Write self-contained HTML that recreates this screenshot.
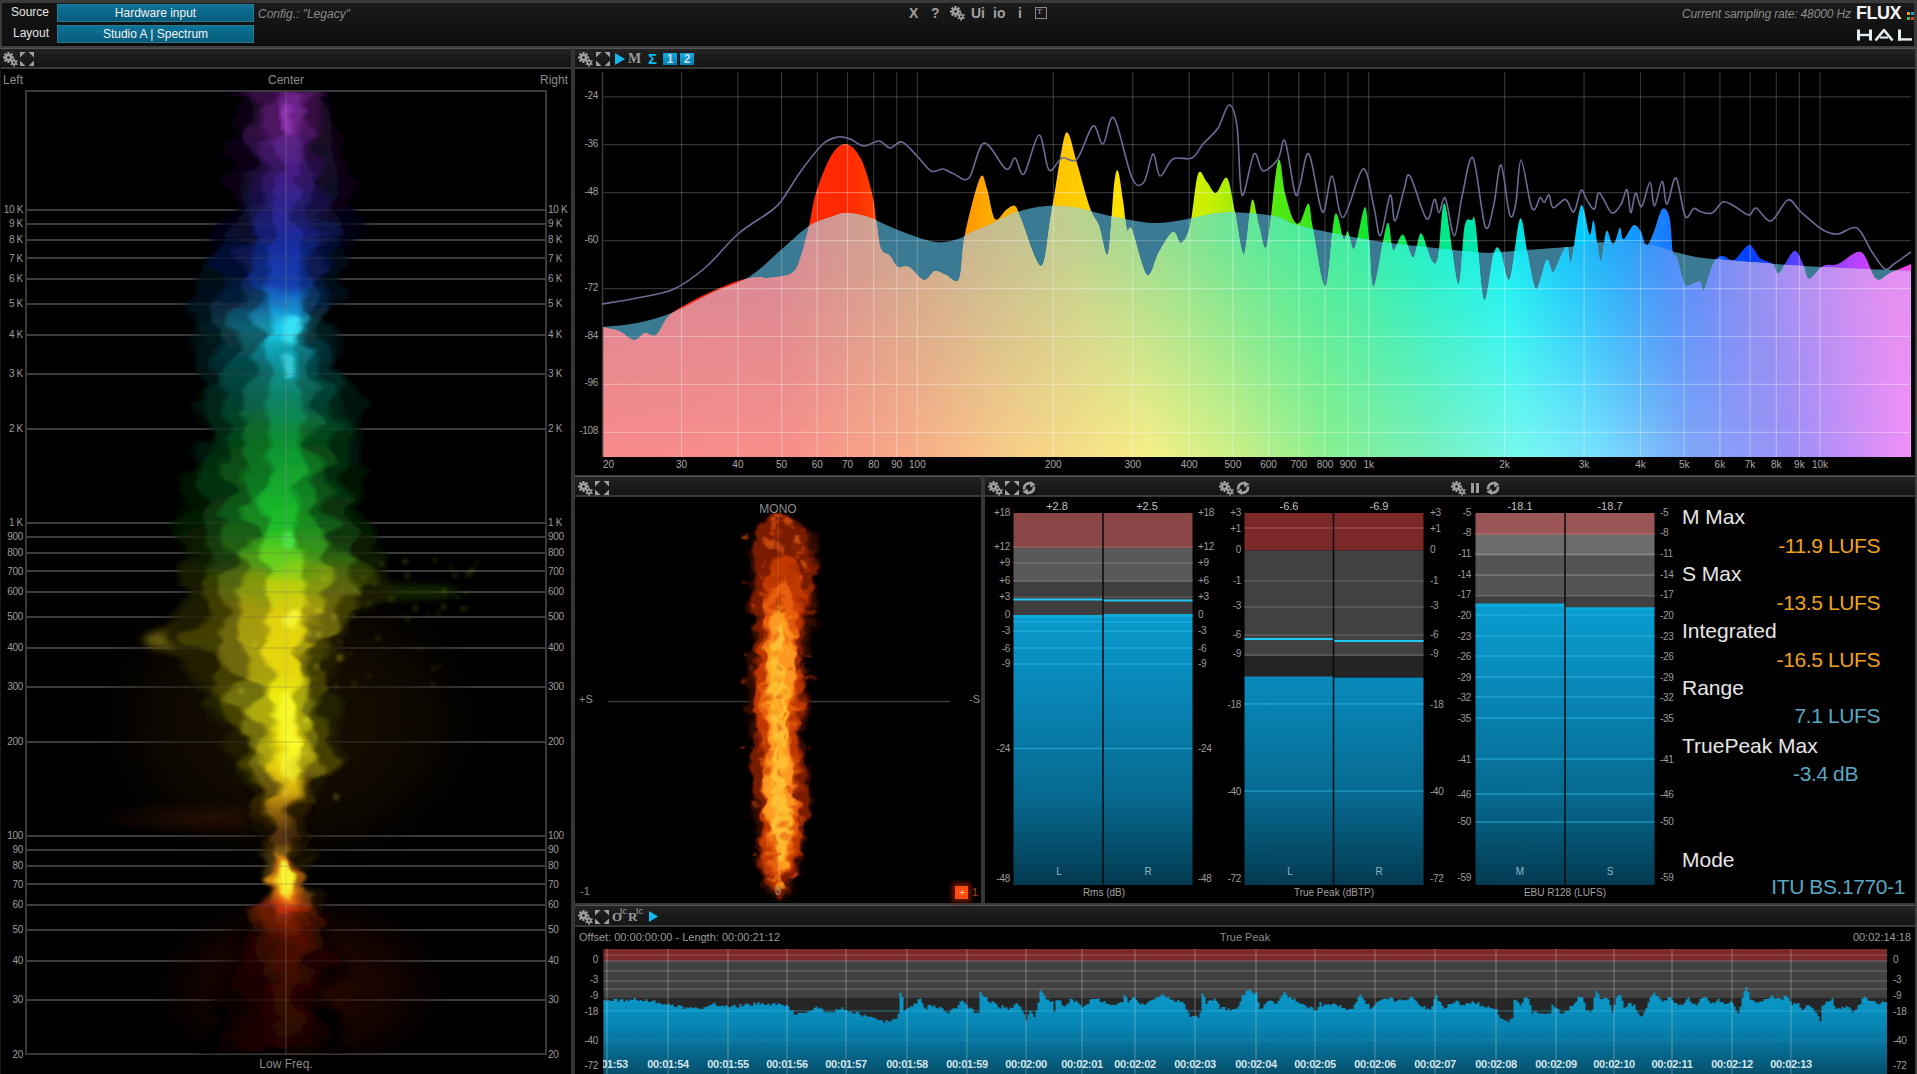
<!DOCTYPE html><html><head><meta charset="utf-8"><style>
html,body{margin:0;padding:0;background:#000;}
body{width:1917px;height:1074px;overflow:hidden;position:relative;font-family:"Liberation Sans", sans-serif;}
.a{position:absolute;}
.t{position:absolute;white-space:nowrap;line-height:1;z-index:3;}
.hdr{position:absolute;background:linear-gradient(#232323,#1b1b1b 45%,#151515);}
</style></head><body>
<div class="a" style="left:0;top:0;width:1917px;height:48px;background:#3a3a3a"></div>
<div class="a" style="left:2px;top:3px;width:1912px;height:43px;background:linear-gradient(#1a1a1a,#0d0d0d)"></div>
<div class="a" style="left:2px;top:3px;width:54px;height:42px;background:#111"></div>
<div class="t" style="left:0;width:49px;text-align:right;top:6px;font-size:12px;color:#e6e6e6">Source</div>
<div class="t" style="left:0;width:49px;text-align:right;top:27px;font-size:12px;color:#e6e6e6">Layout</div>
<div class="a" style="left:57px;top:4px;width:197px;height:18px;background:linear-gradient(#0b7499,#065a79);box-shadow:inset 0 0 0 1px #2a7a94;"></div>
<div class="t" style="left:57px;width:197px;text-align:center;top:7px;font-size:12px;color:#f2f2f2">Hardware input</div>
<div class="a" style="left:57px;top:25px;width:197px;height:18px;background:linear-gradient(#0b7499,#065a79);box-shadow:inset 0 0 0 1px #2a7a94;"></div>
<div class="t" style="left:57px;width:197px;text-align:center;top:28px;font-size:12px;color:#f2f2f2">Studio A | Spectrum</div>
<div class="t" style="left:258px;top:8px;font-size:12px;font-style:italic;color:#8a8a8a">Config.: "Legacy"</div>
<div class="t" style="left:1682px;top:8px;font-size:12px;font-style:italic;color:#8a8a8a;letter-spacing:-0.15px">Current sampling rate: 48000 Hz</div>
<div class="t" style="left:909px;top:6px;font-size:14px;font-weight:bold;color:#a0a0a0">X</div>
<div class="t" style="left:931px;top:6px;font-size:14px;font-weight:bold;color:#a0a0a0">?</div>
<svg class="a" style="left:950px;top:6px" width="15" height="15" viewBox="0 0 15 15"><g fill="#a0a0a0"><circle cx="5.5" cy="5.5" r="3.6"/><rect x="4.4" y="0" width="2.2" height="2.6" transform="rotate(0 5.5 5.5)"/><rect x="4.4" y="0" width="2.2" height="2.6" transform="rotate(45 5.5 5.5)"/><rect x="4.4" y="0" width="2.2" height="2.6" transform="rotate(90 5.5 5.5)"/><rect x="4.4" y="0" width="2.2" height="2.6" transform="rotate(135 5.5 5.5)"/><rect x="4.4" y="0" width="2.2" height="2.6" transform="rotate(180 5.5 5.5)"/><rect x="4.4" y="0" width="2.2" height="2.6" transform="rotate(225 5.5 5.5)"/><rect x="4.4" y="0" width="2.2" height="2.6" transform="rotate(270 5.5 5.5)"/><rect x="4.4" y="0" width="2.2" height="2.6" transform="rotate(315 5.5 5.5)"/><circle cx="5.5" cy="5.5" r="1.3" fill="#151515"/><circle cx="11.1" cy="10.6" r="2.6"/><rect x="10.3" y="6.6" width="1.6" height="1.8" transform="rotate(0 11.1 10.6)"/><rect x="10.3" y="6.6" width="1.6" height="1.8" transform="rotate(60 11.1 10.6)"/><rect x="10.3" y="6.6" width="1.6" height="1.8" transform="rotate(120 11.1 10.6)"/><rect x="10.3" y="6.6" width="1.6" height="1.8" transform="rotate(180 11.1 10.6)"/><rect x="10.3" y="6.6" width="1.6" height="1.8" transform="rotate(240 11.1 10.6)"/><rect x="10.3" y="6.6" width="1.6" height="1.8" transform="rotate(300 11.1 10.6)"/><circle cx="11.1" cy="10.6" r="1" fill="#151515"/></g></svg>
<div class="t" style="left:971px;top:6px;font-size:14px;font-weight:bold;color:#a0a0a0">Ui</div>
<div class="t" style="left:993px;top:6px;font-size:14px;font-weight:bold;color:#a0a0a0">io</div>
<div class="t" style="left:1018px;top:6px;font-size:14px;font-weight:bold;color:#a0a0a0">i</div>
<div class="a" style="left:1035px;top:7px;width:10px;height:10px;border:1.5px solid #8a8a8a"></div>
<div class="t" style="left:1037px;top:8px;font-size:8px;font-weight:bold;color:#8a8a8a">T</div>
<div class="t" style="left:1856px;top:4px;font-size:18px;font-weight:bold;color:#f4f4f4;letter-spacing:-0.5px">FLUX</div>
<div class="a" style="left:1907px;top:12px;width:3px;height:3px;background:#f0a020"></div>
<div class="a" style="left:1911px;top:12px;width:3px;height:3px;background:#20a0e0"></div>
<div class="a" style="left:1907px;top:17px;width:3px;height:3px;background:#40c040"></div>
<div class="a" style="left:1911px;top:17px;width:3px;height:3px;background:#e04020"></div>
<svg class="a" style="left:1856px;top:29px;z-index:3" width="57" height="13" viewBox="0 0 57 13"><g fill="#e4eef2"><rect x="1" y="0.5" width="3" height="11"/><rect x="13" y="0.5" width="3" height="11"/><rect x="1" y="4.8" width="15" height="2.4"/><rect x="42" y="0.5" width="3" height="11"/><rect x="42" y="9.2" width="14" height="2.4"/></g><path d="M19.5 11.5 L28 1 L36.5 11.5" fill="none" stroke="#e4eef2" stroke-width="2.6"/><rect x="24" y="7.5" width="8" height="2" fill="#e4eef2"/></svg>
<div class="a" style="left:0;top:46px;width:1917px;height:3px;background:#404040"></div>
<div class="hdr" style="left:0px;top:49px;width:571px;height:18px"></div>
<div class="a" style="left:0px;top:48px;width:571px;height:1px;background:#555"></div>
<div class="a" style="left:0px;top:67px;width:571px;height:2px;background:#393939"></div>
<div class="hdr" style="left:575px;top:49px;width:1340px;height:18px"></div>
<div class="a" style="left:575px;top:48px;width:1340px;height:1px;background:#555"></div>
<div class="a" style="left:575px;top:67px;width:1340px;height:2px;background:#393939"></div>
<div class="a" style="left:571px;top:49px;width:4px;height:1025px;background:#353535"></div>
<div class="a" style="left:1915px;top:46px;width:2px;height:1028px;background:#404040"></div>
<div class="a" style="left:0px;top:49px;width:1px;height:1025px;background:#181818"></div>
<div class="a" style="left:575px;top:475px;width:1340px;height:2px;background:#3a3a3a"></div>
<div class="hdr" style="left:575px;top:477px;width:406px;height:18px"></div>
<div class="a" style="left:575px;top:476px;width:406px;height:1px;background:#555"></div>
<div class="a" style="left:575px;top:495px;width:406px;height:2px;background:#393939"></div>
<div class="hdr" style="left:985px;top:477px;width:930px;height:18px"></div>
<div class="a" style="left:985px;top:476px;width:930px;height:1px;background:#555"></div>
<div class="a" style="left:985px;top:495px;width:930px;height:2px;background:#393939"></div>
<div class="a" style="left:981px;top:477px;width:4px;height:428px;background:#353535"></div>
<div class="a" style="left:575px;top:903px;width:1340px;height:2px;background:#3a3a3a"></div>
<div class="hdr" style="left:575px;top:906px;width:1340px;height:19px"></div>
<div class="a" style="left:575px;top:905px;width:1340px;height:1px;background:#555"></div>
<div class="a" style="left:575px;top:925px;width:1340px;height:2px;background:#393939"></div>
<svg class="a" style="left:3px;top:52px" width="15" height="15" viewBox="0 0 15 15"><g fill="#a0a0a0"><circle cx="5.5" cy="5.5" r="3.6"/><rect x="4.4" y="0" width="2.2" height="2.6" transform="rotate(0 5.5 5.5)"/><rect x="4.4" y="0" width="2.2" height="2.6" transform="rotate(45 5.5 5.5)"/><rect x="4.4" y="0" width="2.2" height="2.6" transform="rotate(90 5.5 5.5)"/><rect x="4.4" y="0" width="2.2" height="2.6" transform="rotate(135 5.5 5.5)"/><rect x="4.4" y="0" width="2.2" height="2.6" transform="rotate(180 5.5 5.5)"/><rect x="4.4" y="0" width="2.2" height="2.6" transform="rotate(225 5.5 5.5)"/><rect x="4.4" y="0" width="2.2" height="2.6" transform="rotate(270 5.5 5.5)"/><rect x="4.4" y="0" width="2.2" height="2.6" transform="rotate(315 5.5 5.5)"/><circle cx="5.5" cy="5.5" r="1.3" fill="#151515"/><circle cx="11.1" cy="10.6" r="2.6"/><rect x="10.3" y="6.6" width="1.6" height="1.8" transform="rotate(0 11.1 10.6)"/><rect x="10.3" y="6.6" width="1.6" height="1.8" transform="rotate(60 11.1 10.6)"/><rect x="10.3" y="6.6" width="1.6" height="1.8" transform="rotate(120 11.1 10.6)"/><rect x="10.3" y="6.6" width="1.6" height="1.8" transform="rotate(180 11.1 10.6)"/><rect x="10.3" y="6.6" width="1.6" height="1.8" transform="rotate(240 11.1 10.6)"/><rect x="10.3" y="6.6" width="1.6" height="1.8" transform="rotate(300 11.1 10.6)"/><circle cx="11.1" cy="10.6" r="1" fill="#151515"/></g></svg>
<svg class="a" style="left:20px;top:52px" width="14" height="14" viewBox="0 0 14 14"><g fill="#a0a0a0"><path d="M0 0h5.5L0 5.5z"/><path d="M14 0v5.5L8.5 0z"/><path d="M0 14v-5.5L5.5 14z"/><path d="M14 14h-5.5L14 8.5z"/></g></svg>
<svg class="a" style="left:578px;top:52px" width="15" height="15" viewBox="0 0 15 15"><g fill="#a0a0a0"><circle cx="5.5" cy="5.5" r="3.6"/><rect x="4.4" y="0" width="2.2" height="2.6" transform="rotate(0 5.5 5.5)"/><rect x="4.4" y="0" width="2.2" height="2.6" transform="rotate(45 5.5 5.5)"/><rect x="4.4" y="0" width="2.2" height="2.6" transform="rotate(90 5.5 5.5)"/><rect x="4.4" y="0" width="2.2" height="2.6" transform="rotate(135 5.5 5.5)"/><rect x="4.4" y="0" width="2.2" height="2.6" transform="rotate(180 5.5 5.5)"/><rect x="4.4" y="0" width="2.2" height="2.6" transform="rotate(225 5.5 5.5)"/><rect x="4.4" y="0" width="2.2" height="2.6" transform="rotate(270 5.5 5.5)"/><rect x="4.4" y="0" width="2.2" height="2.6" transform="rotate(315 5.5 5.5)"/><circle cx="5.5" cy="5.5" r="1.3" fill="#151515"/><circle cx="11.1" cy="10.6" r="2.6"/><rect x="10.3" y="6.6" width="1.6" height="1.8" transform="rotate(0 11.1 10.6)"/><rect x="10.3" y="6.6" width="1.6" height="1.8" transform="rotate(60 11.1 10.6)"/><rect x="10.3" y="6.6" width="1.6" height="1.8" transform="rotate(120 11.1 10.6)"/><rect x="10.3" y="6.6" width="1.6" height="1.8" transform="rotate(180 11.1 10.6)"/><rect x="10.3" y="6.6" width="1.6" height="1.8" transform="rotate(240 11.1 10.6)"/><rect x="10.3" y="6.6" width="1.6" height="1.8" transform="rotate(300 11.1 10.6)"/><circle cx="11.1" cy="10.6" r="1" fill="#151515"/></g></svg>
<svg class="a" style="left:596px;top:52px" width="14" height="14" viewBox="0 0 14 14"><g fill="#a0a0a0"><path d="M0 0h5.5L0 5.5z"/><path d="M14 0v5.5L8.5 0z"/><path d="M0 14v-5.5L5.5 14z"/><path d="M14 14h-5.5L14 8.5z"/></g></svg>
<svg class="a" style="left:615px;top:53px" width="10" height="12"><path d="M0 0L10 6L0 12z" fill="#10b8f0"/></svg>
<div class="t" style="left:628px;top:52px;font-size:14px;font-weight:bold;font-family:'Liberation Serif',serif;color:#9a9a9a">M</div>
<div class="t" style="left:648px;top:51px;font-size:15px;font-weight:bold;color:#10b8f0">&#931;</div>
<div class="a" style="left:663px;top:53px;width:14px;height:12px;background:linear-gradient(#10a8e0,#0680b0)"></div>
<div class="t" style="left:663px;width:14px;text-align:center;top:53px;font-size:12px;font-weight:bold;color:#c8d8e0">1</div>
<div class="a" style="left:680px;top:53px;width:14px;height:12px;background:linear-gradient(#10a8e0,#0680b0)"></div>
<div class="t" style="left:680px;width:14px;text-align:center;top:53px;font-size:12px;font-weight:bold;color:#c8d8e0">2</div>
<svg class="a" style="left:578px;top:481px" width="15" height="15" viewBox="0 0 15 15"><g fill="#a0a0a0"><circle cx="5.5" cy="5.5" r="3.6"/><rect x="4.4" y="0" width="2.2" height="2.6" transform="rotate(0 5.5 5.5)"/><rect x="4.4" y="0" width="2.2" height="2.6" transform="rotate(45 5.5 5.5)"/><rect x="4.4" y="0" width="2.2" height="2.6" transform="rotate(90 5.5 5.5)"/><rect x="4.4" y="0" width="2.2" height="2.6" transform="rotate(135 5.5 5.5)"/><rect x="4.4" y="0" width="2.2" height="2.6" transform="rotate(180 5.5 5.5)"/><rect x="4.4" y="0" width="2.2" height="2.6" transform="rotate(225 5.5 5.5)"/><rect x="4.4" y="0" width="2.2" height="2.6" transform="rotate(270 5.5 5.5)"/><rect x="4.4" y="0" width="2.2" height="2.6" transform="rotate(315 5.5 5.5)"/><circle cx="5.5" cy="5.5" r="1.3" fill="#151515"/><circle cx="11.1" cy="10.6" r="2.6"/><rect x="10.3" y="6.6" width="1.6" height="1.8" transform="rotate(0 11.1 10.6)"/><rect x="10.3" y="6.6" width="1.6" height="1.8" transform="rotate(60 11.1 10.6)"/><rect x="10.3" y="6.6" width="1.6" height="1.8" transform="rotate(120 11.1 10.6)"/><rect x="10.3" y="6.6" width="1.6" height="1.8" transform="rotate(180 11.1 10.6)"/><rect x="10.3" y="6.6" width="1.6" height="1.8" transform="rotate(240 11.1 10.6)"/><rect x="10.3" y="6.6" width="1.6" height="1.8" transform="rotate(300 11.1 10.6)"/><circle cx="11.1" cy="10.6" r="1" fill="#151515"/></g></svg>
<svg class="a" style="left:595px;top:481px" width="14" height="14" viewBox="0 0 14 14"><g fill="#a0a0a0"><path d="M0 0h5.5L0 5.5z"/><path d="M14 0v5.5L8.5 0z"/><path d="M0 14v-5.5L5.5 14z"/><path d="M14 14h-5.5L14 8.5z"/></g></svg>
<svg class="a" style="left:988px;top:481px" width="15" height="15" viewBox="0 0 15 15"><g fill="#a0a0a0"><circle cx="5.5" cy="5.5" r="3.6"/><rect x="4.4" y="0" width="2.2" height="2.6" transform="rotate(0 5.5 5.5)"/><rect x="4.4" y="0" width="2.2" height="2.6" transform="rotate(45 5.5 5.5)"/><rect x="4.4" y="0" width="2.2" height="2.6" transform="rotate(90 5.5 5.5)"/><rect x="4.4" y="0" width="2.2" height="2.6" transform="rotate(135 5.5 5.5)"/><rect x="4.4" y="0" width="2.2" height="2.6" transform="rotate(180 5.5 5.5)"/><rect x="4.4" y="0" width="2.2" height="2.6" transform="rotate(225 5.5 5.5)"/><rect x="4.4" y="0" width="2.2" height="2.6" transform="rotate(270 5.5 5.5)"/><rect x="4.4" y="0" width="2.2" height="2.6" transform="rotate(315 5.5 5.5)"/><circle cx="5.5" cy="5.5" r="1.3" fill="#151515"/><circle cx="11.1" cy="10.6" r="2.6"/><rect x="10.3" y="6.6" width="1.6" height="1.8" transform="rotate(0 11.1 10.6)"/><rect x="10.3" y="6.6" width="1.6" height="1.8" transform="rotate(60 11.1 10.6)"/><rect x="10.3" y="6.6" width="1.6" height="1.8" transform="rotate(120 11.1 10.6)"/><rect x="10.3" y="6.6" width="1.6" height="1.8" transform="rotate(180 11.1 10.6)"/><rect x="10.3" y="6.6" width="1.6" height="1.8" transform="rotate(240 11.1 10.6)"/><rect x="10.3" y="6.6" width="1.6" height="1.8" transform="rotate(300 11.1 10.6)"/><circle cx="11.1" cy="10.6" r="1" fill="#151515"/></g></svg>
<svg class="a" style="left:1005px;top:481px" width="14" height="14" viewBox="0 0 14 14"><g fill="#a0a0a0"><path d="M0 0h5.5L0 5.5z"/><path d="M14 0v5.5L8.5 0z"/><path d="M0 14v-5.5L5.5 14z"/><path d="M14 14h-5.5L14 8.5z"/></g></svg>
<svg class="a" style="left:1022px;top:481px" width="14" height="14" viewBox="0 0 14 14"><g fill="none" stroke="#a0a0a0" stroke-width="2.6"><path d="M2.2 8.5 A5 5 0 0 1 9.5 3"/><path d="M11.8 5.5 A5 5 0 0 1 4.5 11"/></g><g fill="#a0a0a0"><path d="M8 0 L13.5 3.2 L8.5 6.5z"/><path d="M6 14 L0.5 10.8 L5.5 7.5z"/></g></svg>
<svg class="a" style="left:1219px;top:481px" width="15" height="15" viewBox="0 0 15 15"><g fill="#a0a0a0"><circle cx="5.5" cy="5.5" r="3.6"/><rect x="4.4" y="0" width="2.2" height="2.6" transform="rotate(0 5.5 5.5)"/><rect x="4.4" y="0" width="2.2" height="2.6" transform="rotate(45 5.5 5.5)"/><rect x="4.4" y="0" width="2.2" height="2.6" transform="rotate(90 5.5 5.5)"/><rect x="4.4" y="0" width="2.2" height="2.6" transform="rotate(135 5.5 5.5)"/><rect x="4.4" y="0" width="2.2" height="2.6" transform="rotate(180 5.5 5.5)"/><rect x="4.4" y="0" width="2.2" height="2.6" transform="rotate(225 5.5 5.5)"/><rect x="4.4" y="0" width="2.2" height="2.6" transform="rotate(270 5.5 5.5)"/><rect x="4.4" y="0" width="2.2" height="2.6" transform="rotate(315 5.5 5.5)"/><circle cx="5.5" cy="5.5" r="1.3" fill="#151515"/><circle cx="11.1" cy="10.6" r="2.6"/><rect x="10.3" y="6.6" width="1.6" height="1.8" transform="rotate(0 11.1 10.6)"/><rect x="10.3" y="6.6" width="1.6" height="1.8" transform="rotate(60 11.1 10.6)"/><rect x="10.3" y="6.6" width="1.6" height="1.8" transform="rotate(120 11.1 10.6)"/><rect x="10.3" y="6.6" width="1.6" height="1.8" transform="rotate(180 11.1 10.6)"/><rect x="10.3" y="6.6" width="1.6" height="1.8" transform="rotate(240 11.1 10.6)"/><rect x="10.3" y="6.6" width="1.6" height="1.8" transform="rotate(300 11.1 10.6)"/><circle cx="11.1" cy="10.6" r="1" fill="#151515"/></g></svg>
<svg class="a" style="left:1236px;top:481px" width="14" height="14" viewBox="0 0 14 14"><g fill="none" stroke="#a0a0a0" stroke-width="2.6"><path d="M2.2 8.5 A5 5 0 0 1 9.5 3"/><path d="M11.8 5.5 A5 5 0 0 1 4.5 11"/></g><g fill="#a0a0a0"><path d="M8 0 L13.5 3.2 L8.5 6.5z"/><path d="M6 14 L0.5 10.8 L5.5 7.5z"/></g></svg>
<svg class="a" style="left:1451px;top:481px" width="15" height="15" viewBox="0 0 15 15"><g fill="#a0a0a0"><circle cx="5.5" cy="5.5" r="3.6"/><rect x="4.4" y="0" width="2.2" height="2.6" transform="rotate(0 5.5 5.5)"/><rect x="4.4" y="0" width="2.2" height="2.6" transform="rotate(45 5.5 5.5)"/><rect x="4.4" y="0" width="2.2" height="2.6" transform="rotate(90 5.5 5.5)"/><rect x="4.4" y="0" width="2.2" height="2.6" transform="rotate(135 5.5 5.5)"/><rect x="4.4" y="0" width="2.2" height="2.6" transform="rotate(180 5.5 5.5)"/><rect x="4.4" y="0" width="2.2" height="2.6" transform="rotate(225 5.5 5.5)"/><rect x="4.4" y="0" width="2.2" height="2.6" transform="rotate(270 5.5 5.5)"/><rect x="4.4" y="0" width="2.2" height="2.6" transform="rotate(315 5.5 5.5)"/><circle cx="5.5" cy="5.5" r="1.3" fill="#151515"/><circle cx="11.1" cy="10.6" r="2.6"/><rect x="10.3" y="6.6" width="1.6" height="1.8" transform="rotate(0 11.1 10.6)"/><rect x="10.3" y="6.6" width="1.6" height="1.8" transform="rotate(60 11.1 10.6)"/><rect x="10.3" y="6.6" width="1.6" height="1.8" transform="rotate(120 11.1 10.6)"/><rect x="10.3" y="6.6" width="1.6" height="1.8" transform="rotate(180 11.1 10.6)"/><rect x="10.3" y="6.6" width="1.6" height="1.8" transform="rotate(240 11.1 10.6)"/><rect x="10.3" y="6.6" width="1.6" height="1.8" transform="rotate(300 11.1 10.6)"/><circle cx="11.1" cy="10.6" r="1" fill="#151515"/></g></svg>
<div class="a" style="left:1471px;top:483px;width:3px;height:10px;background:#9a9a9a"></div><div class="a" style="left:1476px;top:483px;width:3px;height:10px;background:#9a9a9a"></div>
<svg class="a" style="left:1486px;top:481px" width="14" height="14" viewBox="0 0 14 14"><g fill="none" stroke="#a0a0a0" stroke-width="2.6"><path d="M2.2 8.5 A5 5 0 0 1 9.5 3"/><path d="M11.8 5.5 A5 5 0 0 1 4.5 11"/></g><g fill="#a0a0a0"><path d="M8 0 L13.5 3.2 L8.5 6.5z"/><path d="M6 14 L0.5 10.8 L5.5 7.5z"/></g></svg>
<svg class="a" style="left:578px;top:910px" width="15" height="15" viewBox="0 0 15 15"><g fill="#a0a0a0"><circle cx="5.5" cy="5.5" r="3.6"/><rect x="4.4" y="0" width="2.2" height="2.6" transform="rotate(0 5.5 5.5)"/><rect x="4.4" y="0" width="2.2" height="2.6" transform="rotate(45 5.5 5.5)"/><rect x="4.4" y="0" width="2.2" height="2.6" transform="rotate(90 5.5 5.5)"/><rect x="4.4" y="0" width="2.2" height="2.6" transform="rotate(135 5.5 5.5)"/><rect x="4.4" y="0" width="2.2" height="2.6" transform="rotate(180 5.5 5.5)"/><rect x="4.4" y="0" width="2.2" height="2.6" transform="rotate(225 5.5 5.5)"/><rect x="4.4" y="0" width="2.2" height="2.6" transform="rotate(270 5.5 5.5)"/><rect x="4.4" y="0" width="2.2" height="2.6" transform="rotate(315 5.5 5.5)"/><circle cx="5.5" cy="5.5" r="1.3" fill="#151515"/><circle cx="11.1" cy="10.6" r="2.6"/><rect x="10.3" y="6.6" width="1.6" height="1.8" transform="rotate(0 11.1 10.6)"/><rect x="10.3" y="6.6" width="1.6" height="1.8" transform="rotate(60 11.1 10.6)"/><rect x="10.3" y="6.6" width="1.6" height="1.8" transform="rotate(120 11.1 10.6)"/><rect x="10.3" y="6.6" width="1.6" height="1.8" transform="rotate(180 11.1 10.6)"/><rect x="10.3" y="6.6" width="1.6" height="1.8" transform="rotate(240 11.1 10.6)"/><rect x="10.3" y="6.6" width="1.6" height="1.8" transform="rotate(300 11.1 10.6)"/><circle cx="11.1" cy="10.6" r="1" fill="#151515"/></g></svg>
<svg class="a" style="left:595px;top:910px" width="14" height="14" viewBox="0 0 14 14"><g fill="#a0a0a0"><path d="M0 0h5.5L0 5.5z"/><path d="M14 0v5.5L8.5 0z"/><path d="M0 14v-5.5L5.5 14z"/><path d="M14 14h-5.5L14 8.5z"/></g></svg>
<div class="t" style="left:612px;top:910px;font-size:13px;font-weight:bold;font-family:'Liberation Serif',serif;color:#9a9a9a">O</div><div class="t" style="left:620px;top:907px;font-size:9px;color:#9a9a9a">tc</div>
<div class="t" style="left:628px;top:910px;font-size:13px;font-weight:bold;font-family:'Liberation Serif',serif;color:#9a9a9a">R</div><div class="t" style="left:636px;top:907px;font-size:9px;color:#9a9a9a">tc</div>
<svg class="a" style="left:649px;top:911px" width="9" height="11"><path d="M0 0L9 5.5L0 11z" fill="#10b8f0"/></svg>
<div class="t" style="left:3px;top:74px;font-size:12px;color:#8c8c8c">Left</div>
<div class="t" style="left:236px;width:100px;text-align:center;top:74px;font-size:12px;color:#8c8c8c">Center</div>
<div class="t" style="left:468px;width:100px;text-align:right;top:74px;font-size:12px;color:#8c8c8c">Right</div>
<div class="t" style="left:236px;width:100px;text-align:center;top:1058px;font-size:12px;color:#8c8c8c">Low Freq.</div>
<svg class="a" style="left:0;top:0" width="572" height="1074" viewBox="0 0 572 1074"><defs><filter id="bl1" x="-50%" y="-50%" width="200%" height="200%"><feGaussianBlur stdDeviation="9"/></filter><filter id="bl2" x="-50%" y="-50%" width="200%" height="200%"><feGaussianBlur stdDeviation="4"/></filter><filter id="bl3" x="-50%" y="-50%" width="200%" height="200%"><feGaussianBlur stdDeviation="2"/></filter><clipPath id="lclip"><rect x="27" y="92" width="519" height="962"/></clipPath></defs><g stroke="#383838" stroke-width="2" fill="none"><path d="M26 91H546V1054H26Z"/><path d="M26 210H546"/><path d="M26 224H546"/><path d="M26 240H546"/><path d="M26 258H546"/><path d="M26 279H546"/><path d="M26 304H546"/><path d="M26 335H546"/><path d="M26 374H546"/><path d="M26 429H546"/><path d="M26 523H546"/><path d="M26 537H546"/><path d="M26 553H546"/><path d="M26 571H546"/><path d="M26 592H546"/><path d="M26 617H546"/><path d="M26 648H546"/><path d="M26 687H546"/><path d="M26 742H546"/><path d="M26 836H546"/><path d="M26 850H546"/><path d="M26 866H546"/><path d="M26 884H546"/><path d="M26 905H546"/><path d="M26 930H546"/><path d="M26 961H546"/><path d="M26 1000H546"/></g><defs><linearGradient id="fg0" gradientUnits="userSpaceOnUse" x1="0" y1="91" x2="0" y2="1054"><stop offset="0.0010" stop-color="#100514"/><stop offset="0.0312" stop-color="#0f0513"/><stop offset="0.0945" stop-color="#090413"/><stop offset="0.1589" stop-color="#030617"/><stop offset="0.2015" stop-color="#020919"/><stop offset="0.2461" stop-color="#041d21"/><stop offset="0.2752" stop-color="#021617"/><stop offset="0.3209" stop-color="#02130e"/><stop offset="0.3624" stop-color="#021407"/><stop offset="0.4486" stop-color="#041b06"/><stop offset="0.4870" stop-color="#0f1d04"/><stop offset="0.5067" stop-color="#181d02"/><stop offset="0.5389" stop-color="#1f1d02"/><stop offset="0.5701" stop-color="#201e02"/><stop offset="0.6012" stop-color="#201e02"/><stop offset="0.6314" stop-color="#212102"/><stop offset="0.6937" stop-color="#211f02"/><stop offset="0.7259" stop-color="#1e1802"/><stop offset="0.7466" stop-color="#160f02"/><stop offset="0.7778" stop-color="#0b0601"/><stop offset="0.8017" stop-color="#211904"/><stop offset="0.8266" stop-color="#212104"/><stop offset="0.8453" stop-color="#170702"/><stop offset="0.8868" stop-color="#0a0200"/><stop offset="0.9439" stop-color="#070100"/><stop offset="1.0000" stop-color="#050100"/></linearGradient><linearGradient id="fg1" gradientUnits="userSpaceOnUse" x1="0" y1="91" x2="0" y2="1054"><stop offset="0.0010" stop-color="#200a28"/><stop offset="0.0312" stop-color="#1f0a27"/><stop offset="0.0945" stop-color="#120927"/><stop offset="0.1589" stop-color="#060d2f"/><stop offset="0.2015" stop-color="#051334"/><stop offset="0.2461" stop-color="#093c45"/><stop offset="0.2752" stop-color="#042d31"/><stop offset="0.3209" stop-color="#04271d"/><stop offset="0.3624" stop-color="#042a0f"/><stop offset="0.4486" stop-color="#08370c"/><stop offset="0.4870" stop-color="#1e3c09"/><stop offset="0.5067" stop-color="#323c04"/><stop offset="0.5389" stop-color="#413c04"/><stop offset="0.5701" stop-color="#433f04"/><stop offset="0.6012" stop-color="#433f04"/><stop offset="0.6314" stop-color="#454504"/><stop offset="0.6937" stop-color="#454104"/><stop offset="0.7259" stop-color="#3e3104"/><stop offset="0.7466" stop-color="#2d1f03"/><stop offset="0.7778" stop-color="#170d03"/><stop offset="0.8017" stop-color="#453409"/><stop offset="0.8266" stop-color="#454509"/><stop offset="0.8453" stop-color="#310f03"/><stop offset="0.8868" stop-color="#160300"/><stop offset="0.9439" stop-color="#100200"/><stop offset="1.0000" stop-color="#0a0200"/></linearGradient><linearGradient id="fg2" gradientUnits="userSpaceOnUse" x1="0" y1="91" x2="0" y2="1054"><stop offset="0.0010" stop-color="#361044"/><stop offset="0.0312" stop-color="#341041"/><stop offset="0.0945" stop-color="#1e0f42"/><stop offset="0.1589" stop-color="#0b164e"/><stop offset="0.2015" stop-color="#092056"/><stop offset="0.2461" stop-color="#0e6573"/><stop offset="0.2752" stop-color="#064b51"/><stop offset="0.3209" stop-color="#064031"/><stop offset="0.3624" stop-color="#064618"/><stop offset="0.4486" stop-color="#0e5c15"/><stop offset="0.4870" stop-color="#32650e"/><stop offset="0.5067" stop-color="#536507"/><stop offset="0.5389" stop-color="#6c6507"/><stop offset="0.5701" stop-color="#706807"/><stop offset="0.6012" stop-color="#706807"/><stop offset="0.6314" stop-color="#737307"/><stop offset="0.6937" stop-color="#736c07"/><stop offset="0.7259" stop-color="#675207"/><stop offset="0.7466" stop-color="#4b3406"/><stop offset="0.7778" stop-color="#271604"/><stop offset="0.8017" stop-color="#73560e"/><stop offset="0.8266" stop-color="#73730e"/><stop offset="0.8453" stop-color="#511805"/><stop offset="0.8868" stop-color="#240500"/><stop offset="0.9439" stop-color="#1a0400"/><stop offset="1.0000" stop-color="#110300"/></linearGradient><linearGradient id="fg3" gradientUnits="userSpaceOnUse" x1="0" y1="91" x2="0" y2="1054"><stop offset="0.0010" stop-color="#521866"/><stop offset="0.0312" stop-color="#4f1862"/><stop offset="0.0945" stop-color="#2e1763"/><stop offset="0.1589" stop-color="#102176"/><stop offset="0.2015" stop-color="#0d3083"/><stop offset="0.2461" stop-color="#1698ad"/><stop offset="0.2752" stop-color="#0a717a"/><stop offset="0.3209" stop-color="#09614a"/><stop offset="0.3624" stop-color="#096a25"/><stop offset="0.4486" stop-color="#158c1f"/><stop offset="0.4870" stop-color="#4c9816"/><stop offset="0.5067" stop-color="#7d980b"/><stop offset="0.5389" stop-color="#a3980b"/><stop offset="0.5701" stop-color="#a99e0b"/><stop offset="0.6012" stop-color="#a99e0b"/><stop offset="0.6314" stop-color="#adad0b"/><stop offset="0.6937" stop-color="#ada30b"/><stop offset="0.7259" stop-color="#9b7c0a"/><stop offset="0.7466" stop-color="#714e09"/><stop offset="0.7778" stop-color="#3b2107"/><stop offset="0.8017" stop-color="#ad8316"/><stop offset="0.8266" stop-color="#adad16"/><stop offset="0.8453" stop-color="#7a2508"/><stop offset="0.8868" stop-color="#360800"/><stop offset="0.9439" stop-color="#270600"/><stop offset="1.0000" stop-color="#1a0400"/></linearGradient><linearGradient id="fg4" gradientUnits="userSpaceOnUse" x1="0" y1="91" x2="0" y2="1054"><stop offset="0.0010" stop-color="#6e218a"/><stop offset="0.0312" stop-color="#6a2184"/><stop offset="0.0945" stop-color="#3e1f86"/><stop offset="0.1589" stop-color="#162ca0"/><stop offset="0.2015" stop-color="#1241b1"/><stop offset="0.2461" stop-color="#1dceeb"/><stop offset="0.2752" stop-color="#0d98a6"/><stop offset="0.3209" stop-color="#0d8364"/><stop offset="0.3624" stop-color="#0d9032"/><stop offset="0.4486" stop-color="#1cbd2a"/><stop offset="0.4870" stop-color="#67ce1d"/><stop offset="0.5067" stop-color="#a9ce0f"/><stop offset="0.5389" stop-color="#ddce0f"/><stop offset="0.5701" stop-color="#e4d50f"/><stop offset="0.6012" stop-color="#e4d50f"/><stop offset="0.6314" stop-color="#ebeb0f"/><stop offset="0.6937" stop-color="#ebdd0f"/><stop offset="0.7259" stop-color="#d2a80e"/><stop offset="0.7466" stop-color="#996a0c"/><stop offset="0.7778" stop-color="#4f2c09"/><stop offset="0.8017" stop-color="#ebb11d"/><stop offset="0.8266" stop-color="#ebeb1d"/><stop offset="0.8453" stop-color="#a6320b"/><stop offset="0.8868" stop-color="#4a0b00"/><stop offset="0.9439" stop-color="#350800"/><stop offset="1.0000" stop-color="#230600"/></linearGradient></defs><g clip-path="url(#lclip)"><defs><radialGradient id="hz1"><stop offset="0" stop-color="#1a1000" stop-opacity="1"/><stop offset="0.6" stop-color="#140c00" stop-opacity="0.7"/><stop offset="1" stop-color="#100800" stop-opacity="0"/></radialGradient><radialGradient id="hz2"><stop offset="0" stop-color="#2e0800" stop-opacity="1"/><stop offset="0.6" stop-color="#220600" stop-opacity="0.6"/><stop offset="1" stop-color="#1a0400" stop-opacity="0"/></radialGradient><radialGradient id="hz3"><stop offset="0" stop-color="#301004" stop-opacity="1"/><stop offset="1" stop-color="#301004" stop-opacity="0"/></radialGradient></defs><ellipse cx="290" cy="720" rx="200" ry="160" fill="url(#hz1)"/><ellipse cx="300" cy="985" rx="150" ry="95" fill="url(#hz2)"/><ellipse cx="210" cy="818" rx="120" ry="18" fill="url(#hz3)" opacity="0.7"/><ellipse cx="215" cy="640" rx="72" ry="13" fill="#6a5e08" filter="url(#bl2)"/><ellipse cx="235" cy="638" rx="50" ry="7" fill="#a89810" filter="url(#bl3)"/><ellipse cx="400" cy="592" rx="60" ry="7" fill="#182c06" filter="url(#bl2)"/><defs><filter id="disp" x="-10%" y="-5%" width="120%" height="110%"><feTurbulence type="fractalNoise" baseFrequency="0.025 0.05" numOctaves="2" seed="4" result="t"/><feDisplacementMap in="SourceGraphic" in2="t" scale="22" xChannelSelector="R" yChannelSelector="G"/></filter></defs><g filter="url(#disp)"><path d="M209.9 91.0 L252.6 95.0 L246.9 99.0 L240.8 103.0 L235.5 107.0 L232.3 111.0 L232.0 115.0 L234.2 119.0 L237.8 123.0 L240.6 127.0 L240.4 131.0 L236.8 135.0 L230.8 139.0 L224.7 143.0 L221.0 147.0 L221.4 151.0 L225.7 155.0 L232.0 159.0 L237.7 163.0 L240.2 167.0 L238.3 171.0 L232.9 175.0 L226.1 179.0 L220.8 183.0 L218.7 187.0 L221.0 191.0 L226.6 195.0 L233.0 199.0 L237.7 203.0 L238.7 207.0 L235.8 211.0 L229.7 215.0 L222.3 219.0 L215.6 223.0 L211.0 227.0 L209.0 231.0 L209.3 235.0 L210.9 239.0 L212.6 243.0 L214.0 247.0 L214.0 251.0 L212.1 255.0 L208.7 259.0 L204.3 263.0 L199.9 267.0 L196.3 271.0 L194.3 275.0 L193.8 279.0 L194.4 283.0 L195.4 287.0 L195.7 291.0 L194.6 295.0 L192.2 299.0 L189.4 303.0 L187.4 307.0 L187.3 311.0 L189.5 315.0 L193.4 319.0 L197.8 323.0 L201.2 327.0 L201.8 331.0 L200.1 335.0 L197.1 339.0 L193.8 343.0 L191.3 347.0 L190.3 351.0 L190.5 355.0 L192.1 359.0 L194.1 363.0 L196.5 367.0 L199.3 371.0 L202.7 375.0 L206.5 379.0 L209.9 383.0 L211.4 387.0 L210.1 391.0 L205.4 395.0 L198.5 399.0 L192.2 403.0 L188.6 407.0 L189.1 411.0 L194.3 415.0 L202.6 419.0 L211.4 423.0 L217.5 427.0 L218.7 431.0 L214.8 435.0 L207.6 439.0 L198.7 443.0 L191.9 447.0 L189.1 451.0 L190.2 455.0 L193.4 459.0 L196.2 463.0 L196.7 467.0 L194.3 471.0 L189.7 475.0 L184.8 479.0 L181.5 483.0 L180.9 487.0 L182.8 491.0 L186.1 495.0 L189.0 499.0 L189.9 503.0 L188.3 507.0 L184.6 511.0 L179.8 515.0 L175.3 519.0 L172.5 523.0 L172.4 527.0 L174.6 531.0 L178.6 535.0 L183.5 539.0 L188.3 543.0 L192.0 547.0 L193.8 551.0 L193.3 555.0 L190.6 559.0 L186.2 563.0 L181.5 567.0 L177.7 571.0 L175.9 575.0 L176.3 579.0 L178.6 583.0 L181.5 587.0 L184.0 591.0 L185.2 595.0 L184.6 599.0 L182.8 603.0 L180.2 607.0 L177.6 611.0 L175.3 615.0 L173.2 619.0 L170.9 623.0 L168.6 627.0 L166.5 631.0 L165.3 635.0 L165.5 639.0 L169.4 643.0 L174.8 647.0 L179.8 651.0 L183.1 655.0 L184.5 659.0 L184.3 663.0 L184.1 667.0 L185.2 671.0 L188.0 675.0 L193.3 679.0 L199.9 683.0 L205.6 687.0 L208.6 691.0 L208.3 695.0 L205.7 699.0 L201.8 703.0 L200.2 707.0 L202.6 711.0 L208.9 715.0 L217.5 719.0 L225.6 723.0 L230.8 727.0 L231.6 731.0 L228.7 735.0 L224.1 739.0 L220.2 743.0 L219.2 747.0 L221.7 751.0 L226.7 755.0 L232.6 759.0 L238.2 763.0 L241.4 767.0 L242.4 771.0 L242.2 775.0 L242.0 779.0 L242.9 783.0 L245.4 787.0 L248.5 791.0 L250.8 795.0 L252.3 799.0 L252.6 803.0 L252.0 807.0 L250.9 811.0 L250.1 815.0 L249.8 819.0 L250.2 823.0 L251.2 827.0 L252.8 831.0 L254.8 835.0 L257.3 839.0 L261.1 843.0 L265.1 847.0 L268.5 851.0 L271.0 855.0 L272.4 859.0 L272.8 863.0 L271.2 867.0 L269.8 871.0 L269.2 875.0 L269.7 879.0 L271.0 883.0 L273.1 887.0 L271.3 891.0 L269.9 895.0 L268.8 899.0 L267.6 903.0 L266.3 907.0 L264.0 911.0 L259.8 915.0 L253.4 919.0 L245.3 923.0 L236.7 927.0 L229.4 931.0 L225.2 935.0 L224.5 939.0 L226.7 943.0 L231.1 947.0 L235.3 951.0 L236.1 955.0 L233.1 959.0 L227.3 963.0 L220.6 967.0 L215.4 971.0 L213.2 975.0 L213.9 979.0 L216.1 983.0 L217.9 987.0 L217.7 991.0 L215.2 995.0 L211.2 999.0 L207.7 1003.0 L206.3 1007.0 L207.8 1011.0 L211.5 1015.0 L215.4 1019.0 L217.6 1023.0 L216.6 1027.0 L212.4 1031.0 L206.2 1035.0 L200.1 1039.0 L195.9 1043.0 L194.7 1047.0 L196.1 1051.0 L356.2 1051.0 L351.2 1047.0 L345.4 1043.0 L340.7 1039.0 L338.7 1035.0 L339.7 1031.0 L342.7 1027.0 L345.9 1023.0 L347.1 1019.0 L345.2 1015.0 L340.0 1011.0 L332.7 1007.0 L325.1 1003.0 L319.5 999.0 L318.1 995.0 L320.0 991.0 L324.6 987.0 L330.9 983.0 L337.5 979.0 L343.1 975.0 L346.7 971.0 L347.9 967.0 L346.6 963.0 L343.5 959.0 L339.7 955.0 L336.6 951.0 L335.1 947.0 L334.1 943.0 L333.5 939.0 L334.2 935.0 L335.0 931.0 L335.2 927.0 L334.3 923.0 L332.7 919.0 L331.0 915.0 L329.7 911.0 L328.7 907.0 L326.6 903.0 L322.3 899.0 L315.6 895.0 L306.6 891.0 L296.5 887.0 L291.9 883.0 L290.1 879.0 L292.3 875.0 L298.1 871.0 L305.7 867.0 L312.8 863.0 L317.0 859.0 L317.3 855.0 L314.0 851.0 L309.0 847.0 L304.5 843.0 L301.9 839.0 L300.9 835.0 L301.8 831.0 L303.2 827.0 L303.8 823.0 L303.1 819.0 L301.6 815.0 L300.3 811.0 L303.1 807.0 L308.5 803.0 L314.9 799.0 L320.9 795.0 L325.3 791.0 L326.6 787.0 L325.9 783.0 L324.8 779.0 L325.0 775.0 L327.4 771.0 L332.2 767.0 L338.2 763.0 L343.9 759.0 L345.7 755.0 L344.9 751.0 L342.0 747.0 L338.0 743.0 L334.7 739.0 L333.2 735.0 L334.0 731.0 L336.7 727.0 L340.4 723.0 L343.8 719.0 L345.9 715.0 L345.9 711.0 L343.8 707.0 L340.0 703.0 L335.0 699.0 L330.6 695.0 L327.1 691.0 L325.4 687.0 L325.9 683.0 L328.6 679.0 L332.5 675.0 L336.6 671.0 L339.4 667.0 L340.5 663.0 L340.0 659.0 L338.5 655.0 L337.1 651.0 L336.6 647.0 L337.1 643.0 L338.7 639.0 L342.0 635.0 L343.9 631.0 L344.4 627.0 L344.8 623.0 L346.7 619.0 L351.9 615.0 L360.8 611.0 L371.9 607.0 L383.3 603.0 L392.4 599.0 L397.1 595.0 L396.6 591.0 L392.1 587.0 L386.5 583.0 L382.6 579.0 L376.9 575.0 L375.8 571.0 L377.9 567.0 L381.1 563.0 L383.5 559.0 L384.9 555.0 L383.8 551.0 L381.0 547.0 L378.0 543.0 L375.8 539.0 L374.6 535.0 L373.5 531.0 L371.8 527.0 L368.7 523.0 L365.5 519.0 L362.0 515.0 L359.5 511.0 L358.9 507.0 L360.2 503.0 L362.7 499.0 L365.2 495.0 L366.6 491.0 L366.4 487.0 L364.7 483.0 L362.3 479.0 L360.2 475.0 L359.0 471.0 L359.0 467.0 L359.9 463.0 L361.2 459.0 L362.3 455.0 L362.8 451.0 L362.8 447.0 L362.2 443.0 L361.2 439.0 L360.1 435.0 L359.1 431.0 L358.6 427.0 L359.1 423.0 L360.7 419.0 L363.2 415.0 L366.0 411.0 L368.3 407.0 L369.2 403.0 L367.8 399.0 L363.6 395.0 L358.5 391.0 L353.8 387.0 L350.3 383.0 L348.2 379.0 L347.1 375.0 L345.8 371.0 L343.6 367.0 L340.4 363.0 L336.7 359.0 L334.1 355.0 L334.3 351.0 L336.8 347.0 L340.4 343.0 L343.4 339.0 L343.6 335.0 L339.8 331.0 L332.4 327.0 L324.1 323.0 L316.8 319.0 L313.4 315.0 L315.3 311.0 L322.1 307.0 L331.4 303.0 L340.3 299.0 L346.1 295.0 L347.6 291.0 L345.4 287.0 L341.5 283.0 L338.2 279.0 L337.1 275.0 L338.3 271.0 L341.3 267.0 L344.7 263.0 L347.2 259.0 L348.6 255.0 L349.2 251.0 L350.1 247.0 L352.0 243.0 L354.7 239.0 L358.5 235.0 L362.2 231.0 L364.7 227.0 L365.3 223.0 L363.9 219.0 L361.0 215.0 L357.5 211.0 L354.3 207.0 L352.0 203.0 L351.0 199.0 L351.1 195.0 L352.1 191.0 L353.6 187.0 L355.2 183.0 L355.9 179.0 L355.6 175.0 L354.1 171.0 L351.5 167.0 L348.4 163.0 L345.6 159.0 L343.8 155.0 L343.3 151.0 L343.9 147.0 L344.6 143.0 L344.5 139.0 L343.0 135.0 L340.2 131.0 L336.8 127.0 L334.2 123.0 L332.3 119.0 L331.6 115.0 L332.4 111.0 L333.5 107.0 L333.7 103.0 L332.0 99.0 L328.9 95.0 L347.7 91.0Z" fill="url(#fg0)" filter="url(#bl2)"/><path d="M215.7 91.0 L254.5 95.0 L255.0 99.0 L255.0 103.0 L254.4 107.0 L253.3 111.0 L251.5 115.0 L249.3 119.0 L247.3 123.0 L245.6 127.0 L244.5 131.0 L244.2 135.0 L245.2 139.0 L247.3 143.0 L250.4 147.0 L253.9 151.0 L256.8 155.0 L258.5 159.0 L258.2 163.0 L256.0 167.0 L252.1 171.0 L247.4 175.0 L243.0 179.0 L239.7 183.0 L237.9 187.0 L238.0 191.0 L239.6 195.0 L241.7 199.0 L243.6 203.0 L244.3 207.0 L243.6 211.0 L241.6 215.0 L238.7 219.0 L235.8 223.0 L233.3 227.0 L231.4 231.0 L230.0 235.0 L228.4 239.0 L226.2 243.0 L223.4 247.0 L219.7 251.0 L215.4 255.0 L211.5 259.0 L209.0 263.0 L208.7 267.0 L210.8 271.0 L214.9 275.0 L219.7 279.0 L223.9 283.0 L226.4 287.0 L226.3 291.0 L223.6 295.0 L219.1 299.0 L214.0 303.0 L210.1 307.0 L208.5 311.0 L209.6 315.0 L213.2 319.0 L218.2 323.0 L223.0 327.0 L225.5 331.0 L225.6 335.0 L223.2 339.0 L219.1 343.0 L214.8 347.0 L211.5 351.0 L210.3 355.0 L211.9 359.0 L215.6 363.0 L220.2 367.0 L224.4 371.0 L226.8 375.0 L226.7 379.0 L224.1 383.0 L219.4 387.0 L214.0 391.0 L208.9 395.0 L205.1 399.0 L203.9 403.0 L204.7 407.0 L206.7 411.0 L209.1 415.0 L211.3 419.0 L212.8 423.0 L213.6 427.0 L213.8 431.0 L213.8 435.0 L213.9 439.0 L213.2 443.0 L212.3 447.0 L211.2 451.0 L209.6 455.0 L207.3 459.0 L204.6 463.0 L201.7 467.0 L199.3 471.0 L197.7 475.0 L197.2 479.0 L197.9 483.0 L199.6 487.0 L201.6 491.0 L203.4 495.0 L204.7 499.0 L205.2 503.0 L205.1 507.0 L204.6 511.0 L204.1 515.0 L203.7 519.0 L203.7 523.0 L204.5 527.0 L205.4 531.0 L206.2 535.0 L206.9 539.0 L207.4 543.0 L207.9 547.0 L208.5 551.0 L209.3 555.0 L210.1 559.0 L210.5 563.0 L210.3 567.0 L209.2 571.0 L207.2 575.0 L204.7 579.0 L202.2 583.0 L200.6 587.0 L200.5 591.0 L202.1 595.0 L205.1 599.0 L208.6 603.0 L211.6 607.0 L212.7 611.0 L211.3 615.0 L206.9 619.0 L200.1 623.0 L192.3 627.0 L185.0 631.0 L180.0 635.0 L178.4 639.0 L182.2 643.0 L189.6 647.0 L198.5 651.0 L207.0 655.0 L213.8 659.0 L217.8 663.0 L219.1 667.0 L218.0 671.0 L215.4 675.0 L213.2 679.0 L212.5 683.0 L213.7 687.0 L216.4 691.0 L219.9 695.0 L223.4 699.0 L225.1 703.0 L225.8 707.0 L225.7 711.0 L225.7 715.0 L226.7 719.0 L229.1 723.0 L233.1 727.0 L238.2 731.0 L243.4 735.0 L247.6 739.0 L249.8 743.0 L249.7 747.0 L247.5 751.0 L244.3 755.0 L241.2 759.0 L240.2 763.0 L241.2 767.0 L244.3 771.0 L249.0 775.0 L254.0 779.0 L258.2 783.0 L260.7 787.0 L260.9 791.0 L258.4 795.0 L255.0 799.0 L251.8 803.0 L249.8 807.0 L249.7 811.0 L251.7 815.0 L255.0 819.0 L258.7 823.0 L261.9 827.0 L263.7 831.0 L263.9 835.0 L262.5 839.0 L260.8 843.0 L259.1 847.0 L257.7 851.0 L257.3 855.0 L258.1 859.0 L260.0 863.0 L261.7 867.0 L264.1 871.0 L267.0 875.0 L270.1 879.0 L273.2 883.0 L276.0 887.0 L275.0 891.0 L273.3 895.0 L270.6 899.0 L267.1 903.0 L263.0 907.0 L258.7 911.0 L254.7 915.0 L251.4 919.0 L249.3 923.0 L248.4 927.0 L248.4 931.0 L248.7 935.0 L248.6 939.0 L247.4 943.0 L245.8 947.0 L244.0 951.0 L241.6 955.0 L239.2 959.0 L237.7 963.0 L237.4 967.0 L238.4 971.0 L240.1 975.0 L241.8 979.0 L242.6 983.0 L241.9 987.0 L239.5 991.0 L235.8 995.0 L231.6 999.0 L227.7 1003.0 L224.9 1007.0 L223.6 1011.0 L223.6 1015.0 L224.2 1019.0 L224.7 1023.0 L224.4 1027.0 L222.9 1031.0 L220.6 1035.0 L218.0 1039.0 L216.1 1043.0 L215.6 1047.0 L216.8 1051.0 L328.0 1051.0 L326.3 1047.0 L327.6 1043.0 L330.8 1039.0 L333.8 1035.0 L334.9 1031.0 L332.9 1027.0 L328.1 1023.0 L321.9 1019.0 L316.3 1015.0 L313.3 1011.0 L313.5 1007.0 L316.6 1003.0 L321.2 999.0 L326.2 995.0 L328.7 991.0 L328.3 987.0 L325.8 983.0 L322.7 979.0 L321.0 975.0 L321.9 971.0 L325.5 967.0 L330.8 963.0 L335.8 959.0 L338.7 955.0 L338.5 951.0 L335.5 947.0 L329.6 943.0 L322.8 939.0 L318.4 935.0 L317.2 931.0 L318.8 927.0 L321.8 923.0 L324.1 919.0 L324.4 915.0 L321.8 911.0 L317.1 907.0 L311.2 903.0 L305.8 899.0 L302.5 895.0 L301.4 891.0 L301.7 887.0 L305.5 883.0 L307.2 879.0 L306.1 875.0 L302.4 871.0 L297.4 867.0 L293.2 863.0 L291.4 859.0 L293.0 855.0 L297.5 851.0 L303.5 847.0 L309.2 843.0 L312.6 839.0 L312.5 835.0 L310.1 831.0 L306.8 827.0 L304.0 823.0 L303.0 819.0 L303.9 815.0 L306.0 811.0 L310.0 807.0 L313.1 803.0 L313.7 799.0 L312.3 795.0 L310.0 791.0 L307.9 787.0 L308.1 783.0 L311.3 779.0 L317.3 775.0 L324.6 771.0 L331.4 767.0 L336.0 763.0 L337.8 759.0 L335.5 755.0 L331.9 751.0 L328.6 747.0 L326.8 743.0 L326.6 739.0 L327.8 735.0 L329.0 731.0 L329.0 727.0 L327.2 723.0 L323.8 719.0 L319.7 715.0 L316.5 711.0 L315.4 707.0 L317.0 703.0 L320.7 699.0 L326.0 695.0 L330.4 691.0 L332.8 687.0 L332.5 683.0 L329.8 679.0 L326.2 675.0 L323.0 671.0 L321.2 667.0 L321.5 663.0 L323.3 659.0 L325.6 655.0 L327.3 651.0 L327.5 647.0 L326.2 643.0 L324.8 639.0 L325.9 635.0 L328.5 631.0 L333.1 627.0 L339.3 623.0 L346.3 619.0 L352.5 615.0 L357.0 611.0 L358.6 607.0 L358.4 603.0 L357.5 599.0 L357.2 595.0 L358.6 591.0 L362.0 587.0 L366.7 583.0 L371.8 579.0 L371.3 575.0 L369.1 571.0 L365.2 567.0 L360.2 563.0 L355.5 559.0 L353.1 555.0 L352.4 551.0 L353.2 547.0 L354.8 543.0 L356.1 539.0 L356.4 535.0 L355.2 531.0 L352.8 527.0 L350.0 523.0 L348.6 519.0 L348.5 515.0 L349.6 511.0 L351.6 507.0 L353.4 503.0 L354.0 499.0 L352.9 495.0 L350.1 491.0 L346.4 487.0 L342.9 483.0 L340.6 479.0 L340.2 475.0 L341.8 471.0 L344.6 467.0 L347.7 463.0 L350.2 459.0 L351.5 455.0 L351.8 451.0 L351.4 447.0 L351.0 443.0 L351.0 439.0 L351.5 435.0 L352.2 431.0 L352.4 427.0 L351.5 423.0 L349.3 419.0 L346.2 415.0 L342.7 411.0 L339.9 407.0 L338.7 403.0 L339.2 399.0 L340.4 395.0 L342.8 391.0 L345.2 387.0 L346.8 383.0 L346.9 379.0 L345.5 375.0 L342.9 371.0 L339.6 367.0 L336.2 363.0 L333.0 359.0 L330.1 355.0 L327.9 351.0 L325.4 347.0 L322.5 343.0 L319.6 339.0 L317.1 335.0 L315.7 331.0 L315.9 327.0 L318.4 323.0 L322.0 319.0 L325.9 315.0 L329.5 311.0 L331.8 307.0 L332.5 303.0 L331.8 299.0 L330.0 295.0 L327.7 291.0 L325.7 287.0 L324.4 283.0 L324.1 279.0 L324.3 275.0 L325.0 271.0 L326.0 267.0 L327.2 263.0 L328.8 259.0 L331.0 255.0 L333.8 251.0 L337.0 247.0 L340.1 243.0 L342.3 239.0 L343.7 235.0 L343.9 231.0 L343.1 227.0 L341.4 223.0 L339.4 219.0 L337.5 215.0 L336.2 211.0 L335.6 207.0 L335.8 203.0 L336.4 199.0 L337.2 195.0 L338.0 191.0 L338.7 187.0 L339.2 183.0 L339.3 179.0 L339.2 175.0 L338.9 171.0 L338.3 167.0 L337.4 163.0 L336.3 159.0 L335.0 155.0 L333.7 151.0 L332.6 147.0 L331.9 143.0 L331.7 139.0 L331.9 135.0 L332.4 131.0 L332.8 127.0 L333.1 123.0 L332.3 119.0 L330.2 115.0 L327.9 111.0 L325.3 107.0 L322.7 103.0 L320.0 99.0 L317.4 95.0 L333.1 91.0Z" fill="url(#fg1)" filter="url(#bl3)"/><path d="M231.4 91.0 L255.5 95.0 L254.7 99.0 L257.2 103.0 L260.9 107.0 L263.3 111.0 L262.5 115.0 L258.4 119.0 L252.5 123.0 L247.0 127.0 L243.4 131.0 L242.5 135.0 L244.0 139.0 L246.8 143.0 L249.9 147.0 L252.6 151.0 L254.9 155.0 L256.5 159.0 L257.4 163.0 L257.2 167.0 L255.6 171.0 L252.7 175.0 L249.5 179.0 L247.0 183.0 L245.9 187.0 L246.6 191.0 L248.2 195.0 L249.5 199.0 L249.3 203.0 L247.8 207.0 L246.1 211.0 L245.9 215.0 L248.3 219.0 L253.2 223.0 L258.7 227.0 L261.9 231.0 L260.6 235.0 L254.5 239.0 L245.2 243.0 L236.5 247.0 L231.3 251.0 L231.3 255.0 L235.9 259.0 L242.5 263.0 L248.0 267.0 L250.0 271.0 L248.5 275.0 L245.0 279.0 L241.9 283.0 L241.0 287.0 L242.6 291.0 L245.0 295.0 L246.1 299.0 L244.5 303.0 L240.1 307.0 L234.5 311.0 L229.9 315.0 L228.2 319.0 L229.7 323.0 L233.4 327.0 L236.9 331.0 L239.1 335.0 L239.4 339.0 L238.1 343.0 L236.3 347.0 L234.7 351.0 L233.5 355.0 L232.4 359.0 L230.8 363.0 L228.6 367.0 L226.2 371.0 L224.6 375.0 L224.4 379.0 L225.6 383.0 L227.2 387.0 L228.0 391.0 L227.3 395.0 L225.2 399.0 L223.6 403.0 L223.2 407.0 L224.7 411.0 L227.6 415.0 L230.7 419.0 L232.2 423.0 L231.5 427.0 L229.0 431.0 L226.2 435.0 L224.9 439.0 L225.5 443.0 L227.7 447.0 L230.0 451.0 L230.5 455.0 L228.1 459.0 L223.5 463.0 L218.8 467.0 L216.6 471.0 L218.4 475.0 L223.5 479.0 L229.9 483.0 L234.7 487.0 L235.6 491.0 L232.6 495.0 L227.2 499.0 L222.2 503.0 L219.8 507.0 L220.4 511.0 L223.0 515.0 L225.4 519.0 L225.9 523.0 L224.4 527.0 L221.7 531.0 L219.9 535.0 L220.9 539.0 L225.0 543.0 L231.1 547.0 L236.8 551.0 L240.1 555.0 L239.8 559.0 L236.3 563.0 L231.1 567.0 L225.9 571.0 L222.0 575.0 L219.9 579.0 L219.1 583.0 L219.5 587.0 L220.6 591.0 L222.6 595.0 L225.3 599.0 L228.3 603.0 L230.5 607.0 L230.9 611.0 L229.3 615.0 L225.8 619.0 L221.7 623.0 L218.6 627.0 L217.4 631.0 L217.6 635.0 L218.0 639.0 L218.6 643.0 L217.7 647.0 L215.5 651.0 L213.9 655.0 L215.3 659.0 L220.6 663.0 L229.1 667.0 L238.1 671.0 L243.8 675.0 L244.7 679.0 L240.7 683.0 L233.8 687.0 L227.7 691.0 L225.4 695.0 L228.1 699.0 L234.0 703.0 L240.7 707.0 L245.4 711.0 L246.4 715.0 L244.2 719.0 L240.9 723.0 L239.2 727.0 L240.5 731.0 L244.8 735.0 L250.3 739.0 L254.8 743.0 L256.9 747.0 L256.2 751.0 L254.1 755.0 L252.0 759.0 L251.8 763.0 L253.3 767.0 L255.8 771.0 L258.5 775.0 L260.5 779.0 L261.9 783.0 L263.0 787.0 L264.1 791.0 L264.7 795.0 L265.2 799.0 L265.2 803.0 L264.9 807.0 L264.8 811.0 L265.8 815.0 L268.3 819.0 L271.8 823.0 L275.0 827.0 L276.3 831.0 L274.6 835.0 L270.1 839.0 L265.2 843.0 L261.8 847.0 L261.8 851.0 L265.6 855.0 L272.1 859.0 L278.8 863.0 L282.5 867.0 L283.0 871.0 L281.0 875.0 L278.6 879.0 L277.7 883.0 L279.3 887.0 L279.9 891.0 L280.0 895.0 L277.5 899.0 L271.6 903.0 L263.5 907.0 L255.5 911.0 L250.4 915.0 L249.6 919.0 L252.7 923.0 L257.5 927.0 L261.4 931.0 L262.4 935.0 L260.0 939.0 L255.3 943.0 L250.9 947.0 L248.3 951.0 L247.0 955.0 L246.3 959.0 L244.9 963.0 L242.3 967.0 L238.7 971.0 L235.4 975.0 L233.9 979.0 L234.9 983.0 L238.1 987.0 L242.2 991.0 L245.6 995.0 L247.3 999.0 L246.9 1003.0 L245.2 1007.0 L243.1 1011.0 L241.0 1015.0 L239.0 1019.0 L237.0 1023.0 L234.8 1027.0 L232.8 1031.0 L231.8 1035.0 L232.6 1039.0 L235.2 1043.0 L238.8 1047.0 L242.0 1051.0 L319.2 1051.0 L312.5 1047.0 L309.7 1043.0 L312.3 1039.0 L318.6 1035.0 L324.8 1031.0 L327.2 1027.0 L323.7 1023.0 L315.6 1019.0 L306.6 1015.0 L300.9 1011.0 L301.2 1007.0 L307.0 1003.0 L315.6 999.0 L323.2 995.0 L326.0 991.0 L323.8 987.0 L318.9 983.0 L315.1 979.0 L315.4 975.0 L320.3 971.0 L328.1 967.0 L335.1 963.0 L338.6 959.0 L337.4 955.0 L332.8 951.0 L327.7 947.0 L323.8 943.0 L322.5 939.0 L324.0 935.0 L326.4 931.0 L327.6 927.0 L326.5 923.0 L323.3 919.0 L319.6 915.0 L316.5 911.0 L314.6 907.0 L312.9 903.0 L310.3 899.0 L306.6 895.0 L301.6 891.0 L296.3 887.0 L294.5 883.0 L294.0 879.0 L294.4 875.0 L294.6 871.0 L293.7 867.0 L291.7 863.0 L289.3 859.0 L288.0 855.0 L289.1 851.0 L292.6 847.0 L297.1 843.0 L300.6 839.0 L300.7 835.0 L297.9 831.0 L293.4 827.0 L289.2 823.0 L287.4 819.0 L288.7 815.0 L292.1 811.0 L297.2 807.0 L301.0 803.0 L302.0 799.0 L301.2 795.0 L300.4 791.0 L301.3 787.0 L305.0 783.0 L310.8 779.0 L316.8 775.0 L320.9 771.0 L321.8 767.0 L320.0 763.0 L317.2 759.0 L314.2 755.0 L313.3 751.0 L314.5 747.0 L316.3 743.0 L317.3 739.0 L316.2 735.0 L313.5 731.0 L310.2 727.0 L307.9 723.0 L307.8 719.0 L309.6 715.0 L312.4 711.0 L314.5 707.0 L314.9 703.0 L313.1 699.0 L310.4 695.0 L307.6 691.0 L305.7 687.0 L305.4 683.0 L306.5 679.0 L308.5 675.0 L310.4 671.0 L311.6 667.0 L311.9 663.0 L311.7 659.0 L311.3 655.0 L311.5 651.0 L312.9 647.0 L315.8 643.0 L320.3 639.0 L326.8 635.0 L332.6 631.0 L336.4 627.0 L337.7 623.0 L336.8 619.0 L335.2 615.0 L334.8 611.0 L336.8 607.0 L341.9 603.0 L349.0 599.0 L355.7 595.0 L359.7 591.0 L359.8 587.0 L356.7 583.0 L353.0 579.0 L348.2 575.0 L347.6 571.0 L350.8 567.0 L355.2 563.0 L357.7 559.0 L356.2 555.0 L349.2 551.0 L339.3 547.0 L330.2 543.0 L325.6 539.0 L326.8 535.0 L332.2 531.0 L338.1 527.0 L340.9 523.0 L339.1 519.0 L333.1 515.0 L326.1 511.0 L321.8 507.0 L322.4 503.0 L327.5 499.0 L334.1 495.0 L338.5 491.0 L338.3 487.0 L333.6 483.0 L326.9 479.0 L321.8 475.0 L320.8 471.0 L324.4 467.0 L330.3 463.0 L335.6 459.0 L337.9 455.0 L336.6 451.0 L333.4 447.0 L331.1 443.0 L331.6 439.0 L335.1 435.0 L339.8 431.0 L343.2 427.0 L343.3 423.0 L340.0 419.0 L334.8 415.0 L330.5 411.0 L328.8 407.0 L330.2 403.0 L332.8 399.0 L334.1 395.0 L333.0 391.0 L329.4 387.0 L324.7 383.0 L320.9 379.0 L319.4 375.0 L320.2 371.0 L321.7 367.0 L322.1 363.0 L319.9 359.0 L315.5 355.0 L310.7 351.0 L307.0 347.0 L305.4 343.0 L305.9 339.0 L307.1 335.0 L307.4 331.0 L306.3 327.0 L304.7 323.0 L303.7 319.0 L304.7 315.0 L308.3 311.0 L313.2 307.0 L317.5 303.0 L319.2 299.0 L317.8 295.0 L314.7 291.0 L312.0 287.0 L312.2 283.0 L315.8 279.0 L321.5 275.0 L326.6 271.0 L328.7 267.0 L327.1 263.0 L323.0 259.0 L319.3 255.0 L318.9 251.0 L323.0 247.0 L330.2 243.0 L337.4 239.0 L341.5 235.0 L340.6 231.0 L335.1 227.0 L327.7 223.0 L321.8 219.0 L319.8 215.0 L322.1 211.0 L326.7 207.0 L330.7 203.0 L331.4 199.0 L328.3 195.0 L322.5 191.0 L316.8 187.0 L313.8 183.0 L314.4 179.0 L318.2 175.0 L323.2 171.0 L326.8 167.0 L327.6 163.0 L325.1 159.0 L320.8 155.0 L316.3 151.0 L313.4 147.0 L312.9 143.0 L314.5 139.0 L317.2 135.0 L319.9 131.0 L321.6 127.0 L321.9 123.0 L320.6 119.0 L318.4 115.0 L316.8 111.0 L316.4 107.0 L317.5 103.0 L319.5 99.0 L321.5 95.0 L336.0 91.0Z" fill="url(#fg2)" filter="url(#bl3)"/><path d="M259.1 91.0 L279.3 95.0 L278.2 99.0 L274.3 103.0 L268.6 107.0 L262.7 111.0 L258.8 115.0 L257.9 119.0 L260.4 123.0 L264.6 127.0 L268.3 131.0 L269.9 135.0 L268.5 139.0 L265.0 143.0 L261.2 147.0 L258.8 151.0 L258.8 155.0 L261.0 159.0 L263.8 163.0 L265.7 167.0 L265.6 171.0 L263.7 175.0 L261.2 179.0 L259.5 183.0 L259.6 187.0 L261.5 191.0 L264.2 195.0 L266.0 199.0 L265.7 203.0 L263.1 207.0 L259.2 211.0 L255.5 215.0 L253.5 219.0 L253.8 223.0 L255.8 227.0 L258.0 231.0 L259.2 235.0 L258.7 239.0 L256.7 243.0 L254.6 247.0 L253.0 251.0 L252.6 255.0 L253.0 259.0 L253.4 263.0 L253.2 267.0 L252.0 271.0 L250.6 275.0 L250.0 279.0 L251.0 283.0 L253.8 287.0 L257.4 291.0 L260.2 295.0 L260.8 299.0 L258.7 303.0 L254.8 307.0 L250.9 311.0 L249.0 315.0 L250.3 319.0 L254.5 323.0 L260.0 327.0 L264.1 331.0 L265.2 335.0 L263.0 339.0 L258.4 343.0 L253.3 347.0 L249.6 351.0 L248.5 355.0 L250.0 359.0 L252.6 363.0 L254.7 367.0 L255.2 371.0 L253.8 375.0 L251.2 379.0 L248.5 383.0 L246.4 387.0 L245.3 391.0 L244.8 395.0 L244.3 399.0 L243.9 403.0 L243.2 407.0 L242.7 411.0 L242.8 415.0 L243.5 419.0 L244.5 423.0 L245.0 427.0 L244.7 431.0 L243.5 435.0 L242.2 439.0 L241.4 443.0 L242.2 447.0 L244.5 451.0 L247.4 455.0 L249.5 459.0 L249.5 463.0 L247.4 467.0 L244.0 471.0 L241.3 475.0 L240.9 479.0 L243.7 483.0 L248.9 487.0 L254.3 491.0 L257.5 495.0 L257.1 499.0 L253.1 503.0 L247.4 507.0 L242.4 511.0 L240.7 515.0 L242.9 519.0 L248.1 523.0 L254.1 527.0 L257.9 531.0 L257.9 535.0 L254.2 539.0 L248.5 543.0 L243.1 547.0 L240.3 551.0 L240.8 555.0 L243.6 559.0 L247.1 563.0 L249.2 567.0 L249.1 571.0 L246.8 575.0 L243.5 579.0 L240.5 583.0 L238.8 587.0 L238.6 591.0 L239.3 595.0 L240.1 599.0 L240.3 603.0 L239.8 607.0 L239.1 611.0 L238.7 615.0 L238.6 619.0 L238.8 623.0 L238.8 627.0 L238.3 631.0 L237.6 635.0 L237.2 639.0 L238.6 643.0 L241.4 647.0 L244.8 651.0 L247.8 655.0 L249.3 659.0 L249.0 663.0 L247.3 667.0 L245.5 671.0 L245.0 675.0 L247.1 679.0 L251.7 683.0 L257.4 687.0 L262.0 691.0 L263.6 695.0 L261.8 699.0 L257.0 703.0 L252.1 707.0 L249.3 711.0 L250.1 715.0 L254.5 719.0 L260.7 723.0 L266.2 727.0 L269.1 731.0 L268.6 735.0 L265.4 739.0 L261.6 743.0 L259.0 747.0 L258.8 751.0 L261.0 755.0 L264.5 759.0 L268.1 763.0 L270.6 767.0 L271.6 771.0 L272.0 775.0 L272.4 779.0 L273.5 783.0 L275.0 787.0 L276.1 791.0 L275.8 795.0 L274.5 799.0 L272.6 803.0 L271.2 807.0 L271.3 811.0 L273.3 815.0 L276.2 819.0 L278.9 823.0 L279.8 827.0 L278.3 831.0 L275.1 835.0 L271.4 839.0 L269.2 843.0 L269.4 847.0 L271.5 851.0 L274.5 855.0 L276.7 859.0 L277.1 863.0 L275.0 867.0 L272.0 871.0 L269.8 875.0 L269.7 879.0 L271.7 883.0 L275.0 887.0 L276.0 891.0 L275.1 895.0 L271.6 899.0 L266.6 903.0 L261.9 907.0 L259.4 911.0 L259.9 915.0 L263.1 919.0 L267.5 923.0 L271.0 927.0 L272.0 931.0 L270.2 935.0 L266.3 939.0 L262.0 943.0 L259.2 947.0 L258.9 951.0 L260.5 955.0 L263.4 959.0 L266.5 963.0 L269.1 967.0 L270.8 971.0 L271.7 975.0 L271.7 979.0 L270.7 983.0 L268.6 987.0 L265.3 991.0 L261.5 995.0 L258.2 999.0 L256.6 1003.0 L257.5 1007.0 L260.7 1011.0 L264.7 1015.0 L267.6 1019.0 L267.5 1023.0 L263.6 1027.0 L256.8 1031.0 L249.3 1035.0 L243.7 1039.0 L241.9 1043.0 L244.0 1047.0 L248.7 1051.0 L319.6 1051.0 L315.6 1047.0 L310.0 1043.0 L305.3 1039.0 L303.2 1035.0 L304.2 1031.0 L307.3 1027.0 L310.6 1023.0 L312.1 1019.0 L311.0 1015.0 L307.5 1011.0 L303.2 1007.0 L300.3 1003.0 L300.1 999.0 L303.3 995.0 L308.1 991.0 L312.7 987.0 L315.2 983.0 L314.7 979.0 L311.4 975.0 L306.8 971.0 L302.7 967.0 L300.7 963.0 L301.4 959.0 L304.6 955.0 L309.0 951.0 L313.4 947.0 L315.8 943.0 L315.7 939.0 L313.9 935.0 L310.9 931.0 L307.5 927.0 L304.4 923.0 L301.8 919.0 L299.9 915.0 L298.7 911.0 L298.0 907.0 L297.2 903.0 L296.2 899.0 L295.0 895.0 L293.7 891.0 L292.3 887.0 L292.8 883.0 L293.4 879.0 L294.0 875.0 L294.4 871.0 L294.1 867.0 L293.0 863.0 L291.1 859.0 L288.8 855.0 L287.1 851.0 L286.6 847.0 L287.9 843.0 L290.6 839.0 L293.6 835.0 L296.1 831.0 L297.1 827.0 L296.2 823.0 L293.8 819.0 L291.0 815.0 L289.2 811.0 L290.2 807.0 L293.3 803.0 L297.2 799.0 L300.6 795.0 L302.4 791.0 L302.0 787.0 L300.4 783.0 L299.3 779.0 L299.9 775.0 L303.1 771.0 L308.1 767.0 L313.4 763.0 L317.1 759.0 L317.1 755.0 L314.2 751.0 L309.6 747.0 L305.1 743.0 L302.6 739.0 L302.9 735.0 L305.5 731.0 L308.7 727.0 L310.9 723.0 L311.0 719.0 L308.9 715.0 L305.9 711.0 L303.7 707.0 L303.5 703.0 L305.2 699.0 L308.0 695.0 L309.9 691.0 L309.2 687.0 L305.7 683.0 L300.4 679.0 L295.5 675.0 L293.1 671.0 L294.4 667.0 L299.4 663.0 L306.1 659.0 L312.0 655.0 L315.0 651.0 L314.1 647.0 L310.0 643.0 L304.9 639.0 L301.9 635.0 L301.8 631.0 L304.9 627.0 L310.4 623.0 L316.4 619.0 L321.3 615.0 L324.0 611.0 L324.4 607.0 L323.6 603.0 L323.1 599.0 L324.0 595.0 L326.4 591.0 L329.9 587.0 L333.3 583.0 L335.7 579.0 L334.2 575.0 L330.9 571.0 L326.8 567.0 L322.6 563.0 L319.7 559.0 L319.0 555.0 L319.8 551.0 L321.7 547.0 L323.9 543.0 L325.3 539.0 L325.3 535.0 L323.6 531.0 L320.4 527.0 L316.7 523.0 L313.7 519.0 L311.8 515.0 L311.6 511.0 L312.8 507.0 L314.6 503.0 L315.8 499.0 L315.9 495.0 L314.5 491.0 L312.5 487.0 L310.8 483.0 L310.8 479.0 L312.8 475.0 L316.3 471.0 L320.1 467.0 L322.3 463.0 L321.8 459.0 L318.3 455.0 L313.1 451.0 L308.3 447.0 L306.0 443.0 L307.5 439.0 L312.5 435.0 L319.3 431.0 L325.4 427.0 L328.5 423.0 L327.6 419.0 L323.4 415.0 L317.9 411.0 L313.3 407.0 L311.3 403.0 L312.1 399.0 L314.3 395.0 L316.5 391.0 L317.3 387.0 L315.8 383.0 L312.7 379.0 L309.5 375.0 L307.7 371.0 L307.9 367.0 L309.7 363.0 L311.7 359.0 L312.4 355.0 L311.0 351.0 L307.4 347.0 L302.7 343.0 L298.8 339.0 L297.2 335.0 L298.2 331.0 L301.4 327.0 L305.3 323.0 L308.1 319.0 L308.9 315.0 L307.7 311.0 L305.8 307.0 L304.5 303.0 L304.6 299.0 L306.3 295.0 L308.8 291.0 L310.9 287.0 L311.6 283.0 L310.7 279.0 L308.7 275.0 L306.9 271.0 L306.3 267.0 L307.5 263.0 L310.4 259.0 L314.0 255.0 L317.1 251.0 L318.9 247.0 L318.8 243.0 L317.1 239.0 L314.8 235.0 L312.5 231.0 L310.9 227.0 L310.0 223.0 L309.5 219.0 L309.3 215.0 L309.2 211.0 L309.2 207.0 L309.5 203.0 L310.2 199.0 L311.1 195.0 L312.0 191.0 L312.6 187.0 L312.6 183.0 L311.8 179.0 L310.2 175.0 L308.3 171.0 L306.2 167.0 L304.4 163.0 L303.2 159.0 L303.0 155.0 L304.0 151.0 L306.2 147.0 L309.3 143.0 L312.6 139.0 L315.2 135.0 L316.2 131.0 L315.2 127.0 L312.3 123.0 L308.2 119.0 L304.2 115.0 L302.1 111.0 L302.3 107.0 L304.7 103.0 L307.8 99.0 L310.1 95.0 L319.4 91.0Z" fill="url(#fg3)" filter="url(#bl3)"/><path d="M275.9 91.0 L282.9 95.0 L280.3 99.0 L278.5 103.0 L278.4 107.0 L280.0 111.0 L282.5 115.0 L284.9 119.0 L286.0 123.0 L285.2 127.0 L282.5 131.0 L278.6 135.0 L275.0 139.0 L272.8 143.0 L272.6 147.0 L274.5 151.0 L277.5 155.0 L280.5 159.0 L282.3 163.0 L282.3 167.0 L280.6 171.0 L277.9 175.0 L275.1 179.0 L273.2 183.0 L272.5 187.0 L272.9 191.0 L273.7 195.0 L274.4 199.0 L274.3 203.0 L273.4 207.0 L272.1 211.0 L270.9 215.0 L270.5 219.0 L270.9 223.0 L272.2 227.0 L273.5 231.0 L274.3 235.0 L274.1 239.0 L272.8 243.0 L270.9 247.0 L268.9 251.0 L267.6 255.0 L267.5 259.0 L268.5 263.0 L270.1 267.0 L271.8 271.0 L272.5 275.0 L272.1 279.0 L270.4 283.0 L268.2 287.0 L266.0 291.0 L264.7 295.0 L264.8 299.0 L266.2 303.0 L268.4 307.0 L270.7 311.0 L272.3 315.0 L272.7 319.0 L271.8 323.0 L269.9 327.0 L267.5 331.0 L265.3 335.0 L264.0 339.0 L263.6 343.0 L264.1 347.0 L265.1 351.0 L266.3 355.0 L267.2 359.0 L267.8 363.0 L268.0 367.0 L268.1 371.0 L268.0 375.0 L268.1 379.0 L268.1 383.0 L268.1 387.0 L268.0 391.0 L267.5 395.0 L266.9 399.0 L266.4 403.0 L266.1 407.0 L266.3 411.0 L266.9 415.0 L267.9 419.0 L269.1 423.0 L270.0 427.0 L270.5 431.0 L270.4 435.0 L269.7 439.0 L268.6 443.0 L267.4 447.0 L266.7 451.0 L266.5 455.0 L267.0 459.0 L267.9 463.0 L268.7 467.0 L269.1 471.0 L268.7 475.0 L267.4 479.0 L265.5 483.0 L263.3 487.0 L261.5 491.0 L260.3 495.0 L260.2 499.0 L261.2 503.0 L262.8 507.0 L264.7 511.0 L266.2 515.0 L266.9 519.0 L266.7 523.0 L265.7 527.0 L264.1 531.0 L262.6 535.0 L261.5 539.0 L261.1 543.0 L261.4 547.0 L262.3 551.0 L263.4 555.0 L264.4 559.0 L265.0 563.0 L265.3 567.0 L265.4 571.0 L265.4 575.0 L265.7 579.0 L266.2 583.0 L266.8 587.0 L267.3 591.0 L267.3 595.0 L266.9 599.0 L266.1 603.0 L265.2 607.0 L264.6 611.0 L264.7 615.0 L265.5 619.0 L266.6 623.0 L267.8 627.0 L268.3 631.0 L268.0 635.0 L266.8 639.0 L265.5 643.0 L264.6 647.0 L264.4 651.0 L265.6 655.0 L267.9 659.0 L271.1 663.0 L274.1 667.0 L276.1 671.0 L276.3 675.0 L274.9 679.0 L272.4 683.0 L269.8 687.0 L268.0 691.0 L267.7 695.0 L269.2 699.0 L271.6 703.0 L274.4 707.0 L276.6 711.0 L277.7 715.0 L277.4 719.0 L276.2 723.0 L274.8 727.0 L273.9 731.0 L273.9 735.0 L274.7 739.0 L275.8 743.0 L276.5 747.0 L276.4 751.0 L275.4 755.0 L273.7 759.0 L272.4 763.0 L271.9 767.0 L272.7 771.0 L274.4 775.0 L276.6 779.0 L278.3 783.0 L278.7 787.0 L277.7 791.0 L275.3 795.0 L272.7 799.0 L270.9 803.0 L270.6 807.0 L272.0 811.0 L274.5 815.0 L277.2 819.0 L278.7 823.0 L278.5 827.0 L276.5 831.0 L273.3 835.0 L270.2 839.0 L268.6 843.0 L268.9 847.0 L271.4 851.0 L275.1 855.0 L279.1 859.0 L282.1 863.0 L283.1 867.0 L282.5 871.0 L280.8 875.0 L279.1 879.0 L278.0 883.0 L278.2 887.0 L278.6 891.0 L279.5 895.0 L280.2 899.0 L280.2 903.0 L279.3 907.0 L278.1 911.0 L277.0 915.0 L276.6 919.0 L277.3 923.0 L278.8 927.0 L280.4 931.0 L281.4 935.0 L281.1 939.0 L279.5 943.0 L277.3 947.0 L275.2 951.0 L273.9 955.0 L273.9 959.0 L275.1 963.0 L277.2 967.0 L279.2 971.0 L280.2 975.0 L279.9 979.0 L278.3 983.0 L275.9 987.0 L273.7 991.0 L272.4 995.0 L272.4 999.0 L273.8 1003.0 L275.9 1007.0 L278.0 1011.0 L279.4 1015.0 L279.6 1019.0 L278.6 1023.0 L276.8 1027.0 L274.7 1031.0 L272.8 1035.0 L271.7 1039.0 L271.3 1043.0 L271.4 1047.0 L271.9 1051.0 L295.6 1051.0 L292.0 1047.0 L289.3 1043.0 L288.4 1039.0 L289.7 1035.0 L292.8 1031.0 L296.6 1027.0 L299.9 1023.0 L301.6 1019.0 L301.2 1015.0 L299.1 1011.0 L296.0 1007.0 L293.2 1003.0 L291.6 999.0 L291.9 995.0 L293.6 991.0 L295.9 987.0 L298.0 983.0 L299.1 979.0 L299.1 975.0 L298.4 971.0 L297.5 967.0 L297.4 963.0 L298.4 959.0 L300.2 955.0 L302.4 951.0 L304.1 947.0 L304.1 943.0 L302.1 939.0 L299.0 935.0 L295.4 931.0 L292.5 927.0 L291.1 923.0 L291.5 919.0 L293.3 915.0 L295.5 911.0 L297.1 907.0 L297.0 903.0 L294.9 899.0 L291.4 895.0 L287.4 891.0 L284.0 887.0 L283.1 883.0 L284.0 879.0 L286.3 875.0 L289.2 871.0 L291.5 867.0 L292.5 863.0 L292.0 859.0 L290.3 855.0 L288.3 851.0 L286.7 847.0 L286.2 843.0 L286.9 839.0 L288.0 835.0 L289.3 831.0 L290.1 827.0 L289.9 823.0 L289.0 819.0 L287.9 815.0 L287.2 811.0 L288.0 807.0 L290.0 803.0 L292.8 799.0 L295.4 795.0 L297.1 791.0 L297.1 787.0 L295.5 783.0 L292.7 779.0 L289.9 775.0 L287.9 771.0 L287.6 767.0 L289.1 763.0 L292.1 759.0 L295.2 755.0 L297.9 751.0 L299.3 747.0 L299.0 743.0 L297.5 739.0 L295.2 735.0 L293.2 731.0 L291.9 727.0 L291.8 723.0 L292.6 719.0 L293.8 715.0 L294.8 711.0 L295.2 707.0 L295.0 703.0 L294.5 699.0 L294.3 695.0 L294.8 691.0 L296.1 687.0 L298.1 683.0 L300.2 679.0 L301.9 675.0 L302.6 671.0 L302.1 667.0 L300.8 663.0 L299.3 659.0 L298.3 655.0 L298.5 651.0 L299.9 647.0 L302.1 643.0 L304.8 639.0 L307.2 635.0 L308.3 631.0 L308.0 627.0 L306.5 623.0 L304.6 619.0 L303.2 615.0 L302.8 611.0 L303.7 607.0 L305.5 603.0 L307.8 599.0 L309.7 595.0 L310.7 591.0 L310.4 587.0 L309.2 583.0 L307.5 579.0 L304.8 575.0 L302.7 571.0 L301.3 567.0 L300.4 563.0 L299.6 559.0 L298.9 555.0 L297.7 551.0 L296.4 547.0 L295.3 543.0 L294.8 539.0 L295.4 535.0 L296.8 531.0 L298.6 527.0 L300.2 523.0 L301.0 519.0 L300.6 515.0 L299.0 511.0 L296.7 507.0 L294.6 503.0 L293.3 499.0 L293.4 495.0 L294.8 491.0 L297.2 487.0 L299.9 483.0 L302.2 479.0 L303.8 475.0 L304.3 471.0 L304.2 467.0 L303.8 463.0 L303.4 459.0 L303.3 455.0 L303.5 451.0 L303.7 447.0 L303.7 443.0 L303.5 439.0 L303.2 435.0 L302.8 431.0 L302.7 427.0 L303.0 423.0 L303.5 419.0 L304.2 415.0 L304.5 411.0 L304.4 407.0 L303.6 403.0 L302.2 399.0 L300.5 395.0 L299.1 391.0 L298.2 387.0 L298.0 383.0 L298.2 379.0 L298.5 375.0 L298.7 371.0 L298.5 367.0 L297.8 363.0 L296.9 359.0 L296.0 355.0 L295.2 351.0 L294.6 347.0 L294.1 343.0 L293.6 339.0 L293.2 335.0 L293.0 331.0 L293.2 327.0 L294.3 323.0 L296.0 319.0 L298.0 315.0 L300.0 311.0 L301.4 307.0 L301.7 303.0 L300.9 299.0 L299.0 295.0 L296.8 291.0 L295.0 287.0 L294.2 283.0 L294.7 279.0 L296.3 275.0 L298.3 271.0 L300.1 267.0 L301.2 263.0 L301.4 259.0 L300.9 255.0 L300.2 251.0 L299.8 247.0 L299.8 243.0 L300.1 239.0 L300.3 235.0 L299.9 231.0 L298.7 227.0 L296.7 223.0 L294.4 219.0 L292.8 215.0 L292.4 211.0 L293.6 207.0 L296.1 203.0 L299.0 199.0 L301.4 195.0 L302.3 191.0 L301.4 187.0 L299.1 183.0 L296.2 179.0 L294.1 175.0 L293.6 171.0 L295.0 167.0 L297.7 163.0 L300.8 159.0 L303.1 155.0 L303.9 151.0 L303.1 147.0 L301.1 143.0 L299.0 139.0 L297.8 135.0 L297.9 131.0 L299.4 127.0 L301.5 123.0 L303.0 119.0 L303.2 115.0 L302.0 111.0 L299.8 107.0 L297.3 103.0 L295.7 99.0 L295.4 95.0 L300.8 91.0Z" fill="url(#fg4)" filter="url(#bl3)"/><ellipse cx="287" cy="118" rx="6" ry="16" fill="#9a38c0" opacity="0.7" filter="url(#bl3)"/><ellipse cx="290" cy="330" rx="10" ry="14" fill="#40f0ff" opacity="0.7" filter="url(#bl3)"/><ellipse cx="287" cy="365" rx="6" ry="10" fill="#40e0f0" opacity="0.7" filter="url(#bl3)"/><ellipse cx="290" cy="540" rx="8" ry="10" fill="#50f050" opacity="0.7" filter="url(#bl3)"/><ellipse cx="292" cy="620" rx="10" ry="12" fill="#ffff40" opacity="0.7" filter="url(#bl3)"/><ellipse cx="287" cy="720" rx="9" ry="30" fill="#ffff30" opacity="0.7" filter="url(#bl3)"/><ellipse cx="290" cy="760" rx="9" ry="20" fill="#ffff30" opacity="0.7" filter="url(#bl3)"/><ellipse cx="290" cy="903" rx="18" ry="10" fill="#ff3810" opacity="0.4" filter="url(#bl3)"/><ellipse cx="287" cy="878" rx="18" ry="26" fill="#ff7010" opacity="0.45" filter="url(#bl3)"/><ellipse cx="287" cy="878" rx="9" ry="20" fill="#ffff30" opacity="0.9" filter="url(#bl3)"/></g><circle cx="443.9" cy="591.1" r="2.3" fill="#80a820" opacity="0.45" filter="url(#bl3)"/><circle cx="443.6" cy="607.1" r="2.4" fill="#80a820" opacity="0.45" filter="url(#bl3)"/><circle cx="405.2" cy="561.5" r="2.4" fill="#80a820" opacity="0.45" filter="url(#bl3)"/><circle cx="466.1" cy="592.4" r="1.6" fill="#80a820" opacity="0.45" filter="url(#bl3)"/><circle cx="374.5" cy="583.5" r="2.0" fill="#80a820" opacity="0.45" filter="url(#bl3)"/><circle cx="341.8" cy="588.7" r="1.7" fill="#80a820" opacity="0.45" filter="url(#bl3)"/><circle cx="468.3" cy="574.0" r="2.3" fill="#80a820" opacity="0.45" filter="url(#bl3)"/><circle cx="451.6" cy="568.0" r="1.6" fill="#80a820" opacity="0.45" filter="url(#bl3)"/><circle cx="357.7" cy="590.9" r="1.5" fill="#80a820" opacity="0.45" filter="url(#bl3)"/><circle cx="369.3" cy="603.6" r="1.7" fill="#80a820" opacity="0.45" filter="url(#bl3)"/><circle cx="462.1" cy="609.1" r="1.8" fill="#80a820" opacity="0.45" filter="url(#bl3)"/><circle cx="415.5" cy="608.1" r="2.2" fill="#80a820" opacity="0.45" filter="url(#bl3)"/><circle cx="471.7" cy="570.2" r="2.2" fill="#80a820" opacity="0.45" filter="url(#bl3)"/><circle cx="465.1" cy="608.3" r="1.8" fill="#80a820" opacity="0.45" filter="url(#bl3)"/><circle cx="363.2" cy="578.1" r="1.6" fill="#80a820" opacity="0.45" filter="url(#bl3)"/><circle cx="382.2" cy="563.3" r="2.1" fill="#80a820" opacity="0.45" filter="url(#bl3)"/><circle cx="434.9" cy="560.2" r="1.8" fill="#80a820" opacity="0.45" filter="url(#bl3)"/><circle cx="454.6" cy="575.5" r="2.0" fill="#80a820" opacity="0.45" filter="url(#bl3)"/><circle cx="407.4" cy="575.8" r="2.2" fill="#80a820" opacity="0.45" filter="url(#bl3)"/><circle cx="476.5" cy="562.9" r="1.5" fill="#80a820" opacity="0.45" filter="url(#bl3)"/><circle cx="458.3" cy="597.5" r="1.5" fill="#80a820" opacity="0.45" filter="url(#bl3)"/><circle cx="391.3" cy="599.4" r="2.1" fill="#80a820" opacity="0.45" filter="url(#bl3)"/><circle cx="316.1" cy="610.7" r="1.7" fill="#8a8a18" opacity="0.35" filter="url(#bl3)"/><circle cx="335.5" cy="686.4" r="2.3" fill="#8a8a18" opacity="0.35" filter="url(#bl3)"/><circle cx="432.5" cy="684.4" r="1.8" fill="#8a8a18" opacity="0.35" filter="url(#bl3)"/><circle cx="378.2" cy="638.4" r="2.3" fill="#8a8a18" opacity="0.35" filter="url(#bl3)"/><circle cx="407.3" cy="618.6" r="2.3" fill="#8a8a18" opacity="0.35" filter="url(#bl3)"/><circle cx="314.8" cy="678.8" r="2.4" fill="#8a8a18" opacity="0.35" filter="url(#bl3)"/><circle cx="354.3" cy="617.3" r="2.1" fill="#8a8a18" opacity="0.35" filter="url(#bl3)"/><circle cx="354.2" cy="683.4" r="2.4" fill="#8a8a18" opacity="0.35" filter="url(#bl3)"/><circle cx="350.6" cy="653.6" r="1.8" fill="#8a8a18" opacity="0.35" filter="url(#bl3)"/><circle cx="320.2" cy="624.2" r="1.6" fill="#8a8a18" opacity="0.35" filter="url(#bl3)"/><circle cx="439.6" cy="665.1" r="1.7" fill="#8a8a18" opacity="0.35" filter="url(#bl3)"/><circle cx="438.3" cy="613.9" r="2.0" fill="#8a8a18" opacity="0.35" filter="url(#bl3)"/><circle cx="340.9" cy="642.5" r="2.1" fill="#8a8a18" opacity="0.35" filter="url(#bl3)"/><circle cx="369.2" cy="676.1" r="1.9" fill="#8a8a18" opacity="0.35" filter="url(#bl3)"/><circle cx="429.1" cy="614.5" r="1.5" fill="#8a8a18" opacity="0.35" filter="url(#bl3)"/><circle cx="419.0" cy="649.5" r="1.6" fill="#8a8a18" opacity="0.35" filter="url(#bl3)"/><circle cx="433.5" cy="668.5" r="2.1" fill="#8a8a18" opacity="0.35" filter="url(#bl3)"/><circle cx="323.9" cy="673.0" r="1.9" fill="#8a8a18" opacity="0.35" filter="url(#bl3)"/><circle cx="324.5" cy="578.8" r="1.9" fill="#f8f040" opacity="0.45" filter="url(#bl3)"/><circle cx="339.9" cy="657.8" r="2.8" fill="#f8f040" opacity="0.45" filter="url(#bl3)"/><circle cx="285.4" cy="793.8" r="2.2" fill="#f8f040" opacity="0.45" filter="url(#bl3)"/><circle cx="287.9" cy="729.7" r="1.9" fill="#f8f040" opacity="0.45" filter="url(#bl3)"/><circle cx="254.7" cy="645.0" r="2.1" fill="#f8f040" opacity="0.45" filter="url(#bl3)"/><circle cx="336.0" cy="797.0" r="2.4" fill="#f8f040" opacity="0.45" filter="url(#bl3)"/><circle cx="273.8" cy="669.8" r="1.6" fill="#f8f040" opacity="0.45" filter="url(#bl3)"/><circle cx="318.2" cy="610.8" r="2.8" fill="#f8f040" opacity="0.45" filter="url(#bl3)"/><circle cx="318.6" cy="633.9" r="2.7" fill="#f8f040" opacity="0.45" filter="url(#bl3)"/><circle cx="306.4" cy="720.6" r="2.6" fill="#f8f040" opacity="0.45" filter="url(#bl3)"/><circle cx="310.4" cy="634.5" r="1.9" fill="#f8f040" opacity="0.45" filter="url(#bl3)"/><circle cx="317.0" cy="666.3" r="2.5" fill="#f8f040" opacity="0.45" filter="url(#bl3)"/><circle cx="334.6" cy="616.4" r="2.5" fill="#f8f040" opacity="0.45" filter="url(#bl3)"/><circle cx="241.2" cy="691.0" r="2.3" fill="#f8f040" opacity="0.45" filter="url(#bl3)"/><circle cx="307.2" cy="605.2" r="2.2" fill="#f8f040" opacity="0.45" filter="url(#bl3)"/><circle cx="304.7" cy="752.3" r="2.7" fill="#f8f040" opacity="0.45" filter="url(#bl3)"/></g><g stroke="#5a5a5a" stroke-opacity="0.2" stroke-width="1.5" fill="none"><path d="M27 210H546"/><path d="M27 224H546"/><path d="M27 240H546"/><path d="M27 258H546"/><path d="M27 279H546"/><path d="M27 304H546"/><path d="M27 335H546"/><path d="M27 374H546"/><path d="M27 429H546"/><path d="M27 523H546"/><path d="M27 537H546"/><path d="M27 553H546"/><path d="M27 571H546"/><path d="M27 592H546"/><path d="M27 617H546"/><path d="M27 648H546"/><path d="M27 687H546"/><path d="M27 742H546"/><path d="M27 836H546"/><path d="M27 850H546"/><path d="M27 866H546"/><path d="M27 884H546"/><path d="M27 905H546"/><path d="M27 930H546"/><path d="M27 961H546"/><path d="M27 1000H546"/></g><path d="M286 92V1054" stroke="#9a9a9a" stroke-opacity="0.35" stroke-width="1"/></svg>
<div class="t" style="left:0;width:23px;text-align:right;top:205.0px;font-size:10px;color:#9c9c9c;letter-spacing:-0.3px">10 K</div>
<div class="t" style="left:548px;top:205.0px;font-size:10px;color:#9c9c9c;letter-spacing:-0.3px">10 K</div>
<div class="t" style="left:0;width:23px;text-align:right;top:219.3px;font-size:10px;color:#9c9c9c;letter-spacing:-0.3px">9 K</div>
<div class="t" style="left:548px;top:219.3px;font-size:10px;color:#9c9c9c;letter-spacing:-0.3px">9 K</div>
<div class="t" style="left:0;width:23px;text-align:right;top:235.3px;font-size:10px;color:#9c9c9c;letter-spacing:-0.3px">8 K</div>
<div class="t" style="left:548px;top:235.3px;font-size:10px;color:#9c9c9c;letter-spacing:-0.3px">8 K</div>
<div class="t" style="left:0;width:23px;text-align:right;top:253.5px;font-size:10px;color:#9c9c9c;letter-spacing:-0.3px">7 K</div>
<div class="t" style="left:548px;top:253.5px;font-size:10px;color:#9c9c9c;letter-spacing:-0.3px">7 K</div>
<div class="t" style="left:0;width:23px;text-align:right;top:274.4px;font-size:10px;color:#9c9c9c;letter-spacing:-0.3px">6 K</div>
<div class="t" style="left:548px;top:274.4px;font-size:10px;color:#9c9c9c;letter-spacing:-0.3px">6 K</div>
<div class="t" style="left:0;width:23px;text-align:right;top:299.2px;font-size:10px;color:#9c9c9c;letter-spacing:-0.3px">5 K</div>
<div class="t" style="left:548px;top:299.2px;font-size:10px;color:#9c9c9c;letter-spacing:-0.3px">5 K</div>
<div class="t" style="left:0;width:23px;text-align:right;top:329.6px;font-size:10px;color:#9c9c9c;letter-spacing:-0.3px">4 K</div>
<div class="t" style="left:548px;top:329.6px;font-size:10px;color:#9c9c9c;letter-spacing:-0.3px">4 K</div>
<div class="t" style="left:0;width:23px;text-align:right;top:368.7px;font-size:10px;color:#9c9c9c;letter-spacing:-0.3px">3 K</div>
<div class="t" style="left:548px;top:368.7px;font-size:10px;color:#9c9c9c;letter-spacing:-0.3px">3 K</div>
<div class="t" style="left:0;width:23px;text-align:right;top:423.8px;font-size:10px;color:#9c9c9c;letter-spacing:-0.3px">2 K</div>
<div class="t" style="left:548px;top:423.8px;font-size:10px;color:#9c9c9c;letter-spacing:-0.3px">2 K</div>
<div class="t" style="left:0;width:23px;text-align:right;top:518.0px;font-size:10px;color:#9c9c9c;letter-spacing:-0.3px">1 K</div>
<div class="t" style="left:548px;top:518.0px;font-size:10px;color:#9c9c9c;letter-spacing:-0.3px">1 K</div>
<div class="t" style="left:0;width:23px;text-align:right;top:532.3px;font-size:10px;color:#9c9c9c;letter-spacing:-0.3px">900</div>
<div class="t" style="left:548px;top:532.3px;font-size:10px;color:#9c9c9c;letter-spacing:-0.3px">900</div>
<div class="t" style="left:0;width:23px;text-align:right;top:548.3px;font-size:10px;color:#9c9c9c;letter-spacing:-0.3px">800</div>
<div class="t" style="left:548px;top:548.3px;font-size:10px;color:#9c9c9c;letter-spacing:-0.3px">800</div>
<div class="t" style="left:0;width:23px;text-align:right;top:566.5px;font-size:10px;color:#9c9c9c;letter-spacing:-0.3px">700</div>
<div class="t" style="left:548px;top:566.5px;font-size:10px;color:#9c9c9c;letter-spacing:-0.3px">700</div>
<div class="t" style="left:0;width:23px;text-align:right;top:587.4px;font-size:10px;color:#9c9c9c;letter-spacing:-0.3px">600</div>
<div class="t" style="left:548px;top:587.4px;font-size:10px;color:#9c9c9c;letter-spacing:-0.3px">600</div>
<div class="t" style="left:0;width:23px;text-align:right;top:612.2px;font-size:10px;color:#9c9c9c;letter-spacing:-0.3px">500</div>
<div class="t" style="left:548px;top:612.2px;font-size:10px;color:#9c9c9c;letter-spacing:-0.3px">500</div>
<div class="t" style="left:0;width:23px;text-align:right;top:642.6px;font-size:10px;color:#9c9c9c;letter-spacing:-0.3px">400</div>
<div class="t" style="left:548px;top:642.6px;font-size:10px;color:#9c9c9c;letter-spacing:-0.3px">400</div>
<div class="t" style="left:0;width:23px;text-align:right;top:681.7px;font-size:10px;color:#9c9c9c;letter-spacing:-0.3px">300</div>
<div class="t" style="left:548px;top:681.7px;font-size:10px;color:#9c9c9c;letter-spacing:-0.3px">300</div>
<div class="t" style="left:0;width:23px;text-align:right;top:736.8px;font-size:10px;color:#9c9c9c;letter-spacing:-0.3px">200</div>
<div class="t" style="left:548px;top:736.8px;font-size:10px;color:#9c9c9c;letter-spacing:-0.3px">200</div>
<div class="t" style="left:0;width:23px;text-align:right;top:831.0px;font-size:10px;color:#9c9c9c;letter-spacing:-0.3px">100</div>
<div class="t" style="left:548px;top:831.0px;font-size:10px;color:#9c9c9c;letter-spacing:-0.3px">100</div>
<div class="t" style="left:0;width:23px;text-align:right;top:845.3px;font-size:10px;color:#9c9c9c;letter-spacing:-0.3px">90</div>
<div class="t" style="left:548px;top:845.3px;font-size:10px;color:#9c9c9c;letter-spacing:-0.3px">90</div>
<div class="t" style="left:0;width:23px;text-align:right;top:861.3px;font-size:10px;color:#9c9c9c;letter-spacing:-0.3px">80</div>
<div class="t" style="left:548px;top:861.3px;font-size:10px;color:#9c9c9c;letter-spacing:-0.3px">80</div>
<div class="t" style="left:0;width:23px;text-align:right;top:879.5px;font-size:10px;color:#9c9c9c;letter-spacing:-0.3px">70</div>
<div class="t" style="left:548px;top:879.5px;font-size:10px;color:#9c9c9c;letter-spacing:-0.3px">70</div>
<div class="t" style="left:0;width:23px;text-align:right;top:900.4px;font-size:10px;color:#9c9c9c;letter-spacing:-0.3px">60</div>
<div class="t" style="left:548px;top:900.4px;font-size:10px;color:#9c9c9c;letter-spacing:-0.3px">60</div>
<div class="t" style="left:0;width:23px;text-align:right;top:925.2px;font-size:10px;color:#9c9c9c;letter-spacing:-0.3px">50</div>
<div class="t" style="left:548px;top:925.2px;font-size:10px;color:#9c9c9c;letter-spacing:-0.3px">50</div>
<div class="t" style="left:0;width:23px;text-align:right;top:955.6px;font-size:10px;color:#9c9c9c;letter-spacing:-0.3px">40</div>
<div class="t" style="left:548px;top:955.6px;font-size:10px;color:#9c9c9c;letter-spacing:-0.3px">40</div>
<div class="t" style="left:0;width:23px;text-align:right;top:994.7px;font-size:10px;color:#9c9c9c;letter-spacing:-0.3px">30</div>
<div class="t" style="left:548px;top:994.7px;font-size:10px;color:#9c9c9c;letter-spacing:-0.3px">30</div>
<div class="t" style="left:0;width:23px;text-align:right;top:1049.8px;font-size:10px;color:#9c9c9c;letter-spacing:-0.3px">20</div>
<div class="t" style="left:548px;top:1049.8px;font-size:10px;color:#9c9c9c;letter-spacing:-0.3px">20</div>
<svg class="a" style="left:0;top:0" width="1917" height="480" viewBox="0 0 1917 480"><defs><linearGradient id="sat" gradientUnits="userSpaceOnUse" x1="602" y1="0" x2="1911" y2="0"><stop offset="0.0000" stop-color="#ff3018"/><stop offset="0.1864" stop-color="#ff2800"/><stop offset="0.2506" stop-color="#ff7000"/><stop offset="0.2926" stop-color="#ffa800"/><stop offset="0.3560" stop-color="#ffc800"/><stop offset="0.3934" stop-color="#ffe000"/><stop offset="0.4645" stop-color="#c8f000"/><stop offset="0.5164" stop-color="#50e810"/><stop offset="0.5852" stop-color="#10e830"/><stop offset="0.6478" stop-color="#00e890"/><stop offset="0.7013" stop-color="#00e0e0"/><stop offset="0.7502" stop-color="#00c8ff"/><stop offset="0.8083" stop-color="#1a80ff"/><stop offset="0.8762" stop-color="#0040ff"/><stop offset="0.9152" stop-color="#6040ff"/><stop offset="0.9610" stop-color="#c040ff"/><stop offset="1.0000" stop-color="#ff40f0"/></linearGradient><linearGradient id="past" gradientUnits="userSpaceOnUse" x1="602" y1="457" x2="1892.4" y2="302.1"><stop offset="0.0000" stop-color="#f88a8a"/><stop offset="0.1436" stop-color="#f8908a"/><stop offset="0.2353" stop-color="#f8ac88"/><stop offset="0.3193" stop-color="#f8d088"/><stop offset="0.4186" stop-color="#f6f088"/><stop offset="0.4874" stop-color="#c8f088"/><stop offset="0.5561" stop-color="#88f090"/><stop offset="0.6249" stop-color="#78f0b8"/><stop offset="0.7013" stop-color="#78f8f0"/><stop offset="0.7624" stop-color="#78e0ff"/><stop offset="0.8312" stop-color="#80a8f8"/><stop offset="0.9076" stop-color="#9c90f8"/><stop offset="1.0000" stop-color="#f090f8"/></linearGradient><linearGradient id="topg" gradientUnits="userSpaceOnUse" x1="602" y1="457" x2="1892.4" y2="302.1"><stop offset="0.0000" stop-color="#d88898"/><stop offset="0.1513" stop-color="#d48896"/><stop offset="0.2277" stop-color="#d0a090"/><stop offset="0.3040" stop-color="#c8b890"/><stop offset="0.3804" stop-color="#c0d090"/><stop offset="0.4568" stop-color="#90e090"/><stop offset="0.5180" stop-color="#60e898"/><stop offset="0.5867" stop-color="#40eca0"/><stop offset="0.6478" stop-color="#20f0c8"/><stop offset="0.7089" stop-color="#10f0f0"/><stop offset="0.7502" stop-color="#10c8f8"/><stop offset="0.7930" stop-color="#20a8f8"/><stop offset="0.8273" stop-color="#4090f8"/><stop offset="0.8541" stop-color="#6088f8"/><stop offset="0.8969" stop-color="#9090f0"/><stop offset="0.9305" stop-color="#b090f0"/><stop offset="1.0000" stop-color="#e090f0"/></linearGradient><linearGradient id="mk" gradientUnits="userSpaceOnUse" x1="0" y1="235" x2="0" y2="457"><stop offset="0" stop-color="#fff"/><stop offset="1" stop-color="#000"/></linearGradient><mask id="topmask" maskUnits="userSpaceOnUse" x="600" y="60" width="1320" height="400"><rect x="600" y="60" width="1320" height="400" fill="url(#mk)"/></mask><linearGradient id="shade" gradientUnits="userSpaceOnUse" x1="0" y1="130" x2="0" y2="457"><stop offset="0" stop-color="#3a7088" stop-opacity="0.42"/><stop offset="0.5" stop-color="#3a7088" stop-opacity="0.2"/><stop offset="1" stop-color="#3a7088" stop-opacity="0"/></linearGradient><clipPath id="avgc"><path d="M602 327 C607.8 326.3 625.0 325.5 637 323 C649.0 320.5 661.5 317.0 674 312 C686.5 307.0 699.5 298.8 712 293 C724.5 287.2 737.3 284.3 749 277 C760.7 269.7 772.0 257.5 782 249 C792.0 240.5 800.8 231.3 809 226 C817.2 220.7 824.8 219.2 831 217 C837.2 214.8 839.8 213.0 846 213 C852.2 213.0 859.3 214.2 868 217 C876.7 219.8 886.8 225.8 898 230 C909.2 234.2 925.0 240.5 935 242 C945.0 243.5 951.8 240.7 958 239 C964.2 237.3 967.2 234.2 972 232 C976.8 229.8 979.5 229.3 987 226 C994.5 222.7 1007.0 215.3 1017 212 C1027.0 208.7 1037.0 206.7 1047 206 C1057.0 205.3 1067.2 206.5 1077 208 C1086.8 209.5 1096.2 212.8 1106 215 C1115.8 217.2 1127.2 219.7 1136 221 C1144.8 222.3 1150.3 223.3 1159 223 C1167.7 222.7 1178.2 220.7 1188 219 C1197.8 217.3 1208.0 214.0 1218 213 C1228.0 212.0 1238.0 212.3 1248 213 C1258.0 213.7 1269.3 214.8 1278 217 C1286.7 219.2 1284.2 222.1 1300 226 C1315.8 229.9 1350.4 236.9 1372.6 240.5 C1394.8 244.1 1414.8 245.8 1433 247.8 C1451.2 249.8 1470.4 251.9 1481.6 252.6 C1492.8 253.3 1484.8 253.0 1500 252 C1515.2 251.0 1556.4 248.2 1572.6 246.6 C1588.8 245.0 1584.8 242.7 1596.9 242.3 C1609.0 241.9 1632.3 242.7 1645 244.2 C1657.7 245.7 1663.8 249.2 1673 251.4 C1682.2 253.6 1687.3 255.7 1700 257.5 C1712.7 259.3 1728.5 260.4 1749 262 C1769.5 263.6 1796.0 265.5 1823 267 C1850.0 268.5 1896.3 270.3 1911 271 L1911 457 L602 457Z"/></clipPath><clipPath id="curc"><path d="M602 327 C604.8 327.7 613.7 328.8 619 331 C624.3 333.2 629.7 339.7 634 340 C638.3 340.3 641.3 333.8 645 333 C648.7 332.2 652.3 337.5 656 335 C659.7 332.5 663.3 322.3 667 318 C670.7 313.7 671.8 312.8 678 309 C684.2 305.2 695.8 299.0 704 295 C712.2 291.0 720.2 287.7 727 285 C733.8 282.3 739.5 280.3 745 279 C750.5 277.7 756.2 277.2 760 277 C763.8 276.8 762.7 278.7 768 278 C773.3 277.3 786.5 276.7 792 273 C797.5 269.3 798.2 263.8 801 256 C803.8 248.2 806.5 236.5 809 226 C811.5 215.5 812.3 204.7 816 193 C819.7 181.3 826.0 164.2 831 156 C836.0 147.8 841.0 143.5 846 144 C851.0 144.5 856.7 150.8 861 159 C865.3 167.2 869.3 181.8 872 193 C874.7 204.2 875.5 216.7 877 226 C878.5 235.3 878.8 244.0 881 249 C883.2 254.0 887.2 253.0 890 256 C892.8 259.0 894.8 265.2 898 267 C901.2 268.8 904.7 264.8 909 267 C913.3 269.2 919.7 279.3 924 280 C928.3 280.7 931.3 271.8 935 271 C938.7 270.2 942.0 273.7 946 275 C950.0 276.3 955.8 285.8 959 279 C962.2 272.2 961.5 250.8 965 234 C968.5 217.2 976.3 185.5 980 178 C983.7 170.5 984.5 182.2 987 189 C989.5 195.8 991.8 215.5 995 219 C998.2 222.5 1002.7 212.2 1006 210 C1009.3 207.8 1012.5 204.5 1015 206 C1017.5 207.5 1016.7 209.0 1021 219 C1025.3 229.0 1036.0 266.7 1041 266 C1046.0 265.3 1047.5 234.7 1051 215 C1054.5 195.3 1059.2 161.7 1062 148 C1064.8 134.3 1065.5 130.5 1068 133 C1070.5 135.5 1073.3 150.5 1077 163 C1080.7 175.5 1086.3 197.5 1090 208 C1093.7 218.5 1096.0 218.3 1099 226 C1102.0 233.7 1105.5 260.8 1108 254 C1110.5 247.2 1112.3 198.8 1114 185 C1115.7 171.2 1116.5 168.5 1118 171 C1119.5 173.5 1121.5 190.2 1123 200 C1124.5 209.8 1125.5 225.0 1127 230 C1128.5 235.0 1128.7 222.5 1132 230 C1135.3 237.5 1142.5 271.3 1147 275 C1151.5 278.7 1154.7 259.2 1159 252 C1163.3 244.8 1169.3 233.5 1173 232 C1176.7 230.5 1178.2 244.0 1181 243 C1183.8 242.0 1187.2 237.5 1190 226 C1192.8 214.5 1195.2 181.3 1198 174 C1200.8 166.7 1204.0 178.8 1207 182 C1210.0 185.2 1212.7 193.7 1216 193 C1219.3 192.3 1223.8 174.8 1227 178 C1230.2 181.2 1232.2 199.3 1235 212 C1237.8 224.7 1241.2 256.0 1244 254 C1246.8 252.0 1249.5 204.7 1252 200 C1254.5 195.3 1256.5 218.5 1259 226 C1261.5 233.5 1263.8 255.8 1267 245 C1270.2 234.2 1275.0 169.7 1278 161 C1281.0 152.3 1282.5 183.3 1285 193 C1287.5 202.7 1290.5 214.1 1293 219 C1295.5 223.9 1297.4 225.0 1300 222.4 C1302.6 219.8 1306.4 202.8 1308.5 203.6 C1310.6 204.4 1309.9 213.2 1312.7 227 C1315.5 240.8 1321.7 288.6 1325.4 286.5 C1329.1 284.4 1332.0 222.4 1335 214.5 C1338.0 206.6 1341.5 236.5 1343.6 239.3 C1345.7 242.1 1346.0 230.0 1347.8 231.5 C1349.6 233.0 1351.7 252.5 1354.5 248.4 C1357.3 244.3 1362.4 208.7 1364.8 207.2 C1367.2 205.7 1367.5 226.1 1369 239.3 C1370.5 252.5 1370.8 289.1 1373.8 286.5 C1376.8 283.9 1384.0 229.7 1387.2 223.6 C1390.4 217.5 1390.6 248.4 1393.2 250.2 C1395.8 252.0 1399.6 233.3 1402.9 234.5 C1406.2 235.7 1410.2 257.7 1413.2 257.5 C1416.2 257.3 1418.0 232.9 1421 233.3 C1424.0 233.7 1428.6 255.9 1431.4 259.9 C1434.2 263.9 1435.8 266.9 1438 257.5 C1440.2 248.1 1441.4 199.2 1444.7 203.6 C1448.0 208.0 1454.7 280.3 1458 284 C1461.3 287.7 1462.3 236.7 1464.6 226 C1466.9 215.3 1470.1 220.4 1471.9 220 C1473.7 219.6 1473.5 210.3 1475.5 223.6 C1477.5 236.9 1481.0 294.9 1484 299.9 C1487.0 304.9 1491.0 262.1 1493.7 253.8 C1496.4 245.5 1497.3 245.9 1500 250.2 C1502.7 254.4 1506.4 284.6 1509.7 279.3 C1513.0 274.1 1517.0 222.8 1520 218.7 C1523.0 214.6 1525.1 243.3 1527.8 255 C1530.5 266.7 1533.2 288.2 1536.3 289 C1539.4 289.8 1543.8 262.8 1546.6 260 C1549.4 257.2 1550.6 273.4 1553.3 272 C1556.0 270.6 1560.6 255.4 1563 251.4 C1565.4 247.4 1566.4 246.2 1567.8 247.8 C1569.2 249.4 1569.2 268.1 1571.4 261 C1573.6 253.9 1578.0 209.8 1581 205.4 C1584.0 201.0 1587.5 231.9 1589.6 234.5 C1591.7 237.1 1592.0 216.8 1593.8 221.2 C1595.6 225.6 1598.4 259.4 1600.5 261 C1602.6 262.6 1604.4 233.4 1606.5 230.8 C1608.6 228.2 1611.0 245.9 1613.2 245.4 C1615.4 244.9 1618.2 228.8 1619.9 227.8 C1621.6 226.8 1621.3 239.7 1623.5 239.3 C1625.7 238.9 1630.4 226.8 1633.2 225.4 C1636.0 224.0 1638.2 227.5 1640.4 230.8 C1642.6 234.1 1644.3 245.2 1646.5 245.4 C1648.7 245.6 1651.2 238.1 1653.8 232 C1656.4 225.9 1659.6 211.4 1662.2 209 C1664.8 206.6 1667.7 210.2 1669.5 217.5 C1671.3 224.8 1671.8 245.9 1673 252.6 C1674.2 259.3 1675.0 252.4 1676.8 257.5 C1678.6 262.6 1682.0 278.4 1684 283 C1686.0 287.6 1686.2 285.5 1688.9 285.3 C1691.6 285.1 1697.5 280.9 1700 281.7 C1702.5 282.5 1701.7 293.3 1704 290 C1706.3 286.7 1710.8 267.7 1714 262 C1717.2 256.3 1719.7 256.3 1723 256 C1726.3 255.7 1729.7 261.8 1734 260 C1738.3 258.2 1744.7 245.3 1749 245 C1753.3 244.7 1756.0 254.8 1760 258 C1764.0 261.2 1769.8 261.5 1773 264 C1776.2 266.5 1775.5 275.2 1779 273 C1782.5 270.8 1790.0 252.5 1794 251 C1798.0 249.5 1800.5 259.3 1803 264 C1805.5 268.7 1805.7 278.7 1809 279 C1812.3 279.3 1818.2 268.5 1823 266 C1827.8 263.5 1831.7 266.3 1838 264 C1844.3 261.7 1854.7 249.5 1861 252 C1867.3 254.5 1871.2 275.5 1876 279 C1880.8 282.5 1884.2 275.5 1890 273 C1895.8 270.5 1907.5 265.5 1911 264 L1911 457 L602 457Z"/></clipPath></defs><path d="M602 327 C604.8 327.7 613.7 328.8 619 331 C624.3 333.2 629.7 339.7 634 340 C638.3 340.3 641.3 333.8 645 333 C648.7 332.2 652.3 337.5 656 335 C659.7 332.5 663.3 322.3 667 318 C670.7 313.7 671.8 312.8 678 309 C684.2 305.2 695.8 299.0 704 295 C712.2 291.0 720.2 287.7 727 285 C733.8 282.3 739.5 280.3 745 279 C750.5 277.7 756.2 277.2 760 277 C763.8 276.8 762.7 278.7 768 278 C773.3 277.3 786.5 276.7 792 273 C797.5 269.3 798.2 263.8 801 256 C803.8 248.2 806.5 236.5 809 226 C811.5 215.5 812.3 204.7 816 193 C819.7 181.3 826.0 164.2 831 156 C836.0 147.8 841.0 143.5 846 144 C851.0 144.5 856.7 150.8 861 159 C865.3 167.2 869.3 181.8 872 193 C874.7 204.2 875.5 216.7 877 226 C878.5 235.3 878.8 244.0 881 249 C883.2 254.0 887.2 253.0 890 256 C892.8 259.0 894.8 265.2 898 267 C901.2 268.8 904.7 264.8 909 267 C913.3 269.2 919.7 279.3 924 280 C928.3 280.7 931.3 271.8 935 271 C938.7 270.2 942.0 273.7 946 275 C950.0 276.3 955.8 285.8 959 279 C962.2 272.2 961.5 250.8 965 234 C968.5 217.2 976.3 185.5 980 178 C983.7 170.5 984.5 182.2 987 189 C989.5 195.8 991.8 215.5 995 219 C998.2 222.5 1002.7 212.2 1006 210 C1009.3 207.8 1012.5 204.5 1015 206 C1017.5 207.5 1016.7 209.0 1021 219 C1025.3 229.0 1036.0 266.7 1041 266 C1046.0 265.3 1047.5 234.7 1051 215 C1054.5 195.3 1059.2 161.7 1062 148 C1064.8 134.3 1065.5 130.5 1068 133 C1070.5 135.5 1073.3 150.5 1077 163 C1080.7 175.5 1086.3 197.5 1090 208 C1093.7 218.5 1096.0 218.3 1099 226 C1102.0 233.7 1105.5 260.8 1108 254 C1110.5 247.2 1112.3 198.8 1114 185 C1115.7 171.2 1116.5 168.5 1118 171 C1119.5 173.5 1121.5 190.2 1123 200 C1124.5 209.8 1125.5 225.0 1127 230 C1128.5 235.0 1128.7 222.5 1132 230 C1135.3 237.5 1142.5 271.3 1147 275 C1151.5 278.7 1154.7 259.2 1159 252 C1163.3 244.8 1169.3 233.5 1173 232 C1176.7 230.5 1178.2 244.0 1181 243 C1183.8 242.0 1187.2 237.5 1190 226 C1192.8 214.5 1195.2 181.3 1198 174 C1200.8 166.7 1204.0 178.8 1207 182 C1210.0 185.2 1212.7 193.7 1216 193 C1219.3 192.3 1223.8 174.8 1227 178 C1230.2 181.2 1232.2 199.3 1235 212 C1237.8 224.7 1241.2 256.0 1244 254 C1246.8 252.0 1249.5 204.7 1252 200 C1254.5 195.3 1256.5 218.5 1259 226 C1261.5 233.5 1263.8 255.8 1267 245 C1270.2 234.2 1275.0 169.7 1278 161 C1281.0 152.3 1282.5 183.3 1285 193 C1287.5 202.7 1290.5 214.1 1293 219 C1295.5 223.9 1297.4 225.0 1300 222.4 C1302.6 219.8 1306.4 202.8 1308.5 203.6 C1310.6 204.4 1309.9 213.2 1312.7 227 C1315.5 240.8 1321.7 288.6 1325.4 286.5 C1329.1 284.4 1332.0 222.4 1335 214.5 C1338.0 206.6 1341.5 236.5 1343.6 239.3 C1345.7 242.1 1346.0 230.0 1347.8 231.5 C1349.6 233.0 1351.7 252.5 1354.5 248.4 C1357.3 244.3 1362.4 208.7 1364.8 207.2 C1367.2 205.7 1367.5 226.1 1369 239.3 C1370.5 252.5 1370.8 289.1 1373.8 286.5 C1376.8 283.9 1384.0 229.7 1387.2 223.6 C1390.4 217.5 1390.6 248.4 1393.2 250.2 C1395.8 252.0 1399.6 233.3 1402.9 234.5 C1406.2 235.7 1410.2 257.7 1413.2 257.5 C1416.2 257.3 1418.0 232.9 1421 233.3 C1424.0 233.7 1428.6 255.9 1431.4 259.9 C1434.2 263.9 1435.8 266.9 1438 257.5 C1440.2 248.1 1441.4 199.2 1444.7 203.6 C1448.0 208.0 1454.7 280.3 1458 284 C1461.3 287.7 1462.3 236.7 1464.6 226 C1466.9 215.3 1470.1 220.4 1471.9 220 C1473.7 219.6 1473.5 210.3 1475.5 223.6 C1477.5 236.9 1481.0 294.9 1484 299.9 C1487.0 304.9 1491.0 262.1 1493.7 253.8 C1496.4 245.5 1497.3 245.9 1500 250.2 C1502.7 254.4 1506.4 284.6 1509.7 279.3 C1513.0 274.1 1517.0 222.8 1520 218.7 C1523.0 214.6 1525.1 243.3 1527.8 255 C1530.5 266.7 1533.2 288.2 1536.3 289 C1539.4 289.8 1543.8 262.8 1546.6 260 C1549.4 257.2 1550.6 273.4 1553.3 272 C1556.0 270.6 1560.6 255.4 1563 251.4 C1565.4 247.4 1566.4 246.2 1567.8 247.8 C1569.2 249.4 1569.2 268.1 1571.4 261 C1573.6 253.9 1578.0 209.8 1581 205.4 C1584.0 201.0 1587.5 231.9 1589.6 234.5 C1591.7 237.1 1592.0 216.8 1593.8 221.2 C1595.6 225.6 1598.4 259.4 1600.5 261 C1602.6 262.6 1604.4 233.4 1606.5 230.8 C1608.6 228.2 1611.0 245.9 1613.2 245.4 C1615.4 244.9 1618.2 228.8 1619.9 227.8 C1621.6 226.8 1621.3 239.7 1623.5 239.3 C1625.7 238.9 1630.4 226.8 1633.2 225.4 C1636.0 224.0 1638.2 227.5 1640.4 230.8 C1642.6 234.1 1644.3 245.2 1646.5 245.4 C1648.7 245.6 1651.2 238.1 1653.8 232 C1656.4 225.9 1659.6 211.4 1662.2 209 C1664.8 206.6 1667.7 210.2 1669.5 217.5 C1671.3 224.8 1671.8 245.9 1673 252.6 C1674.2 259.3 1675.0 252.4 1676.8 257.5 C1678.6 262.6 1682.0 278.4 1684 283 C1686.0 287.6 1686.2 285.5 1688.9 285.3 C1691.6 285.1 1697.5 280.9 1700 281.7 C1702.5 282.5 1701.7 293.3 1704 290 C1706.3 286.7 1710.8 267.7 1714 262 C1717.2 256.3 1719.7 256.3 1723 256 C1726.3 255.7 1729.7 261.8 1734 260 C1738.3 258.2 1744.7 245.3 1749 245 C1753.3 244.7 1756.0 254.8 1760 258 C1764.0 261.2 1769.8 261.5 1773 264 C1776.2 266.5 1775.5 275.2 1779 273 C1782.5 270.8 1790.0 252.5 1794 251 C1798.0 249.5 1800.5 259.3 1803 264 C1805.5 268.7 1805.7 278.7 1809 279 C1812.3 279.3 1818.2 268.5 1823 266 C1827.8 263.5 1831.7 266.3 1838 264 C1844.3 261.7 1854.7 249.5 1861 252 C1867.3 254.5 1871.2 275.5 1876 279 C1880.8 282.5 1884.2 275.5 1890 273 C1895.8 270.5 1907.5 265.5 1911 264 L1911 457 L602 457Z" fill="url(#sat)"/><path d="M602 327 C607.8 326.3 625.0 325.5 637 323 C649.0 320.5 661.5 317.0 674 312 C686.5 307.0 699.5 298.8 712 293 C724.5 287.2 737.3 284.3 749 277 C760.7 269.7 772.0 257.5 782 249 C792.0 240.5 800.8 231.3 809 226 C817.2 220.7 824.8 219.2 831 217 C837.2 214.8 839.8 213.0 846 213 C852.2 213.0 859.3 214.2 868 217 C876.7 219.8 886.8 225.8 898 230 C909.2 234.2 925.0 240.5 935 242 C945.0 243.5 951.8 240.7 958 239 C964.2 237.3 967.2 234.2 972 232 C976.8 229.8 979.5 229.3 987 226 C994.5 222.7 1007.0 215.3 1017 212 C1027.0 208.7 1037.0 206.7 1047 206 C1057.0 205.3 1067.2 206.5 1077 208 C1086.8 209.5 1096.2 212.8 1106 215 C1115.8 217.2 1127.2 219.7 1136 221 C1144.8 222.3 1150.3 223.3 1159 223 C1167.7 222.7 1178.2 220.7 1188 219 C1197.8 217.3 1208.0 214.0 1218 213 C1228.0 212.0 1238.0 212.3 1248 213 C1258.0 213.7 1269.3 214.8 1278 217 C1286.7 219.2 1284.2 222.1 1300 226 C1315.8 229.9 1350.4 236.9 1372.6 240.5 C1394.8 244.1 1414.8 245.8 1433 247.8 C1451.2 249.8 1470.4 251.9 1481.6 252.6 C1492.8 253.3 1484.8 253.0 1500 252 C1515.2 251.0 1556.4 248.2 1572.6 246.6 C1588.8 245.0 1584.8 242.7 1596.9 242.3 C1609.0 241.9 1632.3 242.7 1645 244.2 C1657.7 245.7 1663.8 249.2 1673 251.4 C1682.2 253.6 1687.3 255.7 1700 257.5 C1712.7 259.3 1728.5 260.4 1749 262 C1769.5 263.6 1796.0 265.5 1823 267 C1850.0 268.5 1896.3 270.3 1911 271 L1911 457 L602 457Z" fill="#3a7a92"/><g clip-path="url(#avgc)"><path d="M602 327 C604.8 327.7 613.7 328.8 619 331 C624.3 333.2 629.7 339.7 634 340 C638.3 340.3 641.3 333.8 645 333 C648.7 332.2 652.3 337.5 656 335 C659.7 332.5 663.3 322.3 667 318 C670.7 313.7 671.8 312.8 678 309 C684.2 305.2 695.8 299.0 704 295 C712.2 291.0 720.2 287.7 727 285 C733.8 282.3 739.5 280.3 745 279 C750.5 277.7 756.2 277.2 760 277 C763.8 276.8 762.7 278.7 768 278 C773.3 277.3 786.5 276.7 792 273 C797.5 269.3 798.2 263.8 801 256 C803.8 248.2 806.5 236.5 809 226 C811.5 215.5 812.3 204.7 816 193 C819.7 181.3 826.0 164.2 831 156 C836.0 147.8 841.0 143.5 846 144 C851.0 144.5 856.7 150.8 861 159 C865.3 167.2 869.3 181.8 872 193 C874.7 204.2 875.5 216.7 877 226 C878.5 235.3 878.8 244.0 881 249 C883.2 254.0 887.2 253.0 890 256 C892.8 259.0 894.8 265.2 898 267 C901.2 268.8 904.7 264.8 909 267 C913.3 269.2 919.7 279.3 924 280 C928.3 280.7 931.3 271.8 935 271 C938.7 270.2 942.0 273.7 946 275 C950.0 276.3 955.8 285.8 959 279 C962.2 272.2 961.5 250.8 965 234 C968.5 217.2 976.3 185.5 980 178 C983.7 170.5 984.5 182.2 987 189 C989.5 195.8 991.8 215.5 995 219 C998.2 222.5 1002.7 212.2 1006 210 C1009.3 207.8 1012.5 204.5 1015 206 C1017.5 207.5 1016.7 209.0 1021 219 C1025.3 229.0 1036.0 266.7 1041 266 C1046.0 265.3 1047.5 234.7 1051 215 C1054.5 195.3 1059.2 161.7 1062 148 C1064.8 134.3 1065.5 130.5 1068 133 C1070.5 135.5 1073.3 150.5 1077 163 C1080.7 175.5 1086.3 197.5 1090 208 C1093.7 218.5 1096.0 218.3 1099 226 C1102.0 233.7 1105.5 260.8 1108 254 C1110.5 247.2 1112.3 198.8 1114 185 C1115.7 171.2 1116.5 168.5 1118 171 C1119.5 173.5 1121.5 190.2 1123 200 C1124.5 209.8 1125.5 225.0 1127 230 C1128.5 235.0 1128.7 222.5 1132 230 C1135.3 237.5 1142.5 271.3 1147 275 C1151.5 278.7 1154.7 259.2 1159 252 C1163.3 244.8 1169.3 233.5 1173 232 C1176.7 230.5 1178.2 244.0 1181 243 C1183.8 242.0 1187.2 237.5 1190 226 C1192.8 214.5 1195.2 181.3 1198 174 C1200.8 166.7 1204.0 178.8 1207 182 C1210.0 185.2 1212.7 193.7 1216 193 C1219.3 192.3 1223.8 174.8 1227 178 C1230.2 181.2 1232.2 199.3 1235 212 C1237.8 224.7 1241.2 256.0 1244 254 C1246.8 252.0 1249.5 204.7 1252 200 C1254.5 195.3 1256.5 218.5 1259 226 C1261.5 233.5 1263.8 255.8 1267 245 C1270.2 234.2 1275.0 169.7 1278 161 C1281.0 152.3 1282.5 183.3 1285 193 C1287.5 202.7 1290.5 214.1 1293 219 C1295.5 223.9 1297.4 225.0 1300 222.4 C1302.6 219.8 1306.4 202.8 1308.5 203.6 C1310.6 204.4 1309.9 213.2 1312.7 227 C1315.5 240.8 1321.7 288.6 1325.4 286.5 C1329.1 284.4 1332.0 222.4 1335 214.5 C1338.0 206.6 1341.5 236.5 1343.6 239.3 C1345.7 242.1 1346.0 230.0 1347.8 231.5 C1349.6 233.0 1351.7 252.5 1354.5 248.4 C1357.3 244.3 1362.4 208.7 1364.8 207.2 C1367.2 205.7 1367.5 226.1 1369 239.3 C1370.5 252.5 1370.8 289.1 1373.8 286.5 C1376.8 283.9 1384.0 229.7 1387.2 223.6 C1390.4 217.5 1390.6 248.4 1393.2 250.2 C1395.8 252.0 1399.6 233.3 1402.9 234.5 C1406.2 235.7 1410.2 257.7 1413.2 257.5 C1416.2 257.3 1418.0 232.9 1421 233.3 C1424.0 233.7 1428.6 255.9 1431.4 259.9 C1434.2 263.9 1435.8 266.9 1438 257.5 C1440.2 248.1 1441.4 199.2 1444.7 203.6 C1448.0 208.0 1454.7 280.3 1458 284 C1461.3 287.7 1462.3 236.7 1464.6 226 C1466.9 215.3 1470.1 220.4 1471.9 220 C1473.7 219.6 1473.5 210.3 1475.5 223.6 C1477.5 236.9 1481.0 294.9 1484 299.9 C1487.0 304.9 1491.0 262.1 1493.7 253.8 C1496.4 245.5 1497.3 245.9 1500 250.2 C1502.7 254.4 1506.4 284.6 1509.7 279.3 C1513.0 274.1 1517.0 222.8 1520 218.7 C1523.0 214.6 1525.1 243.3 1527.8 255 C1530.5 266.7 1533.2 288.2 1536.3 289 C1539.4 289.8 1543.8 262.8 1546.6 260 C1549.4 257.2 1550.6 273.4 1553.3 272 C1556.0 270.6 1560.6 255.4 1563 251.4 C1565.4 247.4 1566.4 246.2 1567.8 247.8 C1569.2 249.4 1569.2 268.1 1571.4 261 C1573.6 253.9 1578.0 209.8 1581 205.4 C1584.0 201.0 1587.5 231.9 1589.6 234.5 C1591.7 237.1 1592.0 216.8 1593.8 221.2 C1595.6 225.6 1598.4 259.4 1600.5 261 C1602.6 262.6 1604.4 233.4 1606.5 230.8 C1608.6 228.2 1611.0 245.9 1613.2 245.4 C1615.4 244.9 1618.2 228.8 1619.9 227.8 C1621.6 226.8 1621.3 239.7 1623.5 239.3 C1625.7 238.9 1630.4 226.8 1633.2 225.4 C1636.0 224.0 1638.2 227.5 1640.4 230.8 C1642.6 234.1 1644.3 245.2 1646.5 245.4 C1648.7 245.6 1651.2 238.1 1653.8 232 C1656.4 225.9 1659.6 211.4 1662.2 209 C1664.8 206.6 1667.7 210.2 1669.5 217.5 C1671.3 224.8 1671.8 245.9 1673 252.6 C1674.2 259.3 1675.0 252.4 1676.8 257.5 C1678.6 262.6 1682.0 278.4 1684 283 C1686.0 287.6 1686.2 285.5 1688.9 285.3 C1691.6 285.1 1697.5 280.9 1700 281.7 C1702.5 282.5 1701.7 293.3 1704 290 C1706.3 286.7 1710.8 267.7 1714 262 C1717.2 256.3 1719.7 256.3 1723 256 C1726.3 255.7 1729.7 261.8 1734 260 C1738.3 258.2 1744.7 245.3 1749 245 C1753.3 244.7 1756.0 254.8 1760 258 C1764.0 261.2 1769.8 261.5 1773 264 C1776.2 266.5 1775.5 275.2 1779 273 C1782.5 270.8 1790.0 252.5 1794 251 C1798.0 249.5 1800.5 259.3 1803 264 C1805.5 268.7 1805.7 278.7 1809 279 C1812.3 279.3 1818.2 268.5 1823 266 C1827.8 263.5 1831.7 266.3 1838 264 C1844.3 261.7 1854.7 249.5 1861 252 C1867.3 254.5 1871.2 275.5 1876 279 C1880.8 282.5 1884.2 275.5 1890 273 C1895.8 270.5 1907.5 265.5 1911 264 L1911 457 L602 457Z" fill="url(#past)"/><path d="M602 327 C604.8 327.7 613.7 328.8 619 331 C624.3 333.2 629.7 339.7 634 340 C638.3 340.3 641.3 333.8 645 333 C648.7 332.2 652.3 337.5 656 335 C659.7 332.5 663.3 322.3 667 318 C670.7 313.7 671.8 312.8 678 309 C684.2 305.2 695.8 299.0 704 295 C712.2 291.0 720.2 287.7 727 285 C733.8 282.3 739.5 280.3 745 279 C750.5 277.7 756.2 277.2 760 277 C763.8 276.8 762.7 278.7 768 278 C773.3 277.3 786.5 276.7 792 273 C797.5 269.3 798.2 263.8 801 256 C803.8 248.2 806.5 236.5 809 226 C811.5 215.5 812.3 204.7 816 193 C819.7 181.3 826.0 164.2 831 156 C836.0 147.8 841.0 143.5 846 144 C851.0 144.5 856.7 150.8 861 159 C865.3 167.2 869.3 181.8 872 193 C874.7 204.2 875.5 216.7 877 226 C878.5 235.3 878.8 244.0 881 249 C883.2 254.0 887.2 253.0 890 256 C892.8 259.0 894.8 265.2 898 267 C901.2 268.8 904.7 264.8 909 267 C913.3 269.2 919.7 279.3 924 280 C928.3 280.7 931.3 271.8 935 271 C938.7 270.2 942.0 273.7 946 275 C950.0 276.3 955.8 285.8 959 279 C962.2 272.2 961.5 250.8 965 234 C968.5 217.2 976.3 185.5 980 178 C983.7 170.5 984.5 182.2 987 189 C989.5 195.8 991.8 215.5 995 219 C998.2 222.5 1002.7 212.2 1006 210 C1009.3 207.8 1012.5 204.5 1015 206 C1017.5 207.5 1016.7 209.0 1021 219 C1025.3 229.0 1036.0 266.7 1041 266 C1046.0 265.3 1047.5 234.7 1051 215 C1054.5 195.3 1059.2 161.7 1062 148 C1064.8 134.3 1065.5 130.5 1068 133 C1070.5 135.5 1073.3 150.5 1077 163 C1080.7 175.5 1086.3 197.5 1090 208 C1093.7 218.5 1096.0 218.3 1099 226 C1102.0 233.7 1105.5 260.8 1108 254 C1110.5 247.2 1112.3 198.8 1114 185 C1115.7 171.2 1116.5 168.5 1118 171 C1119.5 173.5 1121.5 190.2 1123 200 C1124.5 209.8 1125.5 225.0 1127 230 C1128.5 235.0 1128.7 222.5 1132 230 C1135.3 237.5 1142.5 271.3 1147 275 C1151.5 278.7 1154.7 259.2 1159 252 C1163.3 244.8 1169.3 233.5 1173 232 C1176.7 230.5 1178.2 244.0 1181 243 C1183.8 242.0 1187.2 237.5 1190 226 C1192.8 214.5 1195.2 181.3 1198 174 C1200.8 166.7 1204.0 178.8 1207 182 C1210.0 185.2 1212.7 193.7 1216 193 C1219.3 192.3 1223.8 174.8 1227 178 C1230.2 181.2 1232.2 199.3 1235 212 C1237.8 224.7 1241.2 256.0 1244 254 C1246.8 252.0 1249.5 204.7 1252 200 C1254.5 195.3 1256.5 218.5 1259 226 C1261.5 233.5 1263.8 255.8 1267 245 C1270.2 234.2 1275.0 169.7 1278 161 C1281.0 152.3 1282.5 183.3 1285 193 C1287.5 202.7 1290.5 214.1 1293 219 C1295.5 223.9 1297.4 225.0 1300 222.4 C1302.6 219.8 1306.4 202.8 1308.5 203.6 C1310.6 204.4 1309.9 213.2 1312.7 227 C1315.5 240.8 1321.7 288.6 1325.4 286.5 C1329.1 284.4 1332.0 222.4 1335 214.5 C1338.0 206.6 1341.5 236.5 1343.6 239.3 C1345.7 242.1 1346.0 230.0 1347.8 231.5 C1349.6 233.0 1351.7 252.5 1354.5 248.4 C1357.3 244.3 1362.4 208.7 1364.8 207.2 C1367.2 205.7 1367.5 226.1 1369 239.3 C1370.5 252.5 1370.8 289.1 1373.8 286.5 C1376.8 283.9 1384.0 229.7 1387.2 223.6 C1390.4 217.5 1390.6 248.4 1393.2 250.2 C1395.8 252.0 1399.6 233.3 1402.9 234.5 C1406.2 235.7 1410.2 257.7 1413.2 257.5 C1416.2 257.3 1418.0 232.9 1421 233.3 C1424.0 233.7 1428.6 255.9 1431.4 259.9 C1434.2 263.9 1435.8 266.9 1438 257.5 C1440.2 248.1 1441.4 199.2 1444.7 203.6 C1448.0 208.0 1454.7 280.3 1458 284 C1461.3 287.7 1462.3 236.7 1464.6 226 C1466.9 215.3 1470.1 220.4 1471.9 220 C1473.7 219.6 1473.5 210.3 1475.5 223.6 C1477.5 236.9 1481.0 294.9 1484 299.9 C1487.0 304.9 1491.0 262.1 1493.7 253.8 C1496.4 245.5 1497.3 245.9 1500 250.2 C1502.7 254.4 1506.4 284.6 1509.7 279.3 C1513.0 274.1 1517.0 222.8 1520 218.7 C1523.0 214.6 1525.1 243.3 1527.8 255 C1530.5 266.7 1533.2 288.2 1536.3 289 C1539.4 289.8 1543.8 262.8 1546.6 260 C1549.4 257.2 1550.6 273.4 1553.3 272 C1556.0 270.6 1560.6 255.4 1563 251.4 C1565.4 247.4 1566.4 246.2 1567.8 247.8 C1569.2 249.4 1569.2 268.1 1571.4 261 C1573.6 253.9 1578.0 209.8 1581 205.4 C1584.0 201.0 1587.5 231.9 1589.6 234.5 C1591.7 237.1 1592.0 216.8 1593.8 221.2 C1595.6 225.6 1598.4 259.4 1600.5 261 C1602.6 262.6 1604.4 233.4 1606.5 230.8 C1608.6 228.2 1611.0 245.9 1613.2 245.4 C1615.4 244.9 1618.2 228.8 1619.9 227.8 C1621.6 226.8 1621.3 239.7 1623.5 239.3 C1625.7 238.9 1630.4 226.8 1633.2 225.4 C1636.0 224.0 1638.2 227.5 1640.4 230.8 C1642.6 234.1 1644.3 245.2 1646.5 245.4 C1648.7 245.6 1651.2 238.1 1653.8 232 C1656.4 225.9 1659.6 211.4 1662.2 209 C1664.8 206.6 1667.7 210.2 1669.5 217.5 C1671.3 224.8 1671.8 245.9 1673 252.6 C1674.2 259.3 1675.0 252.4 1676.8 257.5 C1678.6 262.6 1682.0 278.4 1684 283 C1686.0 287.6 1686.2 285.5 1688.9 285.3 C1691.6 285.1 1697.5 280.9 1700 281.7 C1702.5 282.5 1701.7 293.3 1704 290 C1706.3 286.7 1710.8 267.7 1714 262 C1717.2 256.3 1719.7 256.3 1723 256 C1726.3 255.7 1729.7 261.8 1734 260 C1738.3 258.2 1744.7 245.3 1749 245 C1753.3 244.7 1756.0 254.8 1760 258 C1764.0 261.2 1769.8 261.5 1773 264 C1776.2 266.5 1775.5 275.2 1779 273 C1782.5 270.8 1790.0 252.5 1794 251 C1798.0 249.5 1800.5 259.3 1803 264 C1805.5 268.7 1805.7 278.7 1809 279 C1812.3 279.3 1818.2 268.5 1823 266 C1827.8 263.5 1831.7 266.3 1838 264 C1844.3 261.7 1854.7 249.5 1861 252 C1867.3 254.5 1871.2 275.5 1876 279 C1880.8 282.5 1884.2 275.5 1890 273 C1895.8 270.5 1907.5 265.5 1911 264 L1911 457 L602 457Z" fill="url(#topg)" mask="url(#topmask)"/></g><g stroke="#ffffff" stroke-opacity="0.2" stroke-width="1.2" fill="none"><path d="M602 96.8H1911"/><path d="M602 144.7H1911"/><path d="M602 192.7H1911"/><path d="M602 240.6H1911"/><path d="M602 288.6H1911"/><path d="M602 336.5H1911"/><path d="M602 384.4H1911"/><path d="M602 432.4H1911"/><path d="M681.5 72V457"/><path d="M737.9 72V457"/><path d="M781.6 72V457"/><path d="M817.3 72V457"/><path d="M847.5 72V457"/><path d="M873.7 72V457"/><path d="M896.8 72V457"/><path d="M917.4 72V457"/><path d="M1053.3 72V457"/><path d="M1132.8 72V457"/><path d="M1189.2 72V457"/><path d="M1232.9 72V457"/><path d="M1268.6 72V457"/><path d="M1298.8 72V457"/><path d="M1325.0 72V457"/><path d="M1348.1 72V457"/><path d="M1368.7 72V457"/><path d="M1504.6 72V457"/><path d="M1584.1 72V457"/><path d="M1640.5 72V457"/><path d="M1684.2 72V457"/><path d="M1719.9 72V457"/><path d="M1750.1 72V457"/><path d="M1776.3 72V457"/><path d="M1799.4 72V457"/><path d="M1820.0 72V457"/></g><g clip-path="url(#curc)"><g stroke="#ffffff" stroke-opacity="0.14" stroke-width="1.2" fill="none"><path d="M602 96.8H1911"/><path d="M602 144.7H1911"/><path d="M602 192.7H1911"/><path d="M602 240.6H1911"/><path d="M602 288.6H1911"/><path d="M602 336.5H1911"/><path d="M602 384.4H1911"/><path d="M602 432.4H1911"/><path d="M681.5 72V457"/><path d="M737.9 72V457"/><path d="M781.6 72V457"/><path d="M817.3 72V457"/><path d="M847.5 72V457"/><path d="M873.7 72V457"/><path d="M896.8 72V457"/><path d="M917.4 72V457"/><path d="M1053.3 72V457"/><path d="M1132.8 72V457"/><path d="M1189.2 72V457"/><path d="M1232.9 72V457"/><path d="M1268.6 72V457"/><path d="M1298.8 72V457"/><path d="M1325.0 72V457"/><path d="M1348.1 72V457"/><path d="M1368.7 72V457"/><path d="M1504.6 72V457"/><path d="M1584.1 72V457"/><path d="M1640.5 72V457"/><path d="M1684.2 72V457"/><path d="M1719.9 72V457"/><path d="M1750.1 72V457"/><path d="M1776.3 72V457"/><path d="M1799.4 72V457"/><path d="M1820.0 72V457"/></g></g><path d="M602.5 72V457" stroke="#3a3a3a" stroke-width="1.5"/><path d="M602 304 C607.8 303.0 625.0 300.5 637 298 C649.0 295.5 662.5 294.2 674 289 C685.5 283.8 695.3 276.2 706 267 C716.7 257.8 727.2 243.3 738 234 C748.8 224.7 763.7 216.7 771 211 C778.3 205.3 777.0 206.7 782 200 C787.0 193.3 794.2 180.3 801 171 C807.8 161.7 816.8 149.7 823 144 C829.2 138.3 833.5 137.8 838 137 C842.5 136.2 845.7 137.5 850 139 C854.3 140.5 859.2 145.7 864 146 C868.8 146.3 874.7 140.7 879 141 C883.3 141.3 886.2 147.8 890 148 C893.8 148.2 897.5 140.7 902 142 C906.5 143.3 912.2 151.2 917 156 C921.8 160.8 926.7 168.8 931 171 C935.3 173.2 939.2 168.5 943 169 C946.8 169.5 949.7 172.5 954 174 C958.3 175.5 964.0 183.2 969 178 C974.0 172.8 977.8 144.5 984 143 C990.2 141.5 1000.8 166.5 1006 169 C1011.2 171.5 1012.0 157.2 1015 158 C1018.0 158.8 1020.0 177.8 1024 174 C1028.0 170.2 1034.8 135.7 1039 135 C1043.2 134.3 1045.2 166.2 1049 170 C1052.8 173.8 1057.3 159.8 1062 158 C1066.7 156.2 1071.8 164.3 1077 159 C1082.2 153.7 1088.7 128.5 1093 126 C1097.3 123.5 1099.5 145.3 1103 144 C1106.5 142.7 1109.2 112.3 1114 118 C1118.8 123.7 1127.0 167.3 1132 178 C1137.0 188.7 1140.5 186.0 1144 182 C1147.5 178.0 1150.3 155.0 1153 154 C1155.7 153.0 1156.7 175.2 1160 176 C1163.3 176.8 1167.7 162.0 1173 159 C1178.3 156.0 1187.0 160.5 1192 158 C1197.0 155.5 1198.7 149.0 1203 144 C1207.3 139.0 1213.7 134.5 1218 128 C1222.3 121.5 1225.8 105.3 1229 105 C1232.2 104.7 1234.8 111.0 1237 126 C1239.2 141.0 1239.2 190.3 1242 195 C1244.8 199.7 1250.5 158.0 1254 154 C1257.5 150.0 1259.0 170.2 1263 171 C1267.0 171.8 1274.3 164.0 1278 159 C1281.7 154.0 1282.2 135.3 1285 141 C1287.8 146.7 1292.5 185.7 1295 193 C1297.5 200.3 1297.7 191.3 1300 184.8 C1302.3 178.3 1305.3 149.5 1309 154 C1312.7 158.5 1318.6 208.3 1322.4 212 C1326.2 215.7 1328.6 175.1 1332 176 C1335.4 176.9 1337.8 218.7 1343 217.5 C1348.2 216.3 1357.9 170.8 1363 169 C1368.1 167.2 1370.9 195.5 1373.8 206.6 C1376.7 217.7 1377.8 237.6 1380.5 235.7 C1383.2 233.8 1387.8 197.4 1390.2 195 C1392.6 192.6 1392.7 221.9 1395 221 C1397.3 220.1 1401.5 197.2 1404 189.7 C1406.5 182.2 1406.2 171.2 1410 176 C1413.8 180.8 1422.4 214.8 1426.5 218.7 C1430.6 222.6 1432.3 200.4 1434.4 199.4 C1436.5 198.4 1437.2 212.9 1439 212.7 C1440.8 212.5 1442.7 194.4 1445.3 198.2 C1447.9 202.0 1451.6 236.1 1454.4 235.7 C1457.2 235.3 1459.1 208.6 1462.2 195.7 C1465.3 182.8 1469.2 152.8 1473 158 C1476.8 163.2 1481.8 218.7 1485.2 226.6 C1488.7 234.5 1491.1 215.7 1493.7 205.4 C1496.3 195.1 1498.3 163.5 1501 165 C1503.7 166.5 1507.2 208.0 1509.7 214.5 C1512.2 221.0 1513.8 213.3 1515.7 204.2 C1517.6 195.1 1518.6 160.2 1521 160 C1523.4 159.8 1528.0 194.8 1530.3 203 C1532.6 211.2 1533.4 209.9 1535 209 C1536.6 208.1 1538.5 198.7 1540 197.6 C1541.5 196.5 1542.7 202.8 1544.2 202.4 C1545.7 202.0 1547.5 194.1 1549 195 C1550.5 195.9 1550.6 207.1 1553.3 207.8 C1556.0 208.5 1562.0 198.7 1565.4 199.4 C1568.8 200.1 1571.2 213.5 1573.8 212 C1576.4 210.5 1578.8 192.2 1581 190.3 C1583.2 188.4 1585.0 197.5 1587.2 200.6 C1589.4 203.7 1592.4 210.3 1594.4 209 C1596.4 207.7 1596.5 192.1 1599.3 192.7 C1602.1 193.3 1607.8 210.8 1611.4 212.7 C1615.0 214.6 1618.4 208.0 1621 204.2 C1623.6 200.4 1625.4 188.3 1627 189.7 C1628.6 191.1 1629.4 212.1 1630.8 212.7 C1632.2 213.3 1633.8 194.3 1635.6 193.3 C1637.4 192.3 1639.2 208.4 1641.6 206.6 C1644.0 204.8 1647.9 182.5 1650 182.4 C1652.1 182.3 1652.4 206.2 1654.4 206 C1656.4 205.8 1660.1 181.5 1662.2 181.2 C1664.3 180.9 1664.7 204.7 1667 204.2 C1669.3 203.7 1673.0 176.0 1676 178 C1679.0 180.0 1682.2 211.2 1685.2 216.3 C1688.2 221.4 1691.2 209.3 1693.7 208.5 C1696.2 207.7 1697.0 210.8 1700 211.5 C1703.0 212.2 1708.2 214.6 1712 213 C1715.8 211.4 1719.3 203.2 1723 202 C1726.7 200.8 1729.7 203.8 1734 206 C1738.3 208.2 1745.3 214.7 1749 215 C1752.7 215.3 1752.3 207.0 1756 208 C1759.7 209.0 1765.7 222.3 1771 221 C1776.3 219.7 1783.0 201.5 1788 200 C1793.0 198.5 1795.2 207.0 1801 212 C1806.8 217.0 1816.8 226.3 1823 230 C1829.2 233.7 1832.3 234.3 1838 234 C1843.7 233.7 1851.3 225.0 1857 228 C1862.7 231.0 1867.3 245.2 1872 252 C1876.7 258.8 1881.3 267.0 1885 269 C1888.7 271.0 1889.7 266.8 1894 264 C1898.3 261.2 1908.2 254.0 1911 252" fill="none" stroke="#6c6c94" stroke-width="1.6"/></svg>
<div class="t" style="left:560px;width:38px;text-align:right;top:90.8px;font-size:10px;color:#a0a0a0;letter-spacing:-0.3px">-24</div>
<div class="t" style="left:560px;width:38px;text-align:right;top:138.7px;font-size:10px;color:#a0a0a0;letter-spacing:-0.3px">-36</div>
<div class="t" style="left:560px;width:38px;text-align:right;top:186.7px;font-size:10px;color:#a0a0a0;letter-spacing:-0.3px">-48</div>
<div class="t" style="left:560px;width:38px;text-align:right;top:234.6px;font-size:10px;color:#a0a0a0;letter-spacing:-0.3px">-60</div>
<div class="t" style="left:560px;width:38px;text-align:right;top:282.6px;font-size:10px;color:#a0a0a0;letter-spacing:-0.3px">-72</div>
<div class="t" style="left:560px;width:38px;text-align:right;top:330.5px;font-size:10px;color:#a0a0a0;letter-spacing:-0.3px">-84</div>
<div class="t" style="left:560px;width:38px;text-align:right;top:378.4px;font-size:10px;color:#a0a0a0;letter-spacing:-0.3px">-96</div>
<div class="t" style="left:560px;width:38px;text-align:right;top:426.4px;font-size:10px;color:#a0a0a0;letter-spacing:-0.3px">-108</div>
<div class="t" style="left:603px;top:460px;font-size:10px;color:#a8a8a8">20</div>
<div class="t" style="left:661.5px;width:40px;text-align:center;top:460px;font-size:10px;color:#a8a8a8">30</div>
<div class="t" style="left:717.9px;width:40px;text-align:center;top:460px;font-size:10px;color:#a8a8a8">40</div>
<div class="t" style="left:761.6px;width:40px;text-align:center;top:460px;font-size:10px;color:#a8a8a8">50</div>
<div class="t" style="left:797.3px;width:40px;text-align:center;top:460px;font-size:10px;color:#a8a8a8">60</div>
<div class="t" style="left:827.5px;width:40px;text-align:center;top:460px;font-size:10px;color:#a8a8a8">70</div>
<div class="t" style="left:853.7px;width:40px;text-align:center;top:460px;font-size:10px;color:#a8a8a8">80</div>
<div class="t" style="left:876.8px;width:40px;text-align:center;top:460px;font-size:10px;color:#a8a8a8">90</div>
<div class="t" style="left:897.4px;width:40px;text-align:center;top:460px;font-size:10px;color:#a8a8a8">100</div>
<div class="t" style="left:1033.3px;width:40px;text-align:center;top:460px;font-size:10px;color:#a8a8a8">200</div>
<div class="t" style="left:1112.8px;width:40px;text-align:center;top:460px;font-size:10px;color:#a8a8a8">300</div>
<div class="t" style="left:1169.2px;width:40px;text-align:center;top:460px;font-size:10px;color:#a8a8a8">400</div>
<div class="t" style="left:1212.9px;width:40px;text-align:center;top:460px;font-size:10px;color:#a8a8a8">500</div>
<div class="t" style="left:1248.6px;width:40px;text-align:center;top:460px;font-size:10px;color:#a8a8a8">600</div>
<div class="t" style="left:1278.8px;width:40px;text-align:center;top:460px;font-size:10px;color:#a8a8a8">700</div>
<div class="t" style="left:1305.0px;width:40px;text-align:center;top:460px;font-size:10px;color:#a8a8a8">800</div>
<div class="t" style="left:1328.1px;width:40px;text-align:center;top:460px;font-size:10px;color:#a8a8a8">900</div>
<div class="t" style="left:1348.7px;width:40px;text-align:center;top:460px;font-size:10px;color:#a8a8a8">1k</div>
<div class="t" style="left:1484.6px;width:40px;text-align:center;top:460px;font-size:10px;color:#a8a8a8">2k</div>
<div class="t" style="left:1564.1px;width:40px;text-align:center;top:460px;font-size:10px;color:#a8a8a8">3k</div>
<div class="t" style="left:1620.5px;width:40px;text-align:center;top:460px;font-size:10px;color:#a8a8a8">4k</div>
<div class="t" style="left:1664.2px;width:40px;text-align:center;top:460px;font-size:10px;color:#a8a8a8">5k</div>
<div class="t" style="left:1699.9px;width:40px;text-align:center;top:460px;font-size:10px;color:#a8a8a8">6k</div>
<div class="t" style="left:1730.1px;width:40px;text-align:center;top:460px;font-size:10px;color:#a8a8a8">7k</div>
<div class="t" style="left:1756.3px;width:40px;text-align:center;top:460px;font-size:10px;color:#a8a8a8">8k</div>
<div class="t" style="left:1779.4px;width:40px;text-align:center;top:460px;font-size:10px;color:#a8a8a8">9k</div>
<div class="t" style="left:1800.0px;width:40px;text-align:center;top:460px;font-size:10px;color:#a8a8a8">10k</div>
<div class="t" style="left:728px;width:100px;text-align:center;top:503px;font-size:12px;color:#8c8c8c">MONO</div>
<div class="t" style="left:579px;top:694px;font-size:11px;color:#8c8c8c">+S</div>
<div class="t" style="left:940px;width:40px;text-align:right;top:694px;font-size:11px;color:#8c8c8c">-S</div>
<div class="t" style="left:580px;top:886px;font-size:11px;color:#8c8c8c">-1</div>
<div class="t" style="left:758px;width:40px;text-align:center;top:886px;font-size:11px;color:#8c8c8c">0</div>
<svg class="a" style="left:575px;top:497px" width="406" height="406" viewBox="575 497 406 406"><defs><filter id="gb1" x="-50%" y="-20%" width="200%" height="140%"><feGaussianBlur stdDeviation="5"/></filter><filter id="gb2" x="-50%" y="-20%" width="200%" height="140%"><feGaussianBlur stdDeviation="2.5"/></filter><filter id="gb3" x="-50%" y="-20%" width="200%" height="140%"><feGaussianBlur stdDeviation="1.2"/></filter></defs><path d="M608 701.5H950" stroke="#3c3c3c" stroke-width="1.5"/><defs><filter id="gdisp" x="-30%" y="-5%" width="160%" height="110%"><feTurbulence type="fractalNoise" baseFrequency="0.07 0.07" numOctaves="2" seed="9" result="t"/><feDisplacementMap in="SourceGraphic" in2="t" scale="14" xChannelSelector="R" yChannelSelector="G"/></filter></defs><g filter="url(#gdisp)"><path d="M767.5 515 L766.5 517 L765.0 519 L762.5 521 L759.3 523 L756.2 525 L755.5 527 L756.0 529 L756.8 531 L757.0 533 L756.1 535 L754.4 537 L752.8 539 L752.2 541 L752.5 543 L753.2 545 L753.6 547 L752.9 549 L751.2 551 L749.7 553 L749.1 555 L749.7 557 L750.8 559 L751.5 561 L751.3 563 L750.5 565 L749.9 567 L750.1 569 L751.1 571 L752.0 573 L751.9 575 L750.5 577 L748.4 579 L746.8 581 L746.4 583 L747.6 585 L749.5 587 L750.9 589 L751.4 591 L750.9 593 L750.3 595 L750.2 597 L750.7 599 L751.1 601 L750.8 603 L749.5 605 L748.1 607 L747.5 609 L748.5 611 L750.9 613 L753.7 615 L755.5 617 L755.7 619 L754.6 621 L753.1 623 L752.1 625 L751.8 627 L751.9 629 L751.6 631 L750.9 633 L750.2 635 L750.4 637 L751.8 639 L754.1 641 L756.1 643 L756.5 645 L755.1 647 L752.4 649 L749.8 651 L748.3 653 L748.2 655 L748.8 657 L749.5 659 L749.6 661 L749.5 663 L749.7 665 L750.6 667 L751.7 669 L752.1 671 L751.1 673 L748.6 675 L745.6 677 L743.5 679 L743.1 681 L744.4 683 L746.5 685 L748.1 687 L748.6 689 L748.4 691 L748.0 693 L748.1 695 L748.5 697 L748.5 699 L747.6 701 L745.8 703 L744.1 705 L743.5 707 L744.7 709 L747.2 711 L749.7 713 L751.2 715 L751.1 717 L750.1 719 L749.0 721 L748.7 723 L749.1 725 L749.7 727 L749.7 729 L749.1 731 L748.6 733 L748.9 735 L750.5 737 L752.7 739 L754.6 741 L755.1 743 L754.1 745 L752.4 747 L751.2 749 L751.2 751 L752.1 753 L753.1 755 L753.5 757 L753.0 759 L752.3 761 L752.2 763 L753.1 765 L754.6 767 L755.7 769 L755.7 771 L754.6 773 L753.1 775 L752.3 777 L752.7 779 L753.9 781 L755.0 783 L755.0 785 L754.1 787 L752.9 789 L752.4 791 L753.1 793 L754.6 795 L755.8 797 L756.1 799 L755.2 801 L753.9 803 L753.2 805 L753.5 807 L754.3 809 L755.0 811 L754.7 813 L753.7 815 L752.8 817 L752.8 819 L754.2 821 L756.3 823 L757.9 825 L758.2 827 L757.1 829 L755.4 831 L754.3 833 L754.2 835 L755.0 837 L755.8 839 L756.1 841 L755.8 843 L755.6 845 L756.3 847 L757.9 849 L759.6 851 L760.4 853 L759.6 855 L757.4 857 L755.1 859 L754.0 861 L754.6 863 L756.5 865 L758.7 867 L760.2 869 L760.9 871 L761.4 873 L762.2 875 L763.4 877 L764.5 879 L764.8 881 L763.8 883 L762.0 885 L761.4 887 L762.3 889 L765.0 891 L768.9 893 L772.6 895 L775.1 897 L787.4 897 L788.7 895 L790.4 893 L791.9 891 L792.7 889 L792.8 887 L792.6 885 L792.4 883 L793.3 881 L795.3 879 L797.9 877 L800.1 875 L801.3 873 L801.4 871 L800.9 869 L800.6 867 L801.0 865 L802.0 863 L803.0 861 L803.2 859 L802.2 857 L801.0 855 L800.2 853 L800.3 851 L801.3 849 L802.6 847 L803.6 845 L803.7 843 L803.0 841 L802.4 839 L802.3 837 L803.3 835 L804.8 833 L806.3 831 L807.0 829 L806.7 827 L805.9 825 L805.5 823 L805.8 821 L806.9 819 L808.2 817 L809.2 815 L809.6 813 L809.4 811 L809.4 809 L810.1 807 L811.4 805 L812.9 803 L813.8 801 L813.4 799 L811.9 797 L809.9 795 L808.4 793 L808.0 791 L808.5 789 L809.5 787 L810.3 785 L810.4 783 L810.1 781 L809.8 779 L810.0 777 L810.5 775 L810.9 773 L810.4 771 L808.8 769 L806.3 767 L803.9 765 L802.5 763 L802.4 761 L803.6 759 L805.1 757 L806.1 755 L806.4 753 L806.2 751 L805.8 749 L805.9 747 L806.3 745 L806.6 743 L806.1 741 L804.9 739 L803.3 737 L802.0 735 L802.0 733 L803.3 731 L805.4 729 L807.4 727 L808.6 725 L808.7 723 L808.2 721 L807.8 719 L807.8 717 L808.3 715 L808.8 713 L808.7 711 L807.8 709 L806.6 707 L805.8 705 L805.8 703 L806.8 701 L808.3 699 L809.4 697 L809.5 695 L808.7 693 L807.5 691 L806.8 689 L806.9 687 L807.7 685 L808.3 683 L808.3 681 L807.4 679 L806.0 677 L804.9 675 L804.6 673 L805.1 671 L805.9 669 L806.4 667 L806.2 665 L805.5 663 L805.0 661 L805.2 659 L806.4 657 L808.0 655 L809.2 653 L809.4 651 L808.5 649 L807.0 647 L806.0 645 L805.9 643 L806.7 641 L808.1 639 L809.4 637 L810.1 635 L810.5 633 L811.0 631 L812.2 629 L813.8 627 L815.5 625 L816.2 623 L815.8 621 L814.2 619 L812.3 617 L811.1 615 L811.2 613 L812.3 611 L813.9 609 L815.2 607 L815.8 605 L815.8 603 L815.8 601 L816.3 599 L817.3 597 L817.9 595 L817.7 593 L816.5 591 L814.6 589 L812.9 587 L812.2 585 L813.0 583 L814.8 581 L816.8 579 L818.2 577 L818.7 575 L818.6 573 L818.6 571 L818.6 569 L818.7 567 L818.8 565 L818.3 563 L817.0 561 L815.5 559 L814.3 557 L814.3 555 L815.4 553 L817.2 551 L818.7 549 L819.3 547 L818.9 545 L816.7 543 L814.8 541 L813.7 539 L813.1 537 L812.5 535 L811.3 533 L809.3 531 L806.8 529 L804.5 527 L802.9 525 L800.5 523 L798.3 521 L795.6 519 L792.1 517 L787.8 515Z" fill="#3a0a00" filter="url(#gb2)"/><path d="M768.4 515 L767.0 517 L766.2 519 L765.2 521 L763.5 523 L761.0 525 L759.1 527 L757.3 529 L756.1 531 L755.7 533 L755.8 535 L756.0 537 L755.9 539 L755.2 541 L754.1 543 L753.1 545 L752.8 547 L753.0 549 L753.5 551 L754.0 553 L754.2 555 L754.0 557 L753.7 559 L753.6 561 L753.9 563 L754.6 565 L755.2 567 L755.5 569 L755.2 571 L754.4 573 L753.5 575 L753.2 577 L753.5 579 L754.4 581 L755.3 583 L755.5 585 L754.8 587 L753.4 589 L751.9 591 L751.1 593 L751.3 595 L752.4 597 L753.9 599 L754.9 601 L754.8 603 L753.7 605 L752.0 607 L750.8 609 L750.9 611 L752.2 613 L754.3 615 L756.3 617 L757.1 619 L756.6 621 L755.0 623 L753.5 625 L752.9 627 L753.6 629 L755.5 631 L757.7 633 L759.1 635 L759.3 637 L758.1 639 L756.4 641 L755.2 643 L754.9 645 L755.9 647 L757.5 649 L759.0 651 L759.6 653 L759.0 655 L757.5 657 L755.9 659 L754.8 661 L754.6 663 L755.2 665 L756.1 667 L756.7 669 L756.6 671 L755.9 673 L754.8 675 L753.7 677 L753.1 679 L753.0 681 L753.5 683 L754.0 685 L754.6 687 L754.8 689 L754.9 691 L754.7 693 L754.6 695 L754.6 697 L754.7 699 L755.0 701 L755.5 703 L756.2 705 L756.9 707 L757.6 709 L757.9 711 L757.9 713 L757.7 715 L757.3 717 L757.2 719 L757.4 721 L758.0 723 L758.7 725 L759.2 727 L759.2 729 L758.6 731 L757.6 733 L756.5 735 L755.8 737 L755.5 739 L755.6 741 L755.8 743 L755.6 745 L754.9 747 L753.8 749 L752.4 751 L751.1 753 L750.3 755 L749.9 757 L749.8 759 L749.8 761 L749.8 763 L749.4 765 L748.9 767 L748.5 769 L748.3 771 L748.3 773 L748.6 775 L748.9 777 L749.4 779 L750.0 781 L750.7 783 L751.5 785 L752.4 787 L753.2 789 L753.7 791 L754.1 793 L754.5 795 L755.2 797 L756.3 799 L757.9 801 L759.5 803 L760.9 805 L761.5 807 L761.3 809 L760.7 811 L760.3 813 L760.6 815 L761.8 817 L763.5 819 L765.0 821 L765.6 823 L765.1 825 L763.6 827 L761.9 829 L760.8 831 L761.0 833 L762.3 835 L763.9 837 L764.9 839 L764.6 841 L763.0 843 L760.7 845 L758.8 847 L758.1 849 L758.9 851 L760.7 853 L762.5 855 L763.3 857 L762.6 859 L761.1 861 L759.7 863 L759.1 865 L760.0 867 L762.2 869 L764.8 871 L767.0 873 L768.0 875 L767.8 877 L766.9 879 L766.4 881 L766.9 883 L768.6 885 L771.5 887 L774.3 889 L776.3 891 L777.3 893 L777.5 895 L777.5 897 L779.7 897 L783.6 895 L786.4 893 L787.2 891 L786.4 889 L785.4 887 L785.4 885 L786.5 883 L788.5 881 L790.3 879 L791.7 877 L792.9 875 L794.3 873 L795.8 871 L796.7 869 L796.6 867 L795.5 865 L794.6 863 L795.1 861 L797.0 859 L799.7 857 L801.9 855 L802.3 853 L801.1 851 L799.3 849 L798.2 847 L798.4 845 L799.4 843 L800.5 841 L801.1 839 L801.7 837 L802.5 835 L803.8 833 L804.9 831 L805.0 829 L804.0 827 L802.6 825 L802.2 823 L803.5 821 L806.0 819 L808.4 817 L809.5 815 L808.9 813 L807.4 811 L806.4 809 L806.4 807 L807.2 805 L807.9 803 L808.0 801 L807.9 799 L808.1 797 L808.8 795 L809.7 793 L809.8 791 L808.6 789 L806.6 787 L804.9 785 L804.7 783 L805.8 781 L807.3 779 L807.8 777 L806.9 775 L805.0 773 L803.3 771 L802.6 769 L802.7 767 L802.8 765 L802.2 763 L801.1 761 L800.3 759 L800.4 757 L801.1 755 L801.5 753 L800.8 751 L799.2 749 L797.5 747 L796.9 745 L797.7 743 L799.1 741 L800.1 739 L799.9 737 L798.9 735 L798.1 733 L798.2 731 L799.3 729 L800.3 727 L800.6 725 L800.1 723 L799.6 721 L800.0 719 L801.3 717 L802.8 715 L803.5 713 L803.0 711 L802.1 709 L801.8 707 L802.5 705 L803.9 703 L804.9 701 L804.9 699 L804.2 697 L803.5 695 L803.7 693 L804.9 691 L806.1 689 L806.4 687 L805.5 685 L804.2 683 L803.4 681 L803.8 679 L804.7 677 L805.3 675 L805.0 673 L803.9 671 L803.0 669 L803.0 667 L803.6 665 L804.0 663 L803.4 661 L802.1 659 L800.9 657 L800.8 655 L801.9 653 L803.4 651 L804.1 649 L803.5 647 L802.0 645 L800.9 643 L800.8 641 L801.9 639 L803.2 637 L803.9 635 L803.9 633 L803.9 631 L804.4 629 L805.6 627 L806.5 625 L806.6 623 L805.7 621 L804.8 619 L805.0 617 L806.8 615 L809.2 613 L811.0 611 L811.3 609 L810.2 607 L808.8 605 L808.3 603 L808.9 601 L810.3 599 L811.4 597 L811.9 595 L812.2 593 L812.9 591 L814.0 589 L814.9 587 L814.7 585 L813.5 583 L812.0 581 L811.6 579 L812.9 577 L815.4 575 L817.7 573 L818.4 571 L817.2 569 L814.9 567 L813.2 565 L812.6 563 L812.9 561 L813.3 559 L813.4 557 L813.3 555 L813.5 553 L814.3 551 L814.8 549 L814.4 547 L812.6 545 L809.2 543 L806.6 541 L805.8 539 L806.7 537 L808.0 535 L807.9 533 L806.1 531 L803.0 529 L799.9 527 L797.8 525 L795.1 523 L792.8 521 L790.3 519 L787.6 517 L785.3 515Z" fill="#7a1e00" filter="url(#gb3)"/><path d="M780.5 555 L775.5 557 L774.1 559 L773.5 561 L773.4 563 L773.3 565 L772.9 567 L772.2 569 L770.9 571 L769.2 573 L767.5 575 L766.0 577 L765.0 579 L764.5 581 L764.5 583 L764.8 585 L765.2 587 L765.4 589 L765.3 591 L764.6 593 L763.5 595 L762.7 597 L761.8 599 L761.3 601 L761.2 603 L761.6 605 L762.4 607 L763.5 609 L764.6 611 L765.3 613 L765.6 615 L765.3 617 L764.6 619 L763.5 621 L762.5 623 L761.7 625 L761.4 627 L761.6 629 L762.2 631 L762.9 633 L763.6 635 L763.8 637 L763.5 639 L762.7 641 L761.5 643 L760.2 645 L759.1 647 L758.3 649 L758.1 651 L758.3 653 L758.7 655 L759.3 657 L759.6 659 L759.6 661 L759.1 663 L758.2 665 L757.0 667 L755.9 669 L754.9 671 L754.3 673 L754.2 675 L754.4 677 L754.9 679 L755.4 681 L755.9 683 L756.1 685 L756.0 687 L755.4 689 L754.7 691 L753.9 693 L753.2 695 L752.8 697 L752.9 699 L753.4 701 L754.3 703 L755.3 705 L756.3 707 L756.9 709 L756.9 711 L756.5 713 L755.7 715 L754.9 717 L754.3 719 L754.3 721 L754.9 723 L756.1 725 L757.6 727 L759.0 729 L760.1 731 L760.6 733 L760.5 735 L759.8 737 L759.0 739 L758.4 741 L758.3 743 L758.8 745 L759.8 747 L761.1 749 L762.5 751 L763.5 753 L764.0 755 L764.0 757 L763.5 759 L762.8 761 L762.3 763 L762.1 765 L762.2 767 L762.7 769 L763.4 771 L764.2 773 L765.0 775 L765.5 777 L765.8 779 L765.7 781 L765.4 783 L764.8 785 L764.2 787 L763.5 789 L763.1 791 L762.8 793 L763.0 795 L763.4 797 L764.1 799 L764.8 801 L765.2 803 L765.2 805 L764.6 807 L763.6 809 L762.3 811 L761.1 813 L760.3 815 L760.1 817 L760.7 819 L761.7 821 L762.9 823 L763.8 825 L764.2 827 L763.7 829 L762.6 831 L761.3 833 L760.0 835 L759.3 837 L759.4 839 L760.2 841 L761.5 843 L762.9 845 L763.9 847 L764.4 849 L764.1 851 L763.4 853 L762.9 855 L762.5 857 L762.5 859 L763.2 861 L764.6 863 L766.2 865 L767.8 867 L769.2 869 L770.3 871 L771.1 873 L771.5 875 L771.8 877 L772.1 879 L772.3 881 L772.7 883 L773.2 885 L774.0 887 L775.1 889 L776.3 891 L778.1 893 L779.0 893 L779.0 891 L779.0 889 L779.0 887 L779.0 885 L779.2 883 L780.3 881 L781.7 879 L783.4 877 L785.2 875 L787.0 873 L788.8 871 L790.4 869 L791.6 867 L792.4 865 L793.1 863 L793.8 861 L794.7 859 L795.7 857 L797.1 855 L798.4 853 L799.2 851 L799.6 849 L799.7 847 L799.9 845 L800.4 843 L801.3 841 L802.1 839 L802.6 837 L802.4 835 L801.3 833 L799.8 831 L798.3 829 L797.6 827 L797.7 825 L798.6 823 L799.5 821 L799.9 819 L799.5 817 L798.5 815 L797.6 813 L797.2 811 L797.6 809 L798.5 807 L799.3 805 L799.3 803 L798.2 801 L796.5 799 L794.9 797 L794.2 795 L794.9 793 L796.6 791 L798.7 789 L800.0 787 L800.3 785 L799.5 783 L798.6 781 L798.2 779 L798.8 777 L800.2 775 L801.6 773 L802.0 771 L801.1 769 L799.2 767 L797.2 765 L796.1 763 L796.5 761 L798.3 759 L800.4 757 L801.8 755 L801.7 753 L800.2 751 L798.3 749 L796.9 747 L796.8 745 L797.8 743 L799.2 741 L799.8 739 L799.0 737 L797.0 735 L794.8 733 L793.6 731 L794.2 729 L796.4 727 L799.2 725 L801.4 723 L802.0 721 L800.9 719 L799.1 717 L797.8 715 L797.9 713 L799.4 711 L801.5 709 L802.9 707 L802.9 705 L801.5 703 L799.5 701 L798.3 699 L798.8 697 L801.0 695 L803.8 693 L806.0 691 L806.4 689 L804.9 687 L802.3 685 L800.0 683 L798.9 681 L799.4 679 L800.7 677 L801.6 675 L801.2 673 L799.3 671 L796.6 669 L794.6 667 L794.1 665 L795.3 663 L797.5 661 L799.3 659 L799.6 657 L798.1 655 L795.4 653 L793.0 651 L791.9 649 L792.6 647 L794.4 645 L796.3 643 L797.1 641 L796.6 639 L795.4 637 L794.5 635 L795.0 633 L797.1 631 L800.2 629 L803.1 627 L804.5 625 L804.2 623 L802.6 621 L800.9 619 L800.3 617 L801.2 615 L803.3 613 L805.5 611 L806.8 609 L806.7 607 L805.7 605 L804.5 603 L804.3 601 L805.5 599 L807.6 597 L809.6 595 L809.8 593 L808.5 591 L805.9 589 L803.0 587 L801.0 585 L800.4 583 L800.9 581 L801.8 579 L802.2 577 L801.5 575 L799.9 573 L798.2 571 L796.7 569 L796.0 567 L795.9 565 L795.9 563 L795.0 561 L792.7 559 L789.1 557 L785.4 555Z" fill="#c03806" filter="url(#gb3)"/><path d="M785.2 575 L780.3 577 L778.5 579 L777.8 581 L777.1 583 L775.6 585 L773.3 587 L770.6 589 L768.4 591 L767.4 593 L767.6 595 L768.3 597 L768.5 599 L767.5 601 L765.2 603 L762.5 605 L760.4 607 L759.8 609 L760.7 611 L762.3 613 L763.6 615 L764.0 617 L763.3 619 L762.2 621 L761.6 623 L762.1 625 L763.7 627 L765.5 629 L766.5 631 L766.2 633 L764.9 635 L763.6 637 L763.2 639 L764.3 641 L766.5 643 L768.8 645 L770.0 647 L769.7 649 L768.1 651 L766.2 653 L765.0 655 L765.1 657 L766.1 659 L767.1 661 L767.4 663 L766.6 665 L765.1 667 L763.7 669 L763.2 671 L763.6 673 L764.5 675 L765.1 677 L764.6 679 L763.1 681 L761.1 683 L759.4 685 L758.9 687 L759.6 689 L761.0 691 L762.2 693 L762.7 695 L762.4 697 L761.6 699 L761.0 701 L761.0 703 L761.6 705 L762.4 707 L763.0 709 L763.2 711 L763.0 713 L762.9 715 L763.3 717 L764.4 719 L765.8 721 L767.1 723 L767.8 725 L767.9 727 L767.6 729 L767.1 731 L766.9 733 L767.1 735 L767.4 737 L767.7 739 L767.8 741 L767.8 743 L767.9 745 L768.1 747 L768.3 749 L768.3 751 L767.8 753 L766.9 755 L765.7 757 L764.6 759 L764.1 761 L764.0 763 L764.3 765 L764.4 767 L764.2 769 L763.7 771 L763.2 773 L763.1 775 L763.3 777 L763.8 779 L764.0 781 L763.6 783 L762.7 785 L761.6 787 L761.0 789 L761.4 791 L762.7 793 L764.5 795 L765.9 797 L766.4 799 L765.9 801 L764.9 803 L764.3 805 L764.6 807 L765.6 809 L767.0 811 L767.8 813 L767.8 815 L767.0 817 L766.2 819 L766.1 821 L767.2 823 L769.0 825 L770.6 827 L771.2 829 L770.3 831 L768.4 833 L766.6 835 L765.7 837 L766.2 839 L767.9 841 L769.6 843 L770.3 845 L769.8 847 L768.6 849 L767.5 851 L767.4 853 L768.5 855 L770.3 857 L771.7 859 L772.2 861 L771.4 863 L770.2 865 L769.5 867 L770.2 869 L772.4 871 L775.2 873 L777.5 875 L778.4 877 L777.8 879 L776.5 881 L775.6 883 L775.9 885 L777.9 887 L780.8 887 L781.2 885 L781.3 883 L781.2 881 L781.3 879 L782.0 877 L783.2 875 L784.7 873 L786.0 871 L786.8 869 L787.1 867 L787.1 865 L787.1 863 L787.6 861 L788.4 859 L789.4 857 L790.7 855 L792.0 853 L792.9 851 L793.5 849 L793.4 847 L792.9 845 L792.5 843 L792.5 841 L793.1 839 L794.3 837 L795.7 835 L796.8 833 L797.2 831 L796.9 829 L796.3 827 L795.8 825 L795.9 823 L796.7 821 L797.6 819 L798.3 817 L798.4 815 L798.0 813 L797.5 811 L797.1 809 L797.1 807 L797.4 805 L797.4 803 L796.9 801 L796.0 799 L795.0 797 L794.5 795 L794.8 793 L795.6 791 L796.3 789 L796.1 787 L794.8 785 L792.7 783 L790.8 781 L790.0 779 L790.6 777 L792.1 775 L793.5 773 L793.7 771 L792.5 769 L790.4 767 L788.5 765 L787.7 763 L788.3 761 L789.8 759 L791.2 757 L791.6 755 L790.9 753 L789.7 751 L788.9 749 L789.0 747 L790.0 745 L791.2 743 L791.8 741 L791.5 739 L790.7 737 L790.2 735 L790.6 733 L792.1 731 L793.8 729 L794.9 727 L794.8 725 L793.6 723 L792.2 721 L791.5 719 L792.2 717 L794.2 715 L796.3 713 L797.6 711 L797.4 709 L795.9 707 L794.1 705 L793.1 703 L793.4 701 L794.7 699 L796.4 697 L797.4 695 L797.3 693 L796.4 691 L795.4 689 L794.8 687 L795.0 685 L795.5 683 L796.0 681 L796.0 679 L795.6 677 L795.1 675 L795.0 673 L795.4 671 L796.0 669 L796.4 667 L796.3 665 L795.6 663 L794.6 661 L794.0 659 L794.2 657 L795.0 655 L796.1 653 L797.0 651 L797.2 649 L796.7 647 L795.8 645 L795.0 643 L794.7 641 L795.0 639 L795.8 637 L796.8 635 L797.6 633 L798.0 631 L797.9 629 L797.4 627 L796.7 625 L796.1 623 L795.9 621 L796.2 619 L796.8 617 L797.5 615 L797.6 613 L797.1 611 L796.1 609 L794.8 607 L793.6 605 L792.8 603 L792.3 601 L792.2 599 L792.1 597 L791.7 595 L791.0 593 L790.2 591 L789.5 589 L789.1 587 L788.7 585 L787.9 583 L786.6 581 L784.8 579 L784.8 577 L785.2 575Z" fill="#e86010" filter="url(#gb3)"/><path d="M780.6 600 L777.5 602 L776.5 604 L776.2 606 L776.3 608 L776.4 610 L776.0 612 L774.9 614 L773.4 616 L771.9 618 L770.9 620 L770.4 622 L770.2 624 L770.0 626 L769.6 628 L769.0 630 L768.4 632 L768.2 634 L768.3 636 L768.5 638 L768.3 640 L767.9 642 L767.0 644 L766.0 646 L765.3 648 L765.0 650 L765.2 652 L765.5 654 L765.5 656 L765.2 658 L764.8 660 L764.7 662 L765.1 664 L765.7 666 L766.1 668 L766.1 670 L765.6 672 L764.8 674 L764.2 676 L764.1 678 L764.5 680 L765.1 682 L765.4 684 L765.4 686 L765.1 688 L765.1 690 L765.4 692 L766.2 694 L767.0 696 L767.5 698 L767.5 700 L767.1 702 L766.7 704 L766.8 706 L767.2 708 L767.9 710 L768.4 712 L768.4 714 L768.1 716 L767.7 718 L767.7 720 L768.1 722 L768.7 724 L769.2 726 L769.3 728 L768.9 730 L768.5 732 L768.3 734 L768.5 736 L768.9 738 L769.2 740 L769.0 742 L768.3 744 L767.4 746 L766.7 748 L766.5 750 L766.7 752 L767.0 754 L766.9 756 L766.5 758 L765.9 760 L765.5 762 L765.6 764 L766.0 766 L766.3 768 L766.2 770 L765.5 772 L764.5 774 L763.7 776 L763.3 778 L763.4 780 L763.9 782 L764.2 784 L764.3 786 L764.2 788 L764.2 790 L764.5 792 L765.2 794 L765.9 796 L766.3 798 L766.2 800 L765.5 802 L764.8 804 L764.5 806 L764.9 808 L765.7 810 L766.6 812 L767.2 814 L767.7 816 L768.1 818 L768.8 820 L769.8 822 L770.9 824 L771.8 826 L772.0 828 L771.6 830 L770.9 832 L770.5 834 L770.6 836 L771.2 838 L772.1 840 L773.2 842 L773.9 844 L774.6 846 L775.3 848 L776.3 850 L777.5 852 L778.4 854 L778.7 856 L778.3 858 L777.5 860 L776.7 862 L776.3 864 L776.6 866 L777.3 868 L778.0 870 L778.5 872 L778.8 874 L779.2 876 L779.6 878 L779.4 880 L779.8 880 L780.8 878 L780.7 876 L780.9 874 L781.8 872 L783.3 870 L784.9 868 L785.7 866 L785.8 864 L785.4 862 L785.4 860 L785.8 858 L786.8 856 L787.8 854 L788.3 852 L788.3 850 L788.2 848 L788.6 846 L789.5 844 L790.7 842 L791.4 840 L791.1 838 L790.4 836 L790.0 834 L790.4 832 L791.6 830 L792.9 828 L793.7 826 L793.7 824 L793.2 822 L792.9 820 L793.0 818 L793.7 816 L794.5 814 L794.7 812 L794.5 810 L794.1 808 L794.1 806 L794.8 804 L795.7 802 L796.2 800 L796.0 798 L795.1 796 L794.3 794 L794.1 792 L794.7 790 L795.6 788 L796.0 786 L795.7 784 L794.9 782 L794.1 780 L793.9 778 L794.2 776 L794.4 774 L794.2 772 L793.3 770 L792.4 768 L791.8 766 L792.0 764 L792.5 762 L792.8 760 L792.4 758 L791.2 756 L789.9 754 L789.3 752 L789.4 750 L789.9 748 L790.2 746 L789.8 744 L789.0 742 L788.3 740 L788.1 738 L788.5 736 L788.9 734 L788.9 732 L788.3 730 L787.4 728 L787.0 726 L787.4 724 L788.4 722 L789.3 720 L789.5 718 L789.0 716 L788.4 714 L788.1 712 L788.6 710 L789.6 708 L790.4 706 L790.6 704 L790.3 702 L790.1 700 L790.6 698 L791.6 696 L792.7 694 L793.2 692 L793.1 690 L792.6 688 L792.3 686 L792.8 684 L793.9 682 L795.1 680 L795.6 678 L795.3 676 L794.8 674 L794.4 672 L794.7 670 L795.4 668 L795.9 666 L795.8 664 L795.2 662 L794.5 660 L794.4 658 L794.9 656 L795.6 654 L795.8 652 L795.2 650 L794.0 648 L793.0 646 L792.7 644 L793.0 642 L793.6 640 L793.4 638 L792.5 636 L791.2 634 L790.2 632 L789.8 630 L789.8 628 L789.7 626 L789.0 624 L787.7 622 L786.4 620 L785.6 618 L785.6 616 L785.9 614 L785.8 612 L785.0 610 L783.6 608 L782.0 606 L780.9 604 L780.9 602 L781.0 600Z" fill="#ff9820" filter="url(#gb3)"/><path d="M778.8 625 L776.4 627 L775.6 629 L775.7 631 L776.0 633 L776.3 635 L776.1 637 L775.4 639 L774.2 641 L773.0 643 L771.9 645 L771.2 647 L771.0 649 L771.0 651 L771.2 653 L771.3 655 L771.3 657 L771.2 659 L771.0 661 L770.7 663 L770.3 665 L770.0 667 L769.5 669 L768.9 671 L768.3 673 L768.1 675 L768.2 677 L768.8 679 L769.6 681 L770.3 683 L770.5 685 L770.3 687 L769.6 689 L768.9 691 L768.5 693 L768.5 695 L769.1 697 L769.9 699 L770.6 701 L771.0 703 L771.0 705 L770.8 707 L770.6 709 L770.6 711 L771.0 713 L771.6 715 L772.3 717 L772.8 719 L773.1 721 L773.1 723 L773.0 725 L773.0 727 L773.2 729 L773.5 731 L773.7 733 L773.9 735 L774.0 737 L774.1 739 L774.2 741 L774.5 743 L775.0 745 L775.3 747 L775.3 749 L774.9 751 L774.2 753 L773.2 755 L772.4 757 L772.1 759 L772.5 761 L773.3 763 L774.1 765 L774.7 767 L774.7 769 L774.0 771 L773.0 773 L771.9 775 L771.1 777 L770.8 779 L771.0 781 L771.4 783 L771.8 785 L772.1 787 L772.3 789 L772.3 791 L772.2 793 L772.1 795 L772.0 797 L771.8 799 L771.4 801 L771.0 803 L770.7 805 L770.8 807 L771.2 809 L771.9 811 L772.8 813 L773.3 815 L773.5 817 L773.1 819 L772.5 821 L771.9 823 L771.7 825 L772.1 827 L772.8 829 L773.7 831 L774.4 833 L774.7 835 L774.6 837 L774.3 839 L774.1 841 L774.3 843 L774.8 845 L775.5 847 L776.3 849 L776.8 851 L777.0 853 L777.0 855 L777.0 857 L777.1 859 L777.5 861 L778.1 863 L779.4 865 L780.6 865 L782.8 863 L783.7 861 L784.0 859 L783.9 857 L783.9 855 L784.3 853 L784.9 851 L785.6 849 L786.3 847 L786.8 845 L787.1 843 L787.5 841 L788.0 839 L788.6 837 L789.2 835 L789.6 833 L789.6 831 L789.4 829 L789.1 827 L788.9 825 L788.9 823 L789.3 821 L789.8 819 L790.1 817 L790.0 815 L789.5 813 L788.8 811 L788.1 809 L787.7 807 L787.6 805 L787.8 803 L787.9 801 L787.7 799 L787.2 797 L786.4 795 L785.8 793 L785.5 791 L785.6 789 L786.1 787 L786.6 785 L786.7 783 L786.4 781 L785.7 779 L784.9 777 L784.3 775 L784.1 773 L784.5 771 L785.1 769 L785.7 767 L786.1 765 L786.2 763 L786.1 761 L786.0 759 L786.0 757 L786.1 755 L786.2 753 L786.2 751 L786.1 749 L786.1 747 L786.4 745 L787.0 743 L787.9 741 L788.8 739 L789.5 737 L789.6 735 L789.0 733 L788.1 731 L787.2 729 L786.8 727 L787.1 725 L788.1 723 L789.3 721 L790.3 719 L790.6 717 L790.3 715 L789.4 713 L788.3 711 L787.5 709 L787.1 707 L787.1 705 L787.3 703 L787.6 701 L787.7 699 L787.8 697 L787.7 695 L787.6 693 L787.4 691 L787.0 689 L786.3 687 L785.5 685 L784.6 683 L784.0 681 L783.8 679 L784.2 677 L785.0 675 L785.7 673 L786.0 671 L785.7 669 L784.8 667 L783.7 665 L782.5 663 L781.9 661 L782.0 659 L782.5 657 L783.2 655 L783.6 653 L783.6 651 L783.1 649 L782.5 647 L781.9 645 L781.7 643 L781.7 641 L781.9 639 L782.0 637 L781.9 635 L781.6 633 L781.4 631 L781.2 629 L781.2 627 L780.1 625Z" fill="#ffc030" filter="url(#gb3)"/><circle cx="776.1" cy="576.9" r="3.2" fill="#b03000" opacity="0.7" filter="url(#gb3)"/><circle cx="771.8" cy="886.1" r="3.1" fill="#b03000" opacity="0.7" filter="url(#gb3)"/><circle cx="769.3" cy="707.2" r="1.5" fill="#d84a08" opacity="0.7" filter="url(#gb3)"/><circle cx="780.4" cy="864.8" r="1.6" fill="#ffa820" opacity="0.7" filter="url(#gb3)"/><circle cx="781.9" cy="812.7" r="2.4" fill="#f89018" opacity="0.7" filter="url(#gb3)"/><circle cx="782.4" cy="888.3" r="2.7" fill="#ffa820" opacity="0.7" filter="url(#gb3)"/><circle cx="774.3" cy="527.8" r="2.8" fill="#d84a08" opacity="0.7" filter="url(#gb3)"/><circle cx="790.5" cy="866.7" r="1.8" fill="#d84a08" opacity="0.7" filter="url(#gb3)"/><circle cx="802.8" cy="821.6" r="1.8" fill="#b03000" opacity="0.7" filter="url(#gb3)"/><circle cx="802.3" cy="788.2" r="2.5" fill="#b03000" opacity="0.7" filter="url(#gb3)"/><circle cx="815.6" cy="585.1" r="1.6" fill="#8a2200" opacity="0.7" filter="url(#gb3)"/><circle cx="790.4" cy="589.0" r="1.7" fill="#d84a08" opacity="0.7" filter="url(#gb3)"/><circle cx="783.1" cy="693.6" r="3.3" fill="#f89018" opacity="0.7" filter="url(#gb3)"/><circle cx="770.6" cy="668.6" r="3.4" fill="#ffa820" opacity="0.7" filter="url(#gb3)"/><circle cx="772.7" cy="703.0" r="1.6" fill="#ffa820" opacity="0.7" filter="url(#gb3)"/><circle cx="802.1" cy="550.0" r="2.9" fill="#c83c06" opacity="0.7" filter="url(#gb3)"/><circle cx="781.5" cy="883.4" r="3.0" fill="#e86010" opacity="0.7" filter="url(#gb3)"/><circle cx="781.4" cy="598.3" r="2.6" fill="#b03000" opacity="0.7" filter="url(#gb3)"/><circle cx="782.6" cy="748.5" r="3.2" fill="#ffa820" opacity="0.7" filter="url(#gb3)"/><circle cx="787.3" cy="639.6" r="3.4" fill="#e86010" opacity="0.7" filter="url(#gb3)"/><circle cx="798.1" cy="607.2" r="3.1" fill="#d84a08" opacity="0.7" filter="url(#gb3)"/><circle cx="807.7" cy="655.6" r="1.6" fill="#d84a08" opacity="0.7" filter="url(#gb3)"/><circle cx="773.6" cy="709.9" r="3.4" fill="#f89018" opacity="0.7" filter="url(#gb3)"/><circle cx="770.5" cy="736.4" r="2.5" fill="#ffa820" opacity="0.7" filter="url(#gb3)"/><circle cx="779.5" cy="655.8" r="2.6" fill="#f89018" opacity="0.7" filter="url(#gb3)"/><circle cx="807.0" cy="679.7" r="3.0" fill="#b03000" opacity="0.7" filter="url(#gb3)"/><circle cx="781.2" cy="696.2" r="2.8" fill="#ffa820" opacity="0.7" filter="url(#gb3)"/><circle cx="777.6" cy="528.0" r="1.8" fill="#d84a08" opacity="0.7" filter="url(#gb3)"/><circle cx="767.2" cy="541.0" r="3.0" fill="#d84a08" opacity="0.7" filter="url(#gb3)"/><circle cx="803.1" cy="694.6" r="1.8" fill="#b03000" opacity="0.7" filter="url(#gb3)"/><circle cx="792.6" cy="758.8" r="3.3" fill="#d84a08" opacity="0.7" filter="url(#gb3)"/><circle cx="770.2" cy="652.1" r="3.3" fill="#f89018" opacity="0.7" filter="url(#gb3)"/><circle cx="762.8" cy="740.5" r="2.1" fill="#e86010" opacity="0.7" filter="url(#gb3)"/><circle cx="786.9" cy="715.4" r="1.8" fill="#ffa820" opacity="0.7" filter="url(#gb3)"/><circle cx="774.5" cy="785.3" r="1.5" fill="#e86010" opacity="0.7" filter="url(#gb3)"/><circle cx="783.8" cy="737.6" r="2.0" fill="#e86010" opacity="0.7" filter="url(#gb3)"/><circle cx="768.9" cy="873.4" r="1.8" fill="#8a2200" opacity="0.7" filter="url(#gb3)"/><circle cx="796.9" cy="550.6" r="1.9" fill="#d84a08" opacity="0.7" filter="url(#gb3)"/><circle cx="780.2" cy="755.7" r="2.8" fill="#f89018" opacity="0.7" filter="url(#gb3)"/><circle cx="779.4" cy="562.4" r="2.3" fill="#b03000" opacity="0.7" filter="url(#gb3)"/><circle cx="775.6" cy="848.0" r="1.9" fill="#ffa820" opacity="0.7" filter="url(#gb3)"/><circle cx="774.1" cy="794.1" r="2.7" fill="#f89018" opacity="0.7" filter="url(#gb3)"/><circle cx="778.9" cy="704.3" r="2.3" fill="#f89018" opacity="0.7" filter="url(#gb3)"/><circle cx="776.8" cy="839.2" r="3.0" fill="#ffa820" opacity="0.7" filter="url(#gb3)"/><circle cx="781.2" cy="580.7" r="3.0" fill="#b03000" opacity="0.7" filter="url(#gb3)"/><circle cx="768.9" cy="606.8" r="2.1" fill="#d84a08" opacity="0.7" filter="url(#gb3)"/><circle cx="777.2" cy="852.8" r="2.5" fill="#e86010" opacity="0.7" filter="url(#gb3)"/><circle cx="794.4" cy="729.9" r="2.7" fill="#c83c06" opacity="0.7" filter="url(#gb3)"/><circle cx="775.7" cy="705.6" r="2.1" fill="#ffa820" opacity="0.7" filter="url(#gb3)"/><circle cx="742.9" cy="749.3" r="1.9" fill="#d84a08" opacity="0.7" filter="url(#gb3)"/><circle cx="774.8" cy="746.2" r="2.1" fill="#f89018" opacity="0.7" filter="url(#gb3)"/><circle cx="782.0" cy="887.5" r="3.2" fill="#f89018" opacity="0.7" filter="url(#gb3)"/><circle cx="761.2" cy="759.4" r="2.5" fill="#e86010" opacity="0.7" filter="url(#gb3)"/><circle cx="768.6" cy="870.1" r="2.8" fill="#d84a08" opacity="0.7" filter="url(#gb3)"/><circle cx="765.5" cy="681.0" r="1.6" fill="#e86010" opacity="0.7" filter="url(#gb3)"/><circle cx="778.7" cy="524.4" r="1.6" fill="#b03000" opacity="0.7" filter="url(#gb3)"/><circle cx="766.7" cy="618.3" r="2.4" fill="#e86010" opacity="0.7" filter="url(#gb3)"/><circle cx="772.2" cy="603.7" r="2.2" fill="#b03000" opacity="0.7" filter="url(#gb3)"/><circle cx="801.0" cy="600.4" r="2.5" fill="#d84a08" opacity="0.7" filter="url(#gb3)"/><circle cx="769.3" cy="699.5" r="2.7" fill="#c83c06" opacity="0.7" filter="url(#gb3)"/><circle cx="760.0" cy="596.0" r="2.8" fill="#d84a08" opacity="0.7" filter="url(#gb3)"/><circle cx="786.5" cy="837.1" r="3.1" fill="#e86010" opacity="0.7" filter="url(#gb3)"/><circle cx="762.1" cy="613.3" r="2.7" fill="#e86010" opacity="0.7" filter="url(#gb3)"/><circle cx="782.8" cy="824.3" r="3.5" fill="#e86010" opacity="0.7" filter="url(#gb3)"/><circle cx="775.6" cy="517.4" r="2.9" fill="#b03000" opacity="0.7" filter="url(#gb3)"/><circle cx="798.0" cy="549.0" r="1.7" fill="#d84a08" opacity="0.7" filter="url(#gb3)"/><circle cx="803.2" cy="628.5" r="3.5" fill="#b03000" opacity="0.7" filter="url(#gb3)"/><circle cx="776.0" cy="886.6" r="2.9" fill="#f89018" opacity="0.7" filter="url(#gb3)"/><circle cx="770.4" cy="592.2" r="1.9" fill="#c83c06" opacity="0.7" filter="url(#gb3)"/><circle cx="804.7" cy="545.7" r="2.1" fill="#d84a08" opacity="0.7" filter="url(#gb3)"/><circle cx="785.6" cy="610.3" r="2.5" fill="#e86010" opacity="0.7" filter="url(#gb3)"/><circle cx="773.2" cy="604.4" r="2.9" fill="#b03000" opacity="0.7" filter="url(#gb3)"/><circle cx="772.0" cy="573.9" r="2.7" fill="#e86010" opacity="0.7" filter="url(#gb3)"/><circle cx="789.8" cy="620.2" r="2.8" fill="#f89018" opacity="0.7" filter="url(#gb3)"/><circle cx="809.6" cy="748.1" r="1.6" fill="#8a2200" opacity="0.7" filter="url(#gb3)"/><circle cx="802.4" cy="818.9" r="2.2" fill="#d84a08" opacity="0.7" filter="url(#gb3)"/><circle cx="770.9" cy="543.1" r="2.9" fill="#e86010" opacity="0.7" filter="url(#gb3)"/><circle cx="773.0" cy="605.1" r="3.4" fill="#d84a08" opacity="0.7" filter="url(#gb3)"/><circle cx="796.8" cy="570.5" r="3.3" fill="#b03000" opacity="0.7" filter="url(#gb3)"/><circle cx="777.4" cy="653.8" r="2.6" fill="#f89018" opacity="0.7" filter="url(#gb3)"/><circle cx="761.3" cy="857.0" r="1.9" fill="#b03000" opacity="0.7" filter="url(#gb3)"/><circle cx="790.2" cy="666.1" r="2.0" fill="#c83c06" opacity="0.7" filter="url(#gb3)"/><circle cx="787.0" cy="730.6" r="3.3" fill="#ffa820" opacity="0.7" filter="url(#gb3)"/><circle cx="768.8" cy="521.6" r="1.6" fill="#c83c06" opacity="0.7" filter="url(#gb3)"/><circle cx="799.6" cy="678.4" r="1.9" fill="#d84a08" opacity="0.7" filter="url(#gb3)"/><circle cx="746.7" cy="537.4" r="2.7" fill="#d84a08" opacity="0.7" filter="url(#gb3)"/><circle cx="754.6" cy="747.6" r="1.8" fill="#b03000" opacity="0.7" filter="url(#gb3)"/><circle cx="791.0" cy="572.6" r="2.1" fill="#b03000" opacity="0.7" filter="url(#gb3)"/><circle cx="783.1" cy="750.2" r="1.9" fill="#f89018" opacity="0.7" filter="url(#gb3)"/><circle cx="781.3" cy="551.8" r="2.2" fill="#d84a08" opacity="0.7" filter="url(#gb3)"/><circle cx="789.3" cy="647.1" r="2.9" fill="#ffa820" opacity="0.7" filter="url(#gb3)"/><circle cx="794.9" cy="759.9" r="1.6" fill="#d84a08" opacity="0.7" filter="url(#gb3)"/><circle cx="773.3" cy="602.3" r="2.9" fill="#d84a08" opacity="0.7" filter="url(#gb3)"/><circle cx="788.1" cy="787.9" r="2.3" fill="#e86010" opacity="0.7" filter="url(#gb3)"/><circle cx="782.6" cy="636.7" r="2.2" fill="#e86010" opacity="0.7" filter="url(#gb3)"/><circle cx="794.4" cy="714.7" r="2.8" fill="#c83c06" opacity="0.7" filter="url(#gb3)"/><circle cx="772.1" cy="522.9" r="3.1" fill="#e86010" opacity="0.7" filter="url(#gb3)"/><circle cx="790.6" cy="854.9" r="1.6" fill="#c83c06" opacity="0.7" filter="url(#gb3)"/><circle cx="767.8" cy="770.3" r="3.3" fill="#c83c06" opacity="0.7" filter="url(#gb3)"/><circle cx="771.6" cy="878.8" r="1.9" fill="#e86010" opacity="0.7" filter="url(#gb3)"/><circle cx="774.8" cy="689.0" r="1.8" fill="#ffa820" opacity="0.7" filter="url(#gb3)"/><circle cx="766.2" cy="614.4" r="3.0" fill="#d84a08" opacity="0.7" filter="url(#gb3)"/><circle cx="796.1" cy="757.6" r="2.5" fill="#c83c06" opacity="0.7" filter="url(#gb3)"/><circle cx="806.6" cy="669.7" r="3.5" fill="#8a2200" opacity="0.7" filter="url(#gb3)"/><circle cx="782.5" cy="723.1" r="3.3" fill="#ffa820" opacity="0.7" filter="url(#gb3)"/><circle cx="755.1" cy="605.0" r="1.9" fill="#d84a08" opacity="0.7" filter="url(#gb3)"/><circle cx="784.0" cy="717.4" r="3.5" fill="#f89018" opacity="0.7" filter="url(#gb3)"/><circle cx="771.1" cy="856.9" r="3.0" fill="#c83c06" opacity="0.7" filter="url(#gb3)"/><circle cx="778.5" cy="884.1" r="3.4" fill="#f89018" opacity="0.7" filter="url(#gb3)"/><circle cx="757.2" cy="711.1" r="2.1" fill="#d84a08" opacity="0.7" filter="url(#gb3)"/><circle cx="773.0" cy="575.4" r="3.0" fill="#b03000" opacity="0.7" filter="url(#gb3)"/><circle cx="764.1" cy="796.8" r="1.9" fill="#c83c06" opacity="0.7" filter="url(#gb3)"/><circle cx="789.1" cy="584.1" r="2.0" fill="#b03000" opacity="0.7" filter="url(#gb3)"/><circle cx="770.6" cy="716.7" r="1.9" fill="#ffa820" opacity="0.7" filter="url(#gb3)"/><circle cx="773.1" cy="810.9" r="3.0" fill="#ffa820" opacity="0.7" filter="url(#gb3)"/><circle cx="792.7" cy="789.1" r="2.3" fill="#d84a08" opacity="0.7" filter="url(#gb3)"/><circle cx="800.1" cy="662.6" r="2.1" fill="#d84a08" opacity="0.7" filter="url(#gb3)"/><circle cx="781.5" cy="827.2" r="1.9" fill="#ffa820" opacity="0.7" filter="url(#gb3)"/><circle cx="778.1" cy="600.2" r="2.8" fill="#b03000" opacity="0.7" filter="url(#gb3)"/><circle cx="760.6" cy="525.2" r="2.5" fill="#8a2200" opacity="0.7" filter="url(#gb3)"/><circle cx="764.5" cy="688.1" r="2.9" fill="#c83c06" opacity="0.7" filter="url(#gb3)"/><circle cx="797.7" cy="541.5" r="3.0" fill="#e86010" opacity="0.7" filter="url(#gb3)"/><circle cx="778.9" cy="655.6" r="3.4" fill="#f89018" opacity="0.7" filter="url(#gb3)"/><circle cx="811.2" cy="589.5" r="3.3" fill="#b03000" opacity="0.7" filter="url(#gb3)"/><circle cx="776.8" cy="544.0" r="3.0" fill="#d84a08" opacity="0.7" filter="url(#gb3)"/><circle cx="793.7" cy="865.7" r="2.9" fill="#8a2200" opacity="0.7" filter="url(#gb3)"/><circle cx="781.8" cy="625.9" r="3.0" fill="#ffa820" opacity="0.7" filter="url(#gb3)"/><circle cx="787.7" cy="700.7" r="2.9" fill="#f89018" opacity="0.7" filter="url(#gb3)"/><circle cx="770.5" cy="640.7" r="3.2" fill="#f89018" opacity="0.7" filter="url(#gb3)"/><circle cx="768.0" cy="621.4" r="2.9" fill="#e86010" opacity="0.7" filter="url(#gb3)"/><circle cx="799.7" cy="670.1" r="2.5" fill="#d84a08" opacity="0.7" filter="url(#gb3)"/><circle cx="785.7" cy="888.6" r="2.7" fill="#8a2200" opacity="0.7" filter="url(#gb3)"/><circle cx="744.0" cy="681.4" r="2.4" fill="#b03000" opacity="0.7" filter="url(#gb3)"/><circle cx="779.2" cy="523.0" r="1.8" fill="#b03000" opacity="0.7" filter="url(#gb3)"/><circle cx="759.8" cy="665.7" r="2.5" fill="#d84a08" opacity="0.7" filter="url(#gb3)"/><circle cx="789.2" cy="598.8" r="1.5" fill="#d84a08" opacity="0.7" filter="url(#gb3)"/><circle cx="769.5" cy="756.2" r="3.3" fill="#e86010" opacity="0.7" filter="url(#gb3)"/><circle cx="782.9" cy="795.9" r="2.5" fill="#ffa820" opacity="0.7" filter="url(#gb3)"/><circle cx="789.4" cy="576.9" r="2.1" fill="#b03000" opacity="0.7" filter="url(#gb3)"/><circle cx="773.2" cy="876.7" r="1.9" fill="#e86010" opacity="0.7" filter="url(#gb3)"/><circle cx="762.4" cy="571.9" r="2.6" fill="#8a2200" opacity="0.7" filter="url(#gb3)"/><circle cx="762.0" cy="577.5" r="1.7" fill="#d84a08" opacity="0.7" filter="url(#gb3)"/><circle cx="779.7" cy="667.0" r="1.9" fill="#e86010" opacity="0.7" filter="url(#gb3)"/><circle cx="773.2" cy="521.7" r="1.9" fill="#d84a08" opacity="0.7" filter="url(#gb3)"/><circle cx="779.5" cy="728.0" r="2.9" fill="#e86010" opacity="0.7" filter="url(#gb3)"/><circle cx="795.4" cy="819.7" r="2.1" fill="#e86010" opacity="0.7" filter="url(#gb3)"/><circle cx="791.5" cy="634.3" r="1.6" fill="#e86010" opacity="0.7" filter="url(#gb3)"/><circle cx="772.6" cy="701.9" r="3.0" fill="#ffa820" opacity="0.7" filter="url(#gb3)"/><circle cx="791.8" cy="732.4" r="3.1" fill="#d84a08" opacity="0.7" filter="url(#gb3)"/><circle cx="813.1" cy="611.3" r="2.9" fill="#b03000" opacity="0.7" filter="url(#gb3)"/><circle cx="785.2" cy="714.0" r="2.5" fill="#e86010" opacity="0.7" filter="url(#gb3)"/><circle cx="792.5" cy="614.0" r="1.6" fill="#e86010" opacity="0.7" filter="url(#gb3)"/><circle cx="791.4" cy="622.7" r="3.0" fill="#d84a08" opacity="0.7" filter="url(#gb3)"/><circle cx="793.9" cy="571.0" r="2.3" fill="#b03000" opacity="0.7" filter="url(#gb3)"/><circle cx="765.2" cy="616.1" r="2.2" fill="#d84a08" opacity="0.7" filter="url(#gb3)"/><circle cx="756.8" cy="839.5" r="2.5" fill="#b03000" opacity="0.7" filter="url(#gb3)"/><circle cx="796.7" cy="554.9" r="3.0" fill="#b03000" opacity="0.7" filter="url(#gb3)"/><circle cx="780.3" cy="532.5" r="2.7" fill="#b03000" opacity="0.7" filter="url(#gb3)"/><circle cx="779.3" cy="678.1" r="1.9" fill="#e86010" opacity="0.7" filter="url(#gb3)"/><circle cx="778.3" cy="526.9" r="1.8" fill="#d84a08" opacity="0.7" filter="url(#gb3)"/><circle cx="792.8" cy="876.4" r="3.4" fill="#d84a08" opacity="0.7" filter="url(#gb3)"/><circle cx="782.8" cy="608.3" r="2.6" fill="#b03000" opacity="0.7" filter="url(#gb3)"/><circle cx="775.3" cy="655.8" r="2.9" fill="#f89018" opacity="0.7" filter="url(#gb3)"/><circle cx="796.5" cy="695.0" r="2.2" fill="#b03000" opacity="0.7" filter="url(#gb3)"/><circle cx="775.5" cy="853.5" r="2.9" fill="#e86010" opacity="0.7" filter="url(#gb3)"/><circle cx="774.6" cy="876.6" r="2.0" fill="#f89018" opacity="0.7" filter="url(#gb3)"/><circle cx="776.9" cy="888.8" r="2.9" fill="#f89018" opacity="0.7" filter="url(#gb3)"/><circle cx="789.4" cy="525.4" r="2.0" fill="#c83c06" opacity="0.7" filter="url(#gb3)"/><circle cx="786.1" cy="615.1" r="2.0" fill="#e86010" opacity="0.7" filter="url(#gb3)"/><circle cx="763.7" cy="560.5" r="3.3" fill="#8a2200" opacity="0.7" filter="url(#gb3)"/><circle cx="796.5" cy="823.8" r="2.8" fill="#c83c06" opacity="0.7" filter="url(#gb3)"/><circle cx="779.4" cy="594.4" r="2.8" fill="#d84a08" opacity="0.7" filter="url(#gb3)"/><circle cx="773.1" cy="676.5" r="2.5" fill="#f89018" opacity="0.7" filter="url(#gb3)"/><circle cx="772.8" cy="533.2" r="3.0" fill="#d84a08" opacity="0.7" filter="url(#gb3)"/><circle cx="799.3" cy="577.2" r="2.8" fill="#d84a08" opacity="0.7" filter="url(#gb3)"/><circle cx="797.4" cy="556.7" r="2.8" fill="#b03000" opacity="0.7" filter="url(#gb3)"/><circle cx="775.6" cy="842.1" r="2.6" fill="#e86010" opacity="0.7" filter="url(#gb3)"/><circle cx="805.6" cy="619.7" r="2.9" fill="#8a2200" opacity="0.7" filter="url(#gb3)"/><circle cx="791.0" cy="828.1" r="3.3" fill="#c83c06" opacity="0.7" filter="url(#gb3)"/><circle cx="779.8" cy="845.5" r="3.2" fill="#ffa820" opacity="0.7" filter="url(#gb3)"/><circle cx="763.7" cy="565.7" r="1.9" fill="#b03000" opacity="0.7" filter="url(#gb3)"/><circle cx="817.6" cy="575.4" r="2.1" fill="#8a2200" opacity="0.7" filter="url(#gb3)"/><circle cx="793.1" cy="808.8" r="3.1" fill="#d84a08" opacity="0.7" filter="url(#gb3)"/><circle cx="779.8" cy="775.0" r="1.6" fill="#e86010" opacity="0.7" filter="url(#gb3)"/><circle cx="789.1" cy="816.2" r="2.0" fill="#e86010" opacity="0.7" filter="url(#gb3)"/><circle cx="805.0" cy="563.1" r="2.7" fill="#e86010" opacity="0.7" filter="url(#gb3)"/><circle cx="785.1" cy="578.3" r="2.3" fill="#b03000" opacity="0.7" filter="url(#gb3)"/><circle cx="772.3" cy="637.4" r="2.3" fill="#e86010" opacity="0.7" filter="url(#gb3)"/><circle cx="794.5" cy="811.8" r="1.6" fill="#c83c06" opacity="0.7" filter="url(#gb3)"/><circle cx="759.6" cy="627.2" r="2.1" fill="#8a2200" opacity="0.7" filter="url(#gb3)"/><circle cx="811.3" cy="677.5" r="2.7" fill="#8a2200" opacity="0.7" filter="url(#gb3)"/><circle cx="753.7" cy="852.4" r="2.4" fill="#b03000" opacity="0.7" filter="url(#gb3)"/><circle cx="781.4" cy="774.8" r="2.4" fill="#e86010" opacity="0.7" filter="url(#gb3)"/><circle cx="774.0" cy="533.8" r="3.3" fill="#b03000" opacity="0.7" filter="url(#gb3)"/><circle cx="781.0" cy="546.8" r="3.1" fill="#d84a08" opacity="0.7" filter="url(#gb3)"/><circle cx="768.2" cy="856.0" r="3.1" fill="#c83c06" opacity="0.7" filter="url(#gb3)"/><circle cx="791.5" cy="786.0" r="2.9" fill="#d84a08" opacity="0.7" filter="url(#gb3)"/><circle cx="777.7" cy="515.7" r="3.2" fill="#d84a08" opacity="0.7" filter="url(#gb3)"/><circle cx="781.5" cy="884.8" r="2.2" fill="#ffa820" opacity="0.7" filter="url(#gb3)"/><circle cx="777.5" cy="742.3" r="3.1" fill="#ffa820" opacity="0.7" filter="url(#gb3)"/><circle cx="777.4" cy="698.2" r="3.0" fill="#e86010" opacity="0.7" filter="url(#gb3)"/><circle cx="801.7" cy="599.4" r="3.4" fill="#8a2200" opacity="0.7" filter="url(#gb3)"/><circle cx="807.4" cy="568.3" r="2.0" fill="#c83c06" opacity="0.7" filter="url(#gb3)"/><circle cx="768.4" cy="647.2" r="3.0" fill="#e86010" opacity="0.7" filter="url(#gb3)"/><circle cx="747.0" cy="653.1" r="1.9" fill="#d84a08" opacity="0.7" filter="url(#gb3)"/><circle cx="778.4" cy="605.1" r="2.4" fill="#b03000" opacity="0.7" filter="url(#gb3)"/><circle cx="779.9" cy="708.4" r="3.0" fill="#ffa820" opacity="0.7" filter="url(#gb3)"/><circle cx="797.0" cy="772.2" r="2.1" fill="#e86010" opacity="0.7" filter="url(#gb3)"/><circle cx="764.8" cy="736.1" r="2.8" fill="#d84a08" opacity="0.7" filter="url(#gb3)"/><circle cx="781.9" cy="863.0" r="1.9" fill="#ffa820" opacity="0.7" filter="url(#gb3)"/><circle cx="743.4" cy="582.4" r="1.7" fill="#8a2200" opacity="0.7" filter="url(#gb3)"/><circle cx="771.0" cy="786.3" r="3.2" fill="#ffa820" opacity="0.7" filter="url(#gb3)"/><circle cx="770.4" cy="695.4" r="2.0" fill="#e86010" opacity="0.7" filter="url(#gb3)"/><circle cx="775.4" cy="839.6" r="3.1" fill="#e86010" opacity="0.7" filter="url(#gb3)"/><circle cx="789.4" cy="856.6" r="1.9" fill="#d84a08" opacity="0.7" filter="url(#gb3)"/><circle cx="765.0" cy="716.7" r="1.5" fill="#c83c06" opacity="0.7" filter="url(#gb3)"/><circle cx="756.0" cy="803.6" r="2.0" fill="#d84a08" opacity="0.7" filter="url(#gb3)"/><circle cx="778.0" cy="676.3" r="3.5" fill="#ffa820" opacity="0.7" filter="url(#gb3)"/><circle cx="766.9" cy="832.8" r="2.4" fill="#d84a08" opacity="0.7" filter="url(#gb3)"/><circle cx="785.2" cy="520.7" r="3.4" fill="#e86010" opacity="0.7" filter="url(#gb3)"/></g><path d="M778 515V890" stroke="#c0a080" stroke-opacity="0.3" stroke-width="1"/></svg>
<div class="a" style="left:955px;top:886px;width:13px;height:13px;background:#ff4c0a;box-shadow:0 0 5px 3px #701800"></div>
<div class="t" style="left:959px;top:887px;font-size:11px;color:#ffc0a0">+</div>
<div class="t" style="left:972px;top:887px;font-size:11px;color:#a04030">1</div>
<svg class="a" style="left:985px;top:497px" width="930" height="406" viewBox="985 497 930 406"><defs><linearGradient id="bluegr" gradientUnits="userSpaceOnUse" x1="0" y1="600" x2="0" y2="885"><stop offset="0" stop-color="#0a9ed2"/><stop offset="0.35" stop-color="#0884b4"/><stop offset="0.7" stop-color="#06688e"/><stop offset="1" stop-color="#043a50"/></linearGradient></defs><rect x="1013.5" y="513" width="179.0" height="34" fill="#8a4646"/><rect x="1013.5" y="547" width="179.0" height="34" fill="#595959"/><rect x="1013.5" y="581" width="179.0" height="34" fill="#3e3e3e"/><rect x="1013.5" y="615" width="89.5" height="270" fill="url(#bluegr)"/><rect x="1013.5" y="615" width="89.5" height="3" fill="#10b8e8" opacity="0.6"/><rect x="1103" y="614" width="89.5" height="271" fill="url(#bluegr)"/><rect x="1103" y="614" width="89.5" height="3" fill="#10b8e8" opacity="0.6"/><path d="M1013.5 563H1192.5" stroke="#6e6e6e" stroke-width="1.5"/><path d="M1013.5 581H1192.5" stroke="#707070" stroke-width="1.5"/><path d="M1013.5 597H1192.5" stroke="#555" stroke-width="1.5"/><path d="M1013.5 547H1192.5" stroke="#9a5a5a" stroke-width="1.5"/><path d="M1013.5 622H1192.5" stroke="#30c0e8" stroke-opacity="0.55" stroke-width="1.5"/><path d="M1013.5 631H1192.5" stroke="#30c0e8" stroke-opacity="0.55" stroke-width="1.5"/><path d="M1013.5 648H1192.5" stroke="#30c0e8" stroke-opacity="0.55" stroke-width="1.5"/><path d="M1013.5 664H1192.5" stroke="#30c0e8" stroke-opacity="0.55" stroke-width="1.5"/><path d="M1013.5 748.5H1192.5" stroke="#30c0e8" stroke-opacity="0.55" stroke-width="1.5"/><path d="M1013.5 599.5H1103" stroke="#20c8f8" stroke-width="2.2"/><path d="M1103 600.5H1192.5" stroke="#20c8f8" stroke-width="2.2"/><path d="M1103 513V885" stroke="#0a0a0a" stroke-width="1.5"/><rect x="1244.5" y="513" width="179.0" height="37.5" fill="#7a2828"/><rect x="1244.5" y="550.5" width="179.0" height="105.5" fill="#414141"/><rect x="1244.5" y="656" width="179.0" height="21" fill="#242424"/><rect x="1244.5" y="676.5" width="89.0" height="208.5" fill="url(#bluegr)"/><rect x="1333.5" y="677.5" width="90.0" height="207.5" fill="url(#bluegr)"/><path d="M1244.5 528H1423.5" stroke="#944a4a" stroke-width="1.5"/><path d="M1244.5 581H1423.5" stroke="#5c5c5c" stroke-width="1.5"/><path d="M1244.5 607H1423.5" stroke="#5c5c5c" stroke-width="1.5"/><path d="M1244.5 635H1423.5" stroke="#5c5c5c" stroke-width="1.5"/><path d="M1244.5 655H1423.5" stroke="#5c5c5c" stroke-width="1.5"/><path d="M1244.5 704H1423.5" stroke="#30c0e8" stroke-opacity="0.55" stroke-width="1.5"/><path d="M1244.5 791H1423.5" stroke="#30c0e8" stroke-opacity="0.55" stroke-width="1.5"/><path d="M1244.5 639H1333.5" stroke="#20c8f8" stroke-width="2.2"/><path d="M1333.5 641H1423.5" stroke="#20c8f8" stroke-width="2.2"/><path d="M1333.5 513V885" stroke="#0a0a0a" stroke-width="1.5"/><rect x="1475.5" y="513" width="179.0" height="21" fill="#9a5656"/><rect x="1475.5" y="534" width="179.0" height="21" fill="#6c6c6c"/><rect x="1475.5" y="555" width="179.0" height="41" fill="#545454"/><rect x="1475.5" y="596" width="179.0" height="12" fill="#404040"/><rect x="1475.5" y="603.6" width="89.5" height="281.4" fill="url(#bluegr)"/><rect x="1475.5" y="603.6" width="89.5" height="3" fill="#10b8e8" opacity="0.6"/><rect x="1565" y="607.4" width="89.5" height="277.6" fill="url(#bluegr)"/><rect x="1565" y="607.4" width="89.5" height="3" fill="#10b8e8" opacity="0.6"/><path d="M1475.5 534H1654.5" stroke="#b06a6a" stroke-width="1.5"/><path d="M1475.5 554.6H1654.5" stroke="#8a8a8a" stroke-width="1.5"/><path d="M1475.5 575H1654.5" stroke="#7a7a7a" stroke-width="1.5"/><path d="M1475.5 595.7H1654.5" stroke="#6a6a6a" stroke-width="1.5"/><path d="M1475.5 615H1654.5" stroke="#30c0e8" stroke-opacity="0.55" stroke-width="1.5"/><path d="M1475.5 636H1654.5" stroke="#30c0e8" stroke-opacity="0.55" stroke-width="1.5"/><path d="M1475.5 656H1654.5" stroke="#30c0e8" stroke-opacity="0.55" stroke-width="1.5"/><path d="M1475.5 677H1654.5" stroke="#30c0e8" stroke-opacity="0.55" stroke-width="1.5"/><path d="M1475.5 697H1654.5" stroke="#30c0e8" stroke-opacity="0.55" stroke-width="1.5"/><path d="M1475.5 718H1654.5" stroke="#30c0e8" stroke-opacity="0.55" stroke-width="1.5"/><path d="M1475.5 759H1654.5" stroke="#30c0e8" stroke-opacity="0.55" stroke-width="1.5"/><path d="M1475.5 794H1654.5" stroke="#30c0e8" stroke-opacity="0.55" stroke-width="1.5"/><path d="M1475.5 822H1654.5" stroke="#30c0e8" stroke-opacity="0.55" stroke-width="1.5"/><path d="M1565 513V885" stroke="#0a0a0a" stroke-width="1.5"/></svg>
<div class="t" style="left:980px;width:30px;text-align:right;top:507.5px;font-size:10px;color:#9c9c9c;letter-spacing:-0.3px">+18</div>
<div class="t" style="left:1198px;top:507.5px;font-size:10px;color:#9c9c9c;letter-spacing:-0.3px">+18</div>
<div class="t" style="left:980px;width:30px;text-align:right;top:541.5px;font-size:10px;color:#9c9c9c;letter-spacing:-0.3px">+12</div>
<div class="t" style="left:1198px;top:541.5px;font-size:10px;color:#9c9c9c;letter-spacing:-0.3px">+12</div>
<div class="t" style="left:980px;width:30px;text-align:right;top:557.5px;font-size:10px;color:#9c9c9c;letter-spacing:-0.3px">+9</div>
<div class="t" style="left:1198px;top:557.5px;font-size:10px;color:#9c9c9c;letter-spacing:-0.3px">+9</div>
<div class="t" style="left:980px;width:30px;text-align:right;top:575.5px;font-size:10px;color:#9c9c9c;letter-spacing:-0.3px">+6</div>
<div class="t" style="left:1198px;top:575.5px;font-size:10px;color:#9c9c9c;letter-spacing:-0.3px">+6</div>
<div class="t" style="left:980px;width:30px;text-align:right;top:591.5px;font-size:10px;color:#9c9c9c;letter-spacing:-0.3px">+3</div>
<div class="t" style="left:1198px;top:591.5px;font-size:10px;color:#9c9c9c;letter-spacing:-0.3px">+3</div>
<div class="t" style="left:980px;width:30px;text-align:right;top:609.5px;font-size:10px;color:#9c9c9c;letter-spacing:-0.3px">0</div>
<div class="t" style="left:1198px;top:609.5px;font-size:10px;color:#9c9c9c;letter-spacing:-0.3px">0</div>
<div class="t" style="left:980px;width:30px;text-align:right;top:625.5px;font-size:10px;color:#9c9c9c;letter-spacing:-0.3px">-3</div>
<div class="t" style="left:1198px;top:625.5px;font-size:10px;color:#9c9c9c;letter-spacing:-0.3px">-3</div>
<div class="t" style="left:980px;width:30px;text-align:right;top:643.5px;font-size:10px;color:#9c9c9c;letter-spacing:-0.3px">-6</div>
<div class="t" style="left:1198px;top:643.5px;font-size:10px;color:#9c9c9c;letter-spacing:-0.3px">-6</div>
<div class="t" style="left:980px;width:30px;text-align:right;top:658.5px;font-size:10px;color:#9c9c9c;letter-spacing:-0.3px">-9</div>
<div class="t" style="left:1198px;top:658.5px;font-size:10px;color:#9c9c9c;letter-spacing:-0.3px">-9</div>
<div class="t" style="left:980px;width:30px;text-align:right;top:743.5px;font-size:10px;color:#9c9c9c;letter-spacing:-0.3px">-24</div>
<div class="t" style="left:1198px;top:743.5px;font-size:10px;color:#9c9c9c;letter-spacing:-0.3px">-24</div>
<div class="t" style="left:980px;width:30px;text-align:right;top:873.5px;font-size:10px;color:#9c9c9c;letter-spacing:-0.3px">-48</div>
<div class="t" style="left:1198px;top:873.5px;font-size:10px;color:#9c9c9c;letter-spacing:-0.3px">-48</div>
<div class="t" style="left:1211px;width:30px;text-align:right;top:507.5px;font-size:10px;color:#9c9c9c;letter-spacing:-0.3px">+3</div>
<div class="t" style="left:1430px;top:507.5px;font-size:10px;color:#9c9c9c;letter-spacing:-0.3px">+3</div>
<div class="t" style="left:1211px;width:30px;text-align:right;top:523.5px;font-size:10px;color:#9c9c9c;letter-spacing:-0.3px">+1</div>
<div class="t" style="left:1430px;top:523.5px;font-size:10px;color:#9c9c9c;letter-spacing:-0.3px">+1</div>
<div class="t" style="left:1211px;width:30px;text-align:right;top:544.5px;font-size:10px;color:#9c9c9c;letter-spacing:-0.3px">0</div>
<div class="t" style="left:1430px;top:544.5px;font-size:10px;color:#9c9c9c;letter-spacing:-0.3px">0</div>
<div class="t" style="left:1211px;width:30px;text-align:right;top:575.5px;font-size:10px;color:#9c9c9c;letter-spacing:-0.3px">-1</div>
<div class="t" style="left:1430px;top:575.5px;font-size:10px;color:#9c9c9c;letter-spacing:-0.3px">-1</div>
<div class="t" style="left:1211px;width:30px;text-align:right;top:600.5px;font-size:10px;color:#9c9c9c;letter-spacing:-0.3px">-3</div>
<div class="t" style="left:1430px;top:600.5px;font-size:10px;color:#9c9c9c;letter-spacing:-0.3px">-3</div>
<div class="t" style="left:1211px;width:30px;text-align:right;top:629.5px;font-size:10px;color:#9c9c9c;letter-spacing:-0.3px">-6</div>
<div class="t" style="left:1430px;top:629.5px;font-size:10px;color:#9c9c9c;letter-spacing:-0.3px">-6</div>
<div class="t" style="left:1211px;width:30px;text-align:right;top:648.5px;font-size:10px;color:#9c9c9c;letter-spacing:-0.3px">-9</div>
<div class="t" style="left:1430px;top:648.5px;font-size:10px;color:#9c9c9c;letter-spacing:-0.3px">-9</div>
<div class="t" style="left:1211px;width:30px;text-align:right;top:699.5px;font-size:10px;color:#9c9c9c;letter-spacing:-0.3px">-18</div>
<div class="t" style="left:1430px;top:699.5px;font-size:10px;color:#9c9c9c;letter-spacing:-0.3px">-18</div>
<div class="t" style="left:1211px;width:30px;text-align:right;top:786.5px;font-size:10px;color:#9c9c9c;letter-spacing:-0.3px">-40</div>
<div class="t" style="left:1430px;top:786.5px;font-size:10px;color:#9c9c9c;letter-spacing:-0.3px">-40</div>
<div class="t" style="left:1211px;width:30px;text-align:right;top:873.5px;font-size:10px;color:#9c9c9c;letter-spacing:-0.3px">-72</div>
<div class="t" style="left:1430px;top:873.5px;font-size:10px;color:#9c9c9c;letter-spacing:-0.3px">-72</div>
<div class="t" style="left:1441px;width:30px;text-align:right;top:507.5px;font-size:10px;color:#9c9c9c;letter-spacing:-0.3px">-5</div>
<div class="t" style="left:1660px;top:507.5px;font-size:10px;color:#9c9c9c;letter-spacing:-0.3px">-5</div>
<div class="t" style="left:1441px;width:30px;text-align:right;top:527.5px;font-size:10px;color:#9c9c9c;letter-spacing:-0.3px">-8</div>
<div class="t" style="left:1660px;top:527.5px;font-size:10px;color:#9c9c9c;letter-spacing:-0.3px">-8</div>
<div class="t" style="left:1441px;width:30px;text-align:right;top:548.5px;font-size:10px;color:#9c9c9c;letter-spacing:-0.3px">-11</div>
<div class="t" style="left:1660px;top:548.5px;font-size:10px;color:#9c9c9c;letter-spacing:-0.3px">-11</div>
<div class="t" style="left:1441px;width:30px;text-align:right;top:569.5px;font-size:10px;color:#9c9c9c;letter-spacing:-0.3px">-14</div>
<div class="t" style="left:1660px;top:569.5px;font-size:10px;color:#9c9c9c;letter-spacing:-0.3px">-14</div>
<div class="t" style="left:1441px;width:30px;text-align:right;top:589.5px;font-size:10px;color:#9c9c9c;letter-spacing:-0.3px">-17</div>
<div class="t" style="left:1660px;top:589.5px;font-size:10px;color:#9c9c9c;letter-spacing:-0.3px">-17</div>
<div class="t" style="left:1441px;width:30px;text-align:right;top:610.5px;font-size:10px;color:#9c9c9c;letter-spacing:-0.3px">-20</div>
<div class="t" style="left:1660px;top:610.5px;font-size:10px;color:#9c9c9c;letter-spacing:-0.3px">-20</div>
<div class="t" style="left:1441px;width:30px;text-align:right;top:631.5px;font-size:10px;color:#9c9c9c;letter-spacing:-0.3px">-23</div>
<div class="t" style="left:1660px;top:631.5px;font-size:10px;color:#9c9c9c;letter-spacing:-0.3px">-23</div>
<div class="t" style="left:1441px;width:30px;text-align:right;top:651.5px;font-size:10px;color:#9c9c9c;letter-spacing:-0.3px">-26</div>
<div class="t" style="left:1660px;top:651.5px;font-size:10px;color:#9c9c9c;letter-spacing:-0.3px">-26</div>
<div class="t" style="left:1441px;width:30px;text-align:right;top:672.5px;font-size:10px;color:#9c9c9c;letter-spacing:-0.3px">-29</div>
<div class="t" style="left:1660px;top:672.5px;font-size:10px;color:#9c9c9c;letter-spacing:-0.3px">-29</div>
<div class="t" style="left:1441px;width:30px;text-align:right;top:692.5px;font-size:10px;color:#9c9c9c;letter-spacing:-0.3px">-32</div>
<div class="t" style="left:1660px;top:692.5px;font-size:10px;color:#9c9c9c;letter-spacing:-0.3px">-32</div>
<div class="t" style="left:1441px;width:30px;text-align:right;top:713.5px;font-size:10px;color:#9c9c9c;letter-spacing:-0.3px">-35</div>
<div class="t" style="left:1660px;top:713.5px;font-size:10px;color:#9c9c9c;letter-spacing:-0.3px">-35</div>
<div class="t" style="left:1441px;width:30px;text-align:right;top:754.5px;font-size:10px;color:#9c9c9c;letter-spacing:-0.3px">-41</div>
<div class="t" style="left:1660px;top:754.5px;font-size:10px;color:#9c9c9c;letter-spacing:-0.3px">-41</div>
<div class="t" style="left:1441px;width:30px;text-align:right;top:789.5px;font-size:10px;color:#9c9c9c;letter-spacing:-0.3px">-46</div>
<div class="t" style="left:1660px;top:789.5px;font-size:10px;color:#9c9c9c;letter-spacing:-0.3px">-46</div>
<div class="t" style="left:1441px;width:30px;text-align:right;top:816.5px;font-size:10px;color:#9c9c9c;letter-spacing:-0.3px">-50</div>
<div class="t" style="left:1660px;top:816.5px;font-size:10px;color:#9c9c9c;letter-spacing:-0.3px">-50</div>
<div class="t" style="left:1441px;width:30px;text-align:right;top:872.5px;font-size:10px;color:#9c9c9c;letter-spacing:-0.3px">-59</div>
<div class="t" style="left:1660px;top:872.5px;font-size:10px;color:#9c9c9c;letter-spacing:-0.3px">-59</div>
<div class="t" style="left:1027px;width:60px;text-align:center;top:501px;font-size:11px;color:#c0c0c0">+2.8</div>
<div class="t" style="left:1117px;width:60px;text-align:center;top:501px;font-size:11px;color:#c0c0c0">+2.5</div>
<div class="t" style="left:1259px;width:60px;text-align:center;top:501px;font-size:11px;color:#c0c0c0">-6.6</div>
<div class="t" style="left:1349px;width:60px;text-align:center;top:501px;font-size:11px;color:#c0c0c0">-6.9</div>
<div class="t" style="left:1490px;width:60px;text-align:center;top:501px;font-size:11px;color:#c0c0c0">-18.1</div>
<div class="t" style="left:1580px;width:60px;text-align:center;top:501px;font-size:11px;color:#c0c0c0">-18.7</div>
<div class="t" style="left:1049px;width:20px;text-align:center;top:867px;font-size:10px;color:#8ab8c8">L</div>
<div class="t" style="left:1138px;width:20px;text-align:center;top:867px;font-size:10px;color:#8ab8c8">R</div>
<div class="t" style="left:1280px;width:20px;text-align:center;top:867px;font-size:10px;color:#8ab8c8">L</div>
<div class="t" style="left:1369px;width:20px;text-align:center;top:867px;font-size:10px;color:#8ab8c8">R</div>
<div class="t" style="left:1510px;width:20px;text-align:center;top:867px;font-size:10px;color:#8ab8c8">M</div>
<div class="t" style="left:1600px;width:20px;text-align:center;top:867px;font-size:10px;color:#8ab8c8">S</div>
<div class="t" style="left:1044px;width:120px;text-align:center;top:888px;font-size:10px;color:#a0a0a0">Rms (dB)</div>
<div class="t" style="left:1274px;width:120px;text-align:center;top:888px;font-size:10px;color:#a0a0a0">True Peak (dBTP)</div>
<div class="t" style="left:1505px;width:120px;text-align:center;top:888px;font-size:10px;color:#a0a0a0">EBU R128 (LUFS)</div>
<div class="t" style="left:1682px;top:506px;font-size:21px;color:#e6e6e6">M Max</div>
<div class="t" style="left:1682px;top:563px;font-size:21px;color:#e6e6e6">S Max</div>
<div class="t" style="left:1682px;top:620px;font-size:21px;color:#e6e6e6">Integrated</div>
<div class="t" style="left:1682px;top:677px;font-size:21px;color:#e6e6e6">Range</div>
<div class="t" style="left:1682px;top:735px;font-size:21px;color:#e6e6e6">TruePeak Max</div>
<div class="t" style="left:1682px;top:849px;font-size:21px;color:#e6e6e6">Mode</div>
<div class="t" style="left:1630px;width:250px;text-align:right;top:535px;font-size:21px;color:#f0a21e;letter-spacing:-0.4px">-11.9 LUFS</div>
<div class="t" style="left:1630px;width:250px;text-align:right;top:592px;font-size:21px;color:#f0a21e;letter-spacing:-0.4px">-13.5 LUFS</div>
<div class="t" style="left:1630px;width:250px;text-align:right;top:649px;font-size:21px;color:#f0a21e;letter-spacing:-0.4px">-16.5 LUFS</div>
<div class="t" style="left:1630px;width:250px;text-align:right;top:705px;font-size:21px;color:#58a8c4;letter-spacing:-0.4px">7.1 LUFS</div>
<div class="t" style="left:1608px;width:250px;text-align:right;top:763px;font-size:21px;color:#58a8c4;letter-spacing:-0.4px">-3.4 dB</div>
<div class="t" style="left:1655px;width:250px;text-align:right;top:876px;font-size:21px;color:#58a8c4;letter-spacing:-0.4px">ITU BS.1770-1</div>
<div class="t" style="left:579px;top:932px;font-size:11px;color:#9a9a9a">Offset: 00:00:00:00 - Length: 00:00:21:12</div>
<div class="t" style="left:1195px;width:100px;text-align:center;top:932px;font-size:11px;color:#8a8a8a">True Peak</div>
<div class="t" style="left:1761px;width:150px;text-align:right;top:932px;font-size:11px;color:#9a9a9a">00:02:14:18</div>
<svg class="a" style="left:575px;top:926px" width="1340" height="148" viewBox="575 926 1340 148"><defs><linearGradient id="bg2" gradientUnits="userSpaceOnUse" x1="0" y1="1000" x2="0" y2="1074"><stop offset="0" stop-color="#0996c6"/><stop offset="0.4" stop-color="#0882b0"/><stop offset="1" stop-color="#05506c"/></linearGradient></defs><rect x="603.5" y="949" width="1283.5" height="12" fill="#7a2a2a"/><rect x="603.5" y="961" width="1283.5" height="37" fill="#414141"/><rect x="603.5" y="998" width="1283.5" height="76" fill="#262626"/><path d="M603.5 1074 L603.5 999.7 L605.5 999.7 L605.5 1000.8 L607.5 1000.8 L607.5 1000.1 L609.5 1000.1 L609.5 1000.9 L611.5 1000.9 L611.5 1000.9 L613.5 1000.9 L613.5 998.9 L615.5 998.9 L615.5 998.7 L617.5 998.7 L617.5 1001.6 L619.5 1001.6 L619.5 999.5 L621.5 999.5 L621.5 999.2 L623.5 999.2 L623.5 1001.8 L625.5 1001.8 L625.5 999.8 L627.5 999.8 L627.5 1001.0 L629.5 1001.0 L629.5 999.6 L631.5 999.6 L631.5 1000.0 L633.5 1000.0 L633.5 998.1 L635.5 998.1 L635.5 999.8 L637.5 999.8 L637.5 1000.9 L639.5 1000.9 L639.5 1000.0 L641.5 1000.0 L641.5 1001.1 L643.5 1001.1 L643.5 1001.2 L645.5 1001.2 L645.5 999.3 L647.5 999.3 L647.5 1002.1 L649.5 1002.1 L649.5 1001.8 L651.5 1001.8 L651.5 1001.0 L653.5 1001.0 L653.5 1000.3 L655.5 1000.3 L655.5 1003.6 L657.5 1003.6 L657.5 1002.4 L659.5 1002.4 L659.5 1003.6 L661.5 1003.6 L661.5 1004.4 L663.5 1004.4 L663.5 1004.1 L665.5 1004.1 L665.5 1005.1 L667.5 1005.1 L667.5 1003.4 L669.5 1003.4 L669.5 1005.2 L671.5 1005.2 L671.5 1004.4 L673.5 1004.4 L673.5 1006.8 L675.5 1006.8 L675.5 1007.2 L677.5 1007.2 L677.5 1005.0 L679.5 1005.0 L679.5 1005.7 L681.5 1005.7 L681.5 1006.3 L683.5 1006.3 L683.5 1009.1 L685.5 1009.1 L685.5 1007.3 L687.5 1007.3 L687.5 1008.1 L689.5 1008.1 L689.5 1007.1 L691.5 1007.1 L691.5 1007.9 L693.5 1007.9 L693.5 1007.6 L695.5 1007.6 L695.5 1007.6 L697.5 1007.6 L697.5 1008.6 L699.5 1008.6 L699.5 1008.7 L701.5 1008.7 L701.5 1009.0 L703.5 1009.0 L703.5 1007.2 L705.5 1007.2 L705.5 1007.1 L707.5 1007.1 L707.5 1005.8 L709.5 1005.8 L709.5 1005.3 L711.5 1005.3 L711.5 1004.1 L713.5 1004.1 L713.5 1002.6 L715.5 1002.6 L715.5 1005.5 L717.5 1005.5 L717.5 1006.2 L719.5 1006.2 L719.5 1006.3 L721.5 1006.3 L721.5 1005.5 L723.5 1005.5 L723.5 1006.3 L725.5 1006.3 L725.5 1004.9 L727.5 1004.9 L727.5 1007.4 L729.5 1007.4 L729.5 1006.9 L731.5 1006.9 L731.5 1005.7 L733.5 1005.7 L733.5 1004.7 L735.5 1004.7 L735.5 1007.3 L737.5 1007.3 L737.5 1007.6 L739.5 1007.6 L739.5 1004.1 L741.5 1004.1 L741.5 1006.4 L743.5 1006.4 L743.5 1004.8 L745.5 1004.8 L745.5 1003.6 L747.5 1003.6 L747.5 1004.0 L749.5 1004.0 L749.5 1005.5 L751.5 1005.5 L751.5 1005.7 L753.5 1005.7 L753.5 1002.5 L755.5 1002.5 L755.5 1004.4 L757.5 1004.4 L757.5 1002.2 L759.5 1002.2 L759.5 1004.4 L761.5 1004.4 L761.5 1002.9 L763.5 1002.9 L763.5 1004.7 L765.5 1004.7 L765.5 1005.1 L767.5 1005.1 L767.5 1003.6 L769.5 1003.6 L769.5 1005.7 L771.5 1005.7 L771.5 1003.4 L773.5 1003.4 L773.5 1002.9 L775.5 1002.9 L775.5 1005.0 L777.5 1005.0 L777.5 1003.2 L779.5 1003.2 L779.5 1004.0 L781.5 1004.0 L781.5 1005.0 L783.5 1005.0 L783.5 1006.0 L785.5 1006.0 L785.5 1005.0 L787.5 1005.0 L787.5 1006.2 L789.5 1006.2 L789.5 1010.8 L791.5 1010.8 L791.5 1010.4 L793.5 1010.4 L793.5 1014.4 L795.5 1014.4 L795.5 1014.9 L797.5 1014.9 L797.5 1012.9 L799.5 1012.9 L799.5 1013.0 L801.5 1013.0 L801.5 1013.1 L803.5 1013.1 L803.5 1013.3 L805.5 1013.3 L805.5 1012.6 L807.5 1012.6 L807.5 1011.4 L809.5 1011.4 L809.5 1010.4 L811.5 1010.4 L811.5 1010.4 L813.5 1010.4 L813.5 1007.7 L815.5 1007.7 L815.5 1006.6 L817.5 1006.6 L817.5 1008.6 L819.5 1008.6 L819.5 1007.8 L821.5 1007.8 L821.5 1009.0 L823.5 1009.0 L823.5 1012.3 L825.5 1012.3 L825.5 1011.6 L827.5 1011.6 L827.5 1012.7 L829.5 1012.7 L829.5 1011.7 L831.5 1011.7 L831.5 1012.4 L833.5 1012.4 L833.5 1012.0 L835.5 1012.0 L835.5 1009.0 L837.5 1009.0 L837.5 1010.1 L839.5 1010.1 L839.5 1009.2 L841.5 1009.2 L841.5 1007.3 L843.5 1007.3 L843.5 1010.1 L845.5 1010.1 L845.5 1010.2 L847.5 1010.2 L847.5 1011.7 L849.5 1011.7 L849.5 1011.3 L851.5 1011.3 L851.5 1013.1 L853.5 1013.1 L853.5 1013.7 L855.5 1013.7 L855.5 1011.7 L857.5 1011.7 L857.5 1012.3 L859.5 1012.3 L859.5 1015.1 L861.5 1015.1 L861.5 1016.6 L863.5 1016.6 L863.5 1014.6 L865.5 1014.6 L865.5 1015.8 L867.5 1015.8 L867.5 1016.9 L869.5 1016.9 L869.5 1016.4 L871.5 1016.4 L871.5 1017.3 L873.5 1017.3 L873.5 1017.8 L875.5 1017.8 L875.5 1018.7 L877.5 1018.7 L877.5 1020.2 L879.5 1020.2 L879.5 1019.9 L881.5 1019.9 L881.5 1020.8 L883.5 1020.8 L883.5 1023.0 L885.5 1023.0 L885.5 1020.1 L887.5 1020.1 L887.5 1021.5 L889.5 1021.5 L889.5 1021.6 L891.5 1021.6 L891.5 1019.6 L893.5 1019.6 L893.5 1018.8 L895.5 1018.8 L895.5 1018.9 L897.5 1018.9 L897.5 1013.9 L899.5 1013.9 L899.5 992.7 L901.5 992.7 L901.5 997.1 L903.5 997.1 L903.5 1010.7 L905.5 1010.7 L905.5 1009.0 L907.5 1009.0 L907.5 1008.1 L909.5 1008.1 L909.5 1006.5 L911.5 1006.5 L911.5 1006.6 L913.5 1006.6 L913.5 1003.5 L915.5 1003.5 L915.5 1003.4 L917.5 1003.4 L917.5 999.2 L919.5 999.2 L919.5 998.7 L921.5 998.7 L921.5 1003.2 L923.5 1003.2 L923.5 1007.5 L925.5 1007.5 L925.5 1009.3 L927.5 1009.3 L927.5 1004.9 L929.5 1004.9 L929.5 1004.8 L931.5 1004.8 L931.5 1006.6 L933.5 1006.6 L933.5 1005.6 L935.5 1005.6 L935.5 1008.1 L937.5 1008.1 L937.5 1008.6 L939.5 1008.6 L939.5 1006.7 L941.5 1006.7 L941.5 1008.3 L943.5 1008.3 L943.5 1011.4 L945.5 1011.4 L945.5 1012.0 L947.5 1012.0 L947.5 1013.8 L949.5 1013.8 L949.5 1010.8 L951.5 1010.8 L951.5 1008.7 L953.5 1008.7 L953.5 1008.0 L955.5 1008.0 L955.5 1008.5 L957.5 1008.5 L957.5 1005.2 L959.5 1005.2 L959.5 1001.5 L961.5 1001.5 L961.5 1000.5 L963.5 1000.5 L963.5 1002.6 L965.5 1002.6 L965.5 1004.5 L967.5 1004.5 L967.5 1008.4 L969.5 1008.4 L969.5 1007.6 L971.5 1007.6 L971.5 1009.1 L973.5 1009.1 L973.5 1013.0 L975.5 1013.0 L975.5 1013.1 L977.5 1013.1 L977.5 1012.8 L979.5 1012.8 L979.5 991.8 L981.5 991.8 L981.5 995.3 L983.5 995.3 L983.5 996.9 L985.5 996.9 L985.5 996.9 L987.5 996.9 L987.5 1001.5 L989.5 1001.5 L989.5 1003.3 L991.5 1003.3 L991.5 1001.6 L993.5 1001.6 L993.5 1002.4 L995.5 1002.4 L995.5 1004.3 L997.5 1004.3 L997.5 1007.2 L999.5 1007.2 L999.5 1008.5 L1001.5 1008.5 L1001.5 1005.3 L1003.5 1005.3 L1003.5 1007.8 L1005.5 1007.8 L1005.5 1007.3 L1007.5 1007.3 L1007.5 1009.8 L1009.5 1009.8 L1009.5 1007.6 L1011.5 1007.6 L1011.5 1008.1 L1013.5 1008.1 L1013.5 1004.8 L1015.5 1004.8 L1015.5 1003.1 L1017.5 1003.1 L1017.5 1004.9 L1019.5 1004.9 L1019.5 1006.9 L1021.5 1006.9 L1021.5 1010.8 L1023.5 1010.8 L1023.5 1014.5 L1025.5 1014.5 L1025.5 1020.3 L1027.5 1020.3 L1027.5 1014.2 L1029.5 1014.2 L1029.5 1010.7 L1031.5 1010.7 L1031.5 1013.4 L1033.5 1013.4 L1033.5 1016.9 L1035.5 1016.9 L1035.5 1010.5 L1037.5 1010.5 L1037.5 1002.8 L1039.5 1002.8 L1039.5 990.2 L1041.5 990.2 L1041.5 992.6 L1043.5 992.6 L1043.5 995.6 L1045.5 995.6 L1045.5 999.6 L1047.5 999.6 L1047.5 999.5 L1049.5 999.5 L1049.5 1001.9 L1051.5 1001.9 L1051.5 1001.3 L1053.5 1001.3 L1053.5 1011.8 L1055.5 1011.8 L1055.5 1000.3 L1057.5 1000.3 L1057.5 1000.3 L1059.5 1000.3 L1059.5 1000.4 L1061.5 1000.4 L1061.5 1005.2 L1063.5 1005.2 L1063.5 1006.8 L1065.5 1006.8 L1065.5 1004.8 L1067.5 1004.8 L1067.5 1003.3 L1069.5 1003.3 L1069.5 998.7 L1071.5 998.7 L1071.5 999.4 L1073.5 999.4 L1073.5 1001.9 L1075.5 1001.9 L1075.5 1000.7 L1077.5 1000.7 L1077.5 1003.1 L1079.5 1003.1 L1079.5 1004.8 L1081.5 1004.8 L1081.5 1007.4 L1083.5 1007.4 L1083.5 1005.9 L1085.5 1005.9 L1085.5 1004.5 L1087.5 1004.5 L1087.5 1004.0 L1089.5 1004.0 L1089.5 999.6 L1091.5 999.6 L1091.5 998.9 L1093.5 998.9 L1093.5 999.0 L1095.5 999.0 L1095.5 998.8 L1097.5 998.8 L1097.5 998.4 L1099.5 998.4 L1099.5 1001.8 L1101.5 1001.8 L1101.5 1002.5 L1103.5 1002.5 L1103.5 1000.9 L1105.5 1000.9 L1105.5 1003.6 L1107.5 1003.6 L1107.5 1004.1 L1109.5 1004.1 L1109.5 1005.1 L1111.5 1005.1 L1111.5 1004.7 L1113.5 1004.7 L1113.5 1005.3 L1115.5 1005.3 L1115.5 1004.6 L1117.5 1004.6 L1117.5 1003.3 L1119.5 1003.3 L1119.5 1002.2 L1121.5 1002.2 L1121.5 1002.2 L1123.5 1002.2 L1123.5 995.0 L1125.5 995.0 L1125.5 997.4 L1127.5 997.4 L1127.5 1002.6 L1129.5 1002.6 L1129.5 1000.1 L1131.5 1000.1 L1131.5 997.8 L1133.5 997.8 L1133.5 997.0 L1135.5 997.0 L1135.5 999.7 L1137.5 999.7 L1137.5 1002.5 L1139.5 1002.5 L1139.5 1004.4 L1141.5 1004.4 L1141.5 1003.3 L1143.5 1003.3 L1143.5 1005.1 L1145.5 1005.1 L1145.5 1003.5 L1147.5 1003.5 L1147.5 1001.7 L1149.5 1001.7 L1149.5 1000.4 L1151.5 1000.4 L1151.5 999.7 L1153.5 999.7 L1153.5 999.3 L1155.5 999.3 L1155.5 997.1 L1157.5 997.1 L1157.5 997.3 L1159.5 997.3 L1159.5 995.7 L1161.5 995.7 L1161.5 994.2 L1163.5 994.2 L1163.5 995.4 L1165.5 995.4 L1165.5 997.4 L1167.5 997.4 L1167.5 996.7 L1169.5 996.7 L1169.5 999.5 L1171.5 999.5 L1171.5 999.7 L1173.5 999.7 L1173.5 1001.4 L1175.5 1001.4 L1175.5 1001.8 L1177.5 1001.8 L1177.5 999.9 L1179.5 999.9 L1179.5 1001.9 L1181.5 1001.9 L1181.5 1001.7 L1183.5 1001.7 L1183.5 1004.0 L1185.5 1004.0 L1185.5 1009.3 L1187.5 1009.3 L1187.5 1012.5 L1189.5 1012.5 L1189.5 1017.0 L1191.5 1017.0 L1191.5 1016.0 L1193.5 1016.0 L1193.5 1016.3 L1195.5 1016.3 L1195.5 1015.6 L1197.5 1015.6 L1197.5 1017.7 L1199.5 1017.7 L1199.5 1012.5 L1201.5 1012.5 L1201.5 993.4 L1203.5 993.4 L1203.5 996.9 L1205.5 996.9 L1205.5 1003.9 L1207.5 1003.9 L1207.5 1001.0 L1209.5 1001.0 L1209.5 1000.0 L1211.5 1000.0 L1211.5 1000.7 L1213.5 1000.7 L1213.5 998.4 L1215.5 998.4 L1215.5 1001.1 L1217.5 1001.1 L1217.5 1003.6 L1219.5 1003.6 L1219.5 1008.9 L1221.5 1008.9 L1221.5 1007.0 L1223.5 1007.0 L1223.5 1007.0 L1225.5 1007.0 L1225.5 1010.6 L1227.5 1010.6 L1227.5 1008.6 L1229.5 1008.6 L1229.5 1010.8 L1231.5 1010.8 L1231.5 1009.3 L1233.5 1009.3 L1233.5 1009.1 L1235.5 1009.1 L1235.5 1008.7 L1237.5 1008.7 L1237.5 1006.5 L1239.5 1006.5 L1239.5 1001.6 L1241.5 1001.6 L1241.5 995.2 L1243.5 995.2 L1243.5 994.7 L1245.5 994.7 L1245.5 990.8 L1247.5 990.8 L1247.5 990.5 L1249.5 990.5 L1249.5 989.3 L1251.5 989.3 L1251.5 992.6 L1253.5 992.6 L1253.5 994.3 L1255.5 994.3 L1255.5 992.2 L1257.5 992.2 L1257.5 1002.2 L1259.5 1002.2 L1259.5 1009.0 L1261.5 1009.0 L1261.5 1008.2 L1263.5 1008.2 L1263.5 1004.4 L1265.5 1004.4 L1265.5 1002.5 L1267.5 1002.5 L1267.5 1001.0 L1269.5 1001.0 L1269.5 1000.6 L1271.5 1000.6 L1271.5 1000.9 L1273.5 1000.9 L1273.5 1003.6 L1275.5 1003.6 L1275.5 1003.7 L1277.5 1003.7 L1277.5 1000.8 L1279.5 1000.8 L1279.5 997.7 L1281.5 997.7 L1281.5 994.9 L1283.5 994.9 L1283.5 991.7 L1285.5 991.7 L1285.5 994.6 L1287.5 994.6 L1287.5 997.7 L1289.5 997.7 L1289.5 997.1 L1291.5 997.1 L1291.5 999.7 L1293.5 999.7 L1293.5 998.6 L1295.5 998.6 L1295.5 1001.6 L1297.5 1001.6 L1297.5 1002.8 L1299.5 1002.8 L1299.5 1003.5 L1301.5 1003.5 L1301.5 1003.9 L1303.5 1003.9 L1303.5 1004.8 L1305.5 1004.8 L1305.5 1006.4 L1307.5 1006.4 L1307.5 1008.3 L1309.5 1008.3 L1309.5 1006.6 L1311.5 1006.6 L1311.5 1007.4 L1313.5 1007.4 L1313.5 1010.8 L1315.5 1010.8 L1315.5 1010.5 L1317.5 1010.5 L1317.5 1007.1 L1319.5 1007.1 L1319.5 1001.9 L1321.5 1001.9 L1321.5 1006.5 L1323.5 1006.5 L1323.5 1004.4 L1325.5 1004.4 L1325.5 1004.5 L1327.5 1004.5 L1327.5 1004.0 L1329.5 1004.0 L1329.5 1005.2 L1331.5 1005.2 L1331.5 1004.0 L1333.5 1004.0 L1333.5 1003.5 L1335.5 1003.5 L1335.5 1004.9 L1337.5 1004.9 L1337.5 1006.4 L1339.5 1006.4 L1339.5 1005.3 L1341.5 1005.3 L1341.5 1008.0 L1343.5 1008.0 L1343.5 1008.1 L1345.5 1008.1 L1345.5 1010.1 L1347.5 1010.1 L1347.5 1009.6 L1349.5 1009.6 L1349.5 1008.8 L1351.5 1008.8 L1351.5 1009.0 L1353.5 1009.0 L1353.5 1004.7 L1355.5 1004.7 L1355.5 1001.9 L1357.5 1001.9 L1357.5 997.0 L1359.5 997.0 L1359.5 994.4 L1361.5 994.4 L1361.5 997.8 L1363.5 997.8 L1363.5 1000.3 L1365.5 1000.3 L1365.5 1004.1 L1367.5 1004.1 L1367.5 1003.8 L1369.5 1003.8 L1369.5 1008.9 L1371.5 1008.9 L1371.5 1007.5 L1373.5 1007.5 L1373.5 1005.4 L1375.5 1005.4 L1375.5 1002.4 L1377.5 1002.4 L1377.5 1001.2 L1379.5 1001.2 L1379.5 1000.6 L1381.5 1000.6 L1381.5 999.3 L1383.5 999.3 L1383.5 998.6 L1385.5 998.6 L1385.5 999.1 L1387.5 999.1 L1387.5 999.2 L1389.5 999.2 L1389.5 997.2 L1391.5 997.2 L1391.5 998.1 L1393.5 998.1 L1393.5 1001.4 L1395.5 1001.4 L1395.5 1001.2 L1397.5 1001.2 L1397.5 999.8 L1399.5 999.8 L1399.5 999.3 L1401.5 999.3 L1401.5 1000.5 L1403.5 1000.5 L1403.5 999.8 L1405.5 999.8 L1405.5 1000.2 L1407.5 1000.2 L1407.5 999.3 L1409.5 999.3 L1409.5 996.5 L1411.5 996.5 L1411.5 997.2 L1413.5 997.2 L1413.5 999.4 L1415.5 999.4 L1415.5 1001.2 L1417.5 1001.2 L1417.5 1004.2 L1419.5 1004.2 L1419.5 1005.9 L1421.5 1005.9 L1421.5 1007.2 L1423.5 1007.2 L1423.5 1006.0 L1425.5 1006.0 L1425.5 1009.3 L1427.5 1009.3 L1427.5 1008.4 L1429.5 1008.4 L1429.5 1009.5 L1431.5 1009.5 L1431.5 1006.0 L1433.5 1006.0 L1433.5 999.1 L1435.5 999.1 L1435.5 995.1 L1437.5 995.1 L1437.5 1000.9 L1439.5 1000.9 L1439.5 1002.1 L1441.5 1002.1 L1441.5 1005.4 L1443.5 1005.4 L1443.5 1008.5 L1445.5 1008.5 L1445.5 1007.7 L1447.5 1007.7 L1447.5 1004.1 L1449.5 1004.1 L1449.5 1004.2 L1451.5 1004.2 L1451.5 1003.4 L1453.5 1003.4 L1453.5 1002.5 L1455.5 1002.5 L1455.5 1000.4 L1457.5 1000.4 L1457.5 1001.6 L1459.5 1001.6 L1459.5 1004.9 L1461.5 1004.9 L1461.5 1004.9 L1463.5 1004.9 L1463.5 1005.5 L1465.5 1005.5 L1465.5 1003.2 L1467.5 1003.2 L1467.5 1003.1 L1469.5 1003.1 L1469.5 1003.7 L1471.5 1003.7 L1471.5 1001.0 L1473.5 1001.0 L1473.5 1003.1 L1475.5 1003.1 L1475.5 1003.9 L1477.5 1003.9 L1477.5 1002.2 L1479.5 1002.2 L1479.5 1006.5 L1481.5 1006.5 L1481.5 1005.5 L1483.5 1005.5 L1483.5 1007.3 L1485.5 1007.3 L1485.5 1007.6 L1487.5 1007.6 L1487.5 1006.3 L1489.5 1006.3 L1489.5 1008.1 L1491.5 1008.1 L1491.5 1008.3 L1493.5 1008.3 L1493.5 1009.3 L1495.5 1009.3 L1495.5 1009.1 L1497.5 1009.1 L1497.5 1014.8 L1499.5 1014.8 L1499.5 1018.1 L1501.5 1018.1 L1501.5 1018.9 L1503.5 1018.9 L1503.5 1020.2 L1505.5 1020.2 L1505.5 1020.5 L1507.5 1020.5 L1507.5 1022.2 L1509.5 1022.2 L1509.5 1019.3 L1511.5 1019.3 L1511.5 1018.3 L1513.5 1018.3 L1513.5 999.8 L1515.5 999.8 L1515.5 1000.5 L1517.5 1000.5 L1517.5 1002.5 L1519.5 1002.5 L1519.5 1005.4 L1521.5 1005.4 L1521.5 1002.4 L1523.5 1002.4 L1523.5 997.9 L1525.5 997.9 L1525.5 997.6 L1527.5 997.6 L1527.5 998.9 L1529.5 998.9 L1529.5 1005.0 L1531.5 1005.0 L1531.5 1013.5 L1533.5 1013.5 L1533.5 1010.9 L1535.5 1010.9 L1535.5 1011.9 L1537.5 1011.9 L1537.5 1013.5 L1539.5 1013.5 L1539.5 1013.4 L1541.5 1013.4 L1541.5 1013.5 L1543.5 1013.5 L1543.5 1014.1 L1545.5 1014.1 L1545.5 1013.7 L1547.5 1013.7 L1547.5 1013.4 L1549.5 1013.4 L1549.5 1013.2 L1551.5 1013.2 L1551.5 1004.4 L1553.5 1004.4 L1553.5 1007.3 L1555.5 1007.3 L1555.5 1008.1 L1557.5 1008.1 L1557.5 1009.2 L1559.5 1009.2 L1559.5 1013.5 L1561.5 1013.5 L1561.5 1013.8 L1563.5 1013.8 L1563.5 1012.2 L1565.5 1012.2 L1565.5 1010.8 L1567.5 1010.8 L1567.5 1010.9 L1569.5 1010.9 L1569.5 1006.1 L1571.5 1006.1 L1571.5 1006.1 L1573.5 1006.1 L1573.5 1003.4 L1575.5 1003.4 L1575.5 1001.6 L1577.5 1001.6 L1577.5 996.7 L1579.5 996.7 L1579.5 997.0 L1581.5 997.0 L1581.5 997.6 L1583.5 997.6 L1583.5 1002.4 L1585.5 1002.4 L1585.5 1010.8 L1587.5 1010.8 L1587.5 1010.5 L1589.5 1010.5 L1589.5 1012.2 L1591.5 1012.2 L1591.5 1009.6 L1593.5 1009.6 L1593.5 997.4 L1595.5 997.4 L1595.5 991.2 L1597.5 991.2 L1597.5 993.9 L1599.5 993.9 L1599.5 999.0 L1601.5 999.0 L1601.5 999.3 L1603.5 999.3 L1603.5 997.7 L1605.5 997.7 L1605.5 998.1 L1607.5 998.1 L1607.5 999.4 L1609.5 999.4 L1609.5 1005.2 L1611.5 1005.2 L1611.5 1012.5 L1613.5 1012.5 L1613.5 1004.8 L1615.5 1004.8 L1615.5 997.4 L1617.5 997.4 L1617.5 995.0 L1619.5 995.0 L1619.5 995.5 L1621.5 995.5 L1621.5 1000.7 L1623.5 1000.7 L1623.5 1007.9 L1625.5 1007.9 L1625.5 1006.8 L1627.5 1006.8 L1627.5 1003.5 L1629.5 1003.5 L1629.5 1002.8 L1631.5 1002.8 L1631.5 1006.0 L1633.5 1006.0 L1633.5 1004.6 L1635.5 1004.6 L1635.5 1010.0 L1637.5 1010.0 L1637.5 1013.3 L1639.5 1013.3 L1639.5 1016.5 L1641.5 1016.5 L1641.5 1015.4 L1643.5 1015.4 L1643.5 1012.0 L1645.5 1012.0 L1645.5 1008.1 L1647.5 1008.1 L1647.5 1002.5 L1649.5 1002.5 L1649.5 997.2 L1651.5 997.2 L1651.5 995.0 L1653.5 995.0 L1653.5 992.4 L1655.5 992.4 L1655.5 995.9 L1657.5 995.9 L1657.5 996.5 L1659.5 996.5 L1659.5 999.0 L1661.5 999.0 L1661.5 1001.4 L1663.5 1001.4 L1663.5 1000.3 L1665.5 1000.3 L1665.5 1000.4 L1667.5 1000.4 L1667.5 997.3 L1669.5 997.3 L1669.5 997.1 L1671.5 997.1 L1671.5 1000.2 L1673.5 1000.2 L1673.5 1002.9 L1675.5 1002.9 L1675.5 1003.1 L1677.5 1003.1 L1677.5 1005.3 L1679.5 1005.3 L1679.5 1004.5 L1681.5 1004.5 L1681.5 1005.3 L1683.5 1005.3 L1683.5 1003.1 L1685.5 1003.1 L1685.5 999.6 L1687.5 999.6 L1687.5 997.6 L1689.5 997.6 L1689.5 1001.5 L1691.5 1001.5 L1691.5 1003.8 L1693.5 1003.8 L1693.5 1003.6 L1695.5 1003.6 L1695.5 1005.6 L1697.5 1005.6 L1697.5 1003.0 L1699.5 1003.0 L1699.5 999.0 L1701.5 999.0 L1701.5 998.1 L1703.5 998.1 L1703.5 996.7 L1705.5 996.7 L1705.5 997.5 L1707.5 997.5 L1707.5 1000.6 L1709.5 1000.6 L1709.5 1003.4 L1711.5 1003.4 L1711.5 1002.6 L1713.5 1002.6 L1713.5 1003.2 L1715.5 1003.2 L1715.5 1001.2 L1717.5 1001.2 L1717.5 998.8 L1719.5 998.8 L1719.5 1002.2 L1721.5 1002.2 L1721.5 1002.1 L1723.5 1002.1 L1723.5 1004.1 L1725.5 1004.1 L1725.5 1003.9 L1727.5 1003.9 L1727.5 1003.5 L1729.5 1003.5 L1729.5 1001.6 L1731.5 1001.6 L1731.5 1002.8 L1733.5 1002.8 L1733.5 1006.5 L1735.5 1006.5 L1735.5 1011.3 L1737.5 1011.3 L1737.5 1013.4 L1739.5 1013.4 L1739.5 1006.8 L1741.5 1006.8 L1741.5 998.2 L1743.5 998.2 L1743.5 991.1 L1745.5 991.1 L1745.5 986.9 L1747.5 986.9 L1747.5 992.3 L1749.5 992.3 L1749.5 999.6 L1751.5 999.6 L1751.5 999.9 L1753.5 999.9 L1753.5 1001.5 L1755.5 1001.5 L1755.5 1002.6 L1757.5 1002.6 L1757.5 1002.4 L1759.5 1002.4 L1759.5 1001.4 L1761.5 1001.4 L1761.5 1001.4 L1763.5 1001.4 L1763.5 999.2 L1765.5 999.2 L1765.5 998.9 L1767.5 998.9 L1767.5 999.1 L1769.5 999.1 L1769.5 997.0 L1771.5 997.0 L1771.5 995.3 L1773.5 995.3 L1773.5 998.4 L1775.5 998.4 L1775.5 998.4 L1777.5 998.4 L1777.5 997.8 L1779.5 997.8 L1779.5 998.5 L1781.5 998.5 L1781.5 999.7 L1783.5 999.7 L1783.5 995.7 L1785.5 995.7 L1785.5 996.0 L1787.5 996.0 L1787.5 998.0 L1789.5 998.0 L1789.5 1001.5 L1791.5 1001.5 L1791.5 1005.1 L1793.5 1005.1 L1793.5 1002.8 L1795.5 1002.8 L1795.5 1004.0 L1797.5 1004.0 L1797.5 1003.0 L1799.5 1003.0 L1799.5 1007.5 L1801.5 1007.5 L1801.5 1010.0 L1803.5 1010.0 L1803.5 1008.5 L1805.5 1008.5 L1805.5 1005.4 L1807.5 1005.4 L1807.5 1005.0 L1809.5 1005.0 L1809.5 1006.5 L1811.5 1006.5 L1811.5 1008.0 L1813.5 1008.0 L1813.5 1010.9 L1815.5 1010.9 L1815.5 1012.9 L1817.5 1012.9 L1817.5 1016.3 L1819.5 1016.3 L1819.5 1021.3 L1821.5 1021.3 L1821.5 1005.8 L1823.5 1005.8 L1823.5 1004.7 L1825.5 1004.7 L1825.5 1001.4 L1827.5 1001.4 L1827.5 1001.7 L1829.5 1001.7 L1829.5 1000.6 L1831.5 1000.6 L1831.5 998.3 L1833.5 998.3 L1833.5 1006.1 L1835.5 1006.1 L1835.5 1009.1 L1837.5 1009.1 L1837.5 1008.0 L1839.5 1008.0 L1839.5 1008.7 L1841.5 1008.7 L1841.5 1006.9 L1843.5 1006.9 L1843.5 1007.9 L1845.5 1007.9 L1845.5 1006.2 L1847.5 1006.2 L1847.5 1006.9 L1849.5 1006.9 L1849.5 1008.4 L1851.5 1008.4 L1851.5 1012.6 L1853.5 1012.6 L1853.5 1010.5 L1855.5 1010.5 L1855.5 1009.4 L1857.5 1009.4 L1857.5 1005.2 L1859.5 1005.2 L1859.5 1003.9 L1861.5 1003.9 L1861.5 998.6 L1863.5 998.6 L1863.5 996.6 L1865.5 996.6 L1865.5 997.7 L1867.5 997.7 L1867.5 1000.6 L1869.5 1000.6 L1869.5 1001.0 L1871.5 1001.0 L1871.5 1000.9 L1873.5 1000.9 L1873.5 1000.9 L1875.5 1000.9 L1875.5 1003.3 L1877.5 1003.3 L1877.5 1004.6 L1879.5 1004.6 L1879.5 1003.5 L1881.5 1003.5 L1881.5 1001.6 L1883.5 1001.6 L1883.5 1002.0 L1885.5 1002.0 L1885.5 1002.4 L1887.5 1002.4 L1887 1004.1 L1887 1074Z" fill="url(#bg2)"/><path d="M603.5 955H1887" stroke="#a05050" stroke-width="1"/><path d="M603.5 961H1887" stroke="#7a7a7a" stroke-opacity="0.8" stroke-width="1.2"/><path d="M603.5 971H1887" stroke="#7a7a7a" stroke-opacity="0.8" stroke-width="1.2"/><path d="M603.5 981H1887" stroke="#7a7a7a" stroke-opacity="0.8" stroke-width="1.2"/><path d="M603.5 989H1887" stroke="#7a7a7a" stroke-opacity="0.8" stroke-width="1.2"/><path d="M603.5 1011H1887" stroke="#40c8f0" stroke-opacity="0.45" stroke-width="1.2"/><path d="M603.5 1040H1887" stroke="#40c8f0" stroke-opacity="0.35" stroke-width="1" stroke-dasharray="2 1"/><path d="M607 949V1074" stroke="#ffffff" stroke-opacity="0.25" stroke-width="1.2"/><path d="M668 949V1074" stroke="#ffffff" stroke-opacity="0.25" stroke-width="1.2"/><path d="M728 949V1074" stroke="#ffffff" stroke-opacity="0.25" stroke-width="1.2"/><path d="M787 949V1074" stroke="#ffffff" stroke-opacity="0.25" stroke-width="1.2"/><path d="M846 949V1074" stroke="#ffffff" stroke-opacity="0.25" stroke-width="1.2"/><path d="M907 949V1074" stroke="#ffffff" stroke-opacity="0.25" stroke-width="1.2"/><path d="M967 949V1074" stroke="#ffffff" stroke-opacity="0.25" stroke-width="1.2"/><path d="M1026 949V1074" stroke="#ffffff" stroke-opacity="0.25" stroke-width="1.2"/><path d="M1082 949V1074" stroke="#ffffff" stroke-opacity="0.25" stroke-width="1.2"/><path d="M1135 949V1074" stroke="#ffffff" stroke-opacity="0.25" stroke-width="1.2"/><path d="M1195 949V1074" stroke="#ffffff" stroke-opacity="0.25" stroke-width="1.2"/><path d="M1256 949V1074" stroke="#ffffff" stroke-opacity="0.25" stroke-width="1.2"/><path d="M1315 949V1074" stroke="#ffffff" stroke-opacity="0.25" stroke-width="1.2"/><path d="M1375 949V1074" stroke="#ffffff" stroke-opacity="0.25" stroke-width="1.2"/><path d="M1435 949V1074" stroke="#ffffff" stroke-opacity="0.25" stroke-width="1.2"/><path d="M1496 949V1074" stroke="#ffffff" stroke-opacity="0.25" stroke-width="1.2"/><path d="M1556 949V1074" stroke="#ffffff" stroke-opacity="0.25" stroke-width="1.2"/><path d="M1614 949V1074" stroke="#ffffff" stroke-opacity="0.25" stroke-width="1.2"/><path d="M1672 949V1074" stroke="#ffffff" stroke-opacity="0.25" stroke-width="1.2"/><path d="M1732 949V1074" stroke="#ffffff" stroke-opacity="0.25" stroke-width="1.2"/><path d="M1791 949V1074" stroke="#ffffff" stroke-opacity="0.25" stroke-width="1.2"/></svg>
<div class="a" style="left:603px;top:1055px;width:40px;height:19px;overflow:hidden;z-index:4"><div class="t" style="left:-31px;width:70px;text-align:center;top:4px;font-size:11px;font-weight:bold;color:#d8e4e8;letter-spacing:-0.3px">00:01:53</div></div>
<div class="t" style="left:633px;width:70px;text-align:center;top:1059px;font-size:11px;font-weight:bold;color:#d8e4e8;letter-spacing:-0.3px">00:01:54</div>
<div class="t" style="left:693px;width:70px;text-align:center;top:1059px;font-size:11px;font-weight:bold;color:#d8e4e8;letter-spacing:-0.3px">00:01:55</div>
<div class="t" style="left:752px;width:70px;text-align:center;top:1059px;font-size:11px;font-weight:bold;color:#d8e4e8;letter-spacing:-0.3px">00:01:56</div>
<div class="t" style="left:811px;width:70px;text-align:center;top:1059px;font-size:11px;font-weight:bold;color:#d8e4e8;letter-spacing:-0.3px">00:01:57</div>
<div class="t" style="left:872px;width:70px;text-align:center;top:1059px;font-size:11px;font-weight:bold;color:#d8e4e8;letter-spacing:-0.3px">00:01:58</div>
<div class="t" style="left:932px;width:70px;text-align:center;top:1059px;font-size:11px;font-weight:bold;color:#d8e4e8;letter-spacing:-0.3px">00:01:59</div>
<div class="t" style="left:991px;width:70px;text-align:center;top:1059px;font-size:11px;font-weight:bold;color:#d8e4e8;letter-spacing:-0.3px">00:02:00</div>
<div class="t" style="left:1047px;width:70px;text-align:center;top:1059px;font-size:11px;font-weight:bold;color:#d8e4e8;letter-spacing:-0.3px">00:02:01</div>
<div class="t" style="left:1100px;width:70px;text-align:center;top:1059px;font-size:11px;font-weight:bold;color:#d8e4e8;letter-spacing:-0.3px">00:02:02</div>
<div class="t" style="left:1160px;width:70px;text-align:center;top:1059px;font-size:11px;font-weight:bold;color:#d8e4e8;letter-spacing:-0.3px">00:02:03</div>
<div class="t" style="left:1221px;width:70px;text-align:center;top:1059px;font-size:11px;font-weight:bold;color:#d8e4e8;letter-spacing:-0.3px">00:02:04</div>
<div class="t" style="left:1280px;width:70px;text-align:center;top:1059px;font-size:11px;font-weight:bold;color:#d8e4e8;letter-spacing:-0.3px">00:02:05</div>
<div class="t" style="left:1340px;width:70px;text-align:center;top:1059px;font-size:11px;font-weight:bold;color:#d8e4e8;letter-spacing:-0.3px">00:02:06</div>
<div class="t" style="left:1400px;width:70px;text-align:center;top:1059px;font-size:11px;font-weight:bold;color:#d8e4e8;letter-spacing:-0.3px">00:02:07</div>
<div class="t" style="left:1461px;width:70px;text-align:center;top:1059px;font-size:11px;font-weight:bold;color:#d8e4e8;letter-spacing:-0.3px">00:02:08</div>
<div class="t" style="left:1521px;width:70px;text-align:center;top:1059px;font-size:11px;font-weight:bold;color:#d8e4e8;letter-spacing:-0.3px">00:02:09</div>
<div class="t" style="left:1579px;width:70px;text-align:center;top:1059px;font-size:11px;font-weight:bold;color:#d8e4e8;letter-spacing:-0.3px">00:02:10</div>
<div class="t" style="left:1637px;width:70px;text-align:center;top:1059px;font-size:11px;font-weight:bold;color:#d8e4e8;letter-spacing:-0.3px">00:02:11</div>
<div class="t" style="left:1697px;width:70px;text-align:center;top:1059px;font-size:11px;font-weight:bold;color:#d8e4e8;letter-spacing:-0.3px">00:02:12</div>
<div class="t" style="left:1756px;width:70px;text-align:center;top:1059px;font-size:11px;font-weight:bold;color:#d8e4e8;letter-spacing:-0.3px">00:02:13</div>
<div class="t" style="left:568px;width:30px;text-align:right;top:954.5px;font-size:10px;color:#9c9c9c;letter-spacing:-0.3px">0</div>
<div class="t" style="left:1893px;top:954.5px;font-size:10px;color:#9c9c9c;letter-spacing:-0.3px">0</div>
<div class="t" style="left:568px;width:30px;text-align:right;top:974.5px;font-size:10px;color:#9c9c9c;letter-spacing:-0.3px">-3</div>
<div class="t" style="left:1893px;top:974.5px;font-size:10px;color:#9c9c9c;letter-spacing:-0.3px">-3</div>
<div class="t" style="left:568px;width:30px;text-align:right;top:990.5px;font-size:10px;color:#9c9c9c;letter-spacing:-0.3px">-9</div>
<div class="t" style="left:1893px;top:990.5px;font-size:10px;color:#9c9c9c;letter-spacing:-0.3px">-9</div>
<div class="t" style="left:568px;width:30px;text-align:right;top:1006.5px;font-size:10px;color:#9c9c9c;letter-spacing:-0.3px">-18</div>
<div class="t" style="left:1893px;top:1006.5px;font-size:10px;color:#9c9c9c;letter-spacing:-0.3px">-18</div>
<div class="t" style="left:568px;width:30px;text-align:right;top:1035.5px;font-size:10px;color:#9c9c9c;letter-spacing:-0.3px">-40</div>
<div class="t" style="left:1893px;top:1035.5px;font-size:10px;color:#9c9c9c;letter-spacing:-0.3px">-40</div>
<div class="t" style="left:568px;width:30px;text-align:right;top:1060.5px;font-size:10px;color:#9c9c9c;letter-spacing:-0.3px">-72</div>
<div class="t" style="left:1893px;top:1060.5px;font-size:10px;color:#9c9c9c;letter-spacing:-0.3px">-72</div>
</body></html>
